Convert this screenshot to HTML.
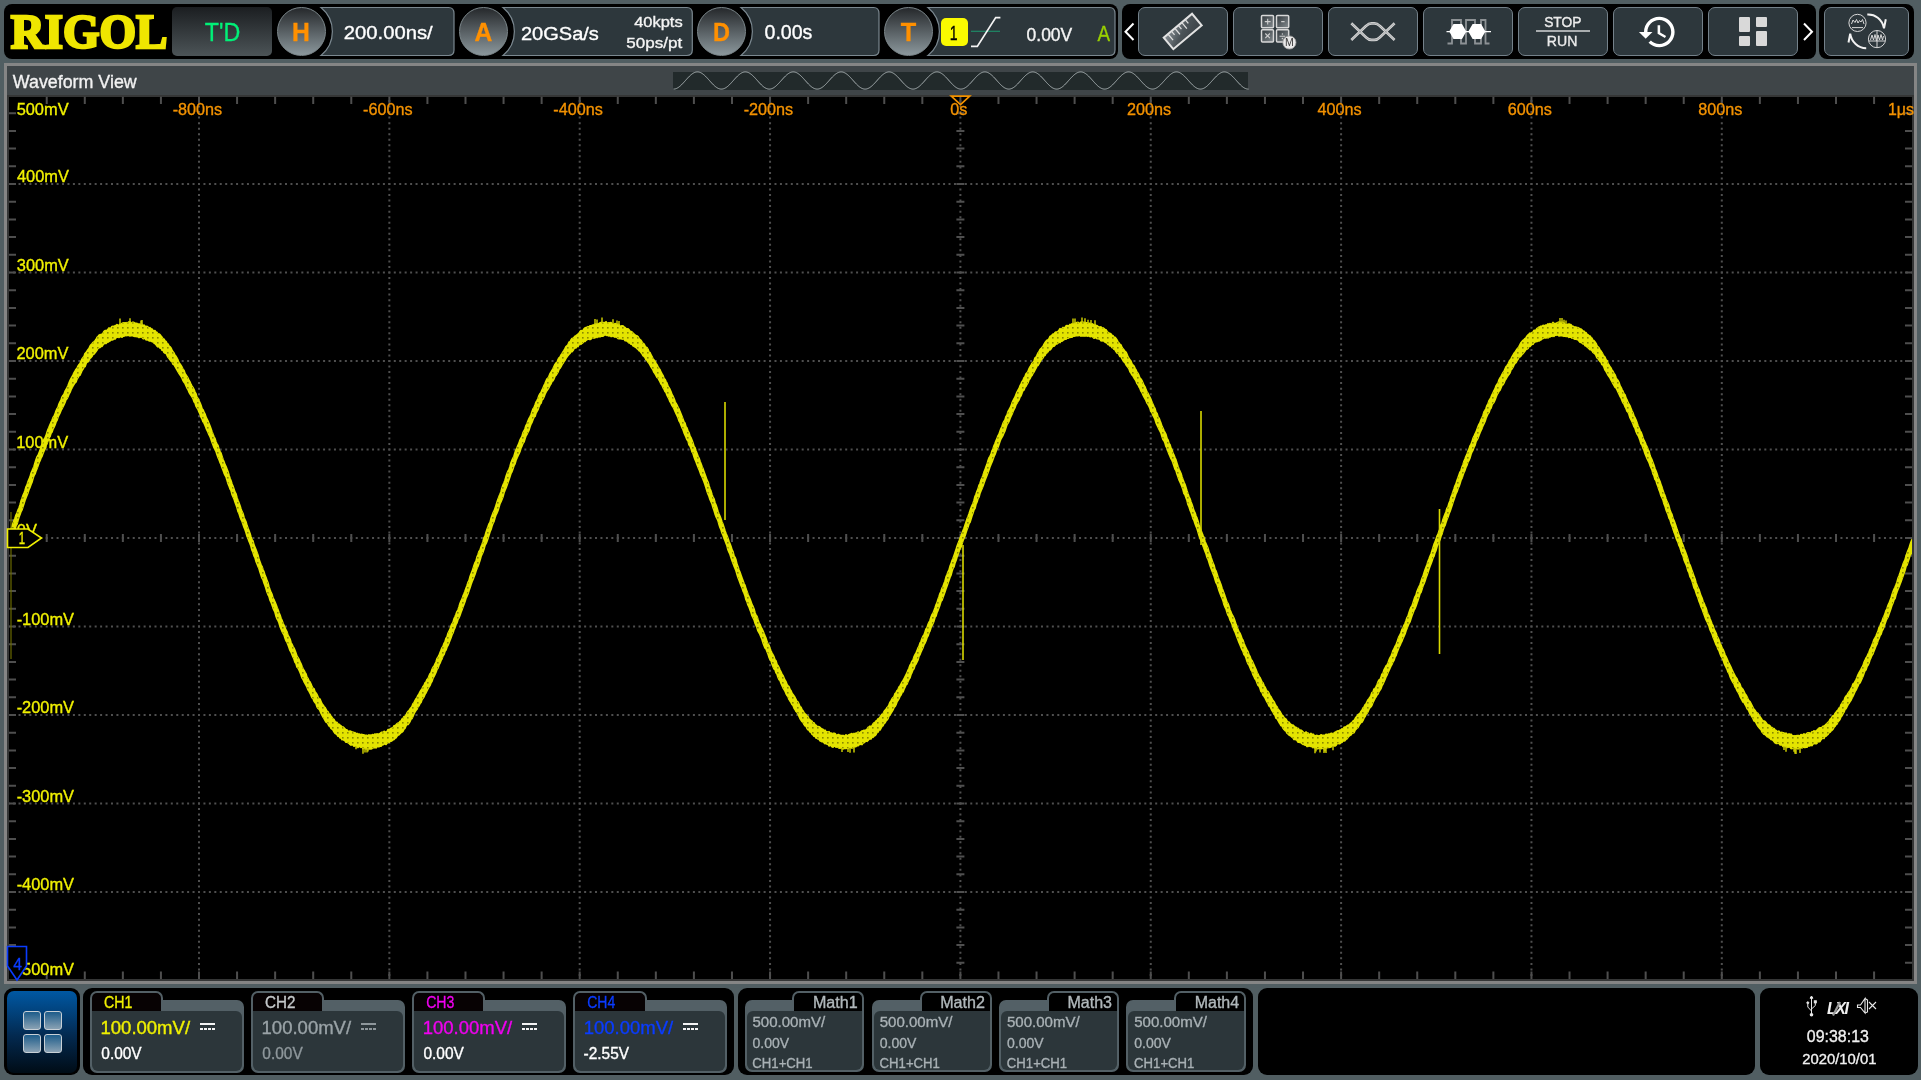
<!DOCTYPE html><html><head><meta charset="utf-8"><style>
*{margin:0;padding:0;box-sizing:border-box}
html,body{width:1921px;height:1080px;overflow:hidden;background:#515e62;font-family:"Liberation Sans", sans-serif;}
.a{position:absolute}
svg{will-change:transform}
.bar{position:absolute;background:#000;border-radius:8px}
.circ{position:absolute;width:49px;height:49px;border-radius:50%;background:linear-gradient(#26292c,#8b979c);border:1px solid #7d888c}
.btn{position:absolute;top:7px;height:49px;width:90px;background:#2d373c;border:1.2px solid #74818a;border-radius:7px}
</style></head><body><div class="bar" style="left:4px;top:4px;width:1114px;height:55px"></div><div class="bar" style="left:1122px;top:4px;width:694px;height:55px"></div><div class="bar" style="left:1819px;top:4px;width:95px;height:55px"></div><div class="a" style="left:172px;top:7px;width:100px;height:49px;border-radius:5px;background:linear-gradient(#1b1e21,#4c5457)"></div><div class="circ" style="left:277.0px;top:7px"></div><svg class="a" style="left:301.5px;top:0px" width="153.5" height="64"><path d="M19.0 7.5 H146.5 Q152.0 7.5 152.0 13.5 V50 Q152.0 55.5 146.5 55.5 H19.0 A31 31 0 0 0 19.0 7.5 Z" fill="#2d373c" stroke="#7b8890" stroke-width="1.2"/></svg><div class="circ" style="left:459.2px;top:7px"></div><svg class="a" style="left:483.7px;top:0px" width="209.8" height="64"><path d="M19.0 7.5 H202.8 Q208.3 7.5 208.3 13.5 V50 Q208.3 55.5 202.8 55.5 H19.0 A31 31 0 0 0 19.0 7.5 Z" fill="#2d373c" stroke="#7b8890" stroke-width="1.2"/></svg><div class="circ" style="left:697.0px;top:7px"></div><svg class="a" style="left:721.5px;top:0px" width="158.5" height="64"><path d="M19.0 7.5 H151.5 Q157.0 7.5 157.0 13.5 V50 Q157.0 55.5 151.5 55.5 H19.0 A31 31 0 0 0 19.0 7.5 Z" fill="#2d373c" stroke="#7b8890" stroke-width="1.2"/></svg><div class="circ" style="left:884.0px;top:7px"></div><svg class="a" style="left:908.5px;top:0px" width="207.5" height="64"><path d="M19.0 7.5 H200.5 Q206.0 7.5 206.0 13.5 V50 Q206.0 55.5 200.5 55.5 H19.0 A31 31 0 0 0 19.0 7.5 Z" fill="#2d373c" stroke="#7b8890" stroke-width="1.2"/></svg><div class="a" style="left:941px;top:17.7px;width:26.7px;height:28.5px;border-radius:5px;background:#fafa00"></div><svg class="a" style="left:965px;top:10px" width="40" height="42"><line x1="6" y1="21.3" x2="35" y2="21.3" stroke="#1f8a66" stroke-width="1.2"/><path d="M6 36.4 H12.3 L30.7 7.6 H35.4" fill="none" stroke="#f4f4f4" stroke-width="1.7"/></svg><svg class="a" style="left:1120px;top:20px" width="20" height="24"><path d="M13.5 3.5 L5.5 11.7 L13.5 20" fill="none" stroke="#fff" stroke-width="2"/></svg><div class="btn" style="left:1138px;width:90px"></div><div class="btn" style="left:1233px;width:90px"></div><div class="btn" style="left:1328px;width:90px"></div><div class="btn" style="left:1423px;width:90px"></div><div class="btn" style="left:1518px;width:90px"></div><div class="btn" style="left:1613px;width:90px"></div><div class="btn" style="left:1708px;width:90px"></div><div class="btn" style="left:1824px;width:85px"></div><svg class="a" style="left:1799px;top:20px" width="20" height="24"><path d="M5 3.5 L13 11.7 L5 20" fill="none" stroke="#fff" stroke-width="2"/></svg><div class="a" style="left:1536px;top:30px;width:54px;height:2px;background:#a9adaf"></div><div class="a" style="left:1739px;top:17px;width:11px;height:15px;background:#d9d9d9;border-radius:1px"></div><div class="a" style="left:1739px;top:36px;width:11px;height:10px;background:#d9d9d9;border-radius:1px"></div><div class="a" style="left:1755.5px;top:17px;width:11.5px;height:10px;background:#d9d9d9;border-radius:1px"></div><div class="a" style="left:1755.5px;top:30.5px;width:11.5px;height:15.5px;background:#d9d9d9;border-radius:1px"></div><svg class="a" style="left:0;top:0" width="1921" height="64">
<defs>
<linearGradient id="rg" x1="0" y1="0" x2="1" y2="1"><stop offset="0" stop-color="#8a9196"/><stop offset="0.5" stop-color="#4b5358"/><stop offset="1" stop-color="#3a4146"/></linearGradient>
<linearGradient id="sg" x1="0" y1="0" x2="1" y2="1"><stop offset="0" stop-color="#2f363a"/><stop offset="1" stop-color="#858c90"/></linearGradient>
</defs>
<!-- ruler -->
<g transform="translate(1182.7 31.4) rotate(-40)">
<rect x="-18.5" y="-7.5" width="37" height="15" fill="url(#rg)" stroke="#e2e2e2" stroke-width="2"/>
<path d="M-13 -7.5v8 M-8.5 -7.5v5 M-4 -7.5v8 M0.5 -7.5v5 M5 -7.5v8 M9.5 -7.5v5" stroke="#dedede" stroke-width="1.3"/>
</g>
<!-- math -->
<g stroke="#d8d8d8" stroke-width="1.5" fill="url(#sg)">
<rect x="1261.5" y="15.5" width="12" height="12.2" rx="1"/>
<rect x="1276.5" y="15.5" width="12.2" height="12.2" rx="1"/>
<rect x="1261.5" y="29.8" width="12" height="12.2" rx="1"/>
<rect x="1276.5" y="29.8" width="12.2" height="12.2" rx="1"/>
</g>
<path d="M1264.8 21.6h5.8M1267.7 18.8v5.8 M1281.2 21.6h3.4 M1265.3 33.5l4.6 4.6M1269.9 33.5l-4.6 4.6 M1279.5 36.3h5.6" stroke="#d0d0d0" stroke-width="1.1" fill="none"/>
<circle cx="1282.4" cy="34" r="0.7" fill="#d0d0d0"/><circle cx="1282.4" cy="38.5" r="0.7" fill="#d0d0d0"/>
<circle cx="1289.4" cy="42.5" r="6.6" fill="#e9e9e9" stroke="#9a9a9a" stroke-width="0.8"/>
<text x="1289.4" y="46.3" font-family="Liberation Sans" font-size="10.5" fill="#3a3a3a" text-anchor="middle">M</text>
<!-- eye -->
<path d="M1351.3 23.3 L1366.2 37.5 Q1368.6 39.9 1371.5 39.9 H1374.4 Q1377.3 39.9 1379.7 37.5 L1394.6 23.3" fill="none" stroke="#d4d4d4" stroke-width="2.6" stroke-linejoin="round"/>
<path d="M1351.3 40 L1366.2 25.8 Q1368.6 23.4 1371.5 23.4 H1374.4 Q1377.3 23.4 1379.7 25.8 L1394.6 40" fill="none" stroke="#d4d4d4" stroke-width="2.6" stroke-linejoin="round"/>
<path d="M1351.3 23.3 L1366.2 37.5 Q1368.6 39.9 1371.5 39.9 H1374.4 Q1377.3 39.9 1379.7 37.5 L1394.6 23.3" fill="none" stroke="#3a4449" stroke-width="0.6" opacity="0.5"/>
<path d="M1351.3 40 L1366.2 25.8 Q1368.6 23.4 1371.5 23.4 H1374.4 Q1377.3 23.4 1379.7 25.8 L1394.6 40" fill="none" stroke="#3a4449" stroke-width="0.6" opacity="0.5"/>
<!-- decode -->
<path d="M1447.5 43.5 H1452 V20 H1461 V43.5 H1466 V20 H1475 V43.5 H1481 V20 H1485.5 V43.5 H1489.5" fill="none" stroke="#8d9295" stroke-width="1.8"/>
<path d="M1449.2 31.6 L1453.5 24 H1462 L1466.3 31.6 L1462 39 H1453.5 Z M1468.3 31.6 L1472.6 24 H1481.1 L1485.4 31.6 L1481.1 39 H1472.6 Z" fill="#fff"/>
<path d="M1446.5 31.6 H1491" stroke="#fff" stroke-width="1.4"/>
<!-- history (material) -->
<g transform="translate(1637.2 11.6) scale(1.7)">
<path d="M13 3c-4.97 0-9 4.03-9 9H1l3.89 3.89.07.14L9 12H6c0-3.87 3.13-7 7-7s7 3.13 7 7-3.13 7-7 7c-1.93 0-3.68-.79-4.94-2.06l-1.42 1.42C8.27 19.99 10.51 21 13 21c4.97 0 9-4.03 9-9s-4.03-9-9-9zm-1 5v5l4.28 2.54.72-1.21-3.5-2.08V8H12z" fill="#fff"/>
</g>
<!-- swap -->
<g fill="none" stroke="#d8d8d8" stroke-width="1">
<circle cx="1857.5" cy="22.9" r="8.6"/>
<circle cx="1877" cy="39.1" r="8.6"/>
<path d="M1851.5 24 L1853 20 L1855 22.5 L1856.5 19.5 L1858 23 L1859.5 20.5 L1861 22 L1862.5 19.5 L1864 24"/>
<path d="M1852 27.6 H1863"/>
<path d="M1877 30.7 V47.5 M1869 41 H1885"/>
<path d="M1870.5 40 L1872 35 L1873.5 40 L1875 34.5 L1876.5 41 L1878 35 L1879.5 40 L1881 34.5 L1882.5 40 L1883.5 36"/>
</g>
<g fill="none" stroke="#f2f2f2" stroke-width="2">
<path d="M1867.3 14.6 C1875 14.2 1882 19 1884 28.2 L1885.8 19.2"/>
<path d="M1866.2 48.2 C1858 48.2 1851.5 42 1850.2 33.6 L1848.5 42.5"/>
</g>
</svg>
<svg class="a" style="left:0;top:0" width="1921" height="64"><text transform="translate(10.83 47.90) scale(0.981 1)" font-family="'Liberation Serif', serif" font-size="47.88" font-weight="bold" font-style="normal" fill="#efe600" stroke="#efe600" stroke-width="2.6" stroke-linejoin="miter">RIGOL</text><text transform="translate(204.73 41.00) scale(0.887 1)" font-family="'Liberation Sans', sans-serif" font-size="26.23" font-weight="normal" font-style="normal" fill="#00f078"  stroke="#00f078" stroke-width="0.35">T'D</text><text transform="translate(292.02 40.70) scale(0.976 1)" font-family="'Liberation Sans', sans-serif" font-size="25.29" font-weight="bold" font-style="normal" fill="#ff9000"  stroke="#ff9000" stroke-width="0.35">H</text><text transform="translate(474.61 41.00) scale(0.955 1)" font-family="'Liberation Sans', sans-serif" font-size="25.86" font-weight="bold" font-style="normal" fill="#ff9000"  stroke="#ff9000" stroke-width="0.35">A</text><text transform="translate(712.99 40.60) scale(0.921 1)" font-family="'Liberation Sans', sans-serif" font-size="25.51" font-weight="bold" font-style="normal" fill="#ff9000"  stroke="#ff9000" stroke-width="0.35">D</text><text transform="translate(900.85 40.60) scale(1.008 1)" font-family="'Liberation Sans', sans-serif" font-size="25.14" font-weight="bold" font-style="normal" fill="#ff9000"  stroke="#ff9000" stroke-width="0.35">T</text><text transform="translate(343.79 39.00) scale(1.055 1)" font-family="'Liberation Sans', sans-serif" font-size="19.18" font-weight="normal" font-style="normal" fill="#fff"  stroke="#fff" stroke-width="0.35">200.00ns/</text><text transform="translate(520.90 40.00) scale(1.076 1)" font-family="'Liberation Sans', sans-serif" font-size="18.63" font-weight="normal" font-style="normal" fill="#fff"  stroke="#fff" stroke-width="0.35">20GSa/s</text><text transform="translate(634.17 26.70) scale(1.134 1)" font-family="'Liberation Sans', sans-serif" font-size="14.52" font-weight="normal" font-style="normal" fill="#f4f4f4"  stroke="#f4f4f4" stroke-width="0.35">40kpts</text><text transform="translate(626.32 47.80) scale(1.100 1)" font-family="'Liberation Sans', sans-serif" font-size="15.48" font-weight="normal" font-style="normal" fill="#f4f4f4"  stroke="#f4f4f4" stroke-width="0.35">50ps/pt</text><text transform="translate(764.51 39.00) scale(0.938 1)" font-family="'Liberation Sans', sans-serif" font-size="20.86" font-weight="normal" font-style="normal" fill="#fff"  stroke="#fff" stroke-width="0.35">0.00s</text><text transform="translate(949.81 39.80) scale(0.705 1)" font-family="'Liberation Sans', sans-serif" font-size="20.00" font-weight="normal" font-style="normal" fill="#000"  stroke="#000" stroke-width="0.35">1</text><text transform="translate(1026.58 40.70) scale(0.971 1)" font-family="'Liberation Sans', sans-serif" font-size="18.00" font-weight="normal" font-style="normal" fill="#f4f4f4"  stroke="#f4f4f4" stroke-width="0.35">0.00V</text><text transform="translate(1097.50 40.70) scale(0.871 1)" font-family="'Liberation Sans', sans-serif" font-size="21.59" font-weight="normal" font-style="normal" fill="#9ad000"  stroke="#9ad000" stroke-width="0.35">A</text><text transform="translate(1544.15 26.90) scale(0.982 1)" font-family="'Liberation Sans', sans-serif" font-size="14.08" font-weight="normal" font-style="normal" fill="#ececec"  stroke="#ececec" stroke-width="0.35">STOP</text><text transform="translate(1546.77 45.50) scale(0.987 1)" font-family="'Liberation Sans', sans-serif" font-size="14.29" font-weight="normal" font-style="normal" fill="#ececec"  stroke="#ececec" stroke-width="0.35">RUN</text></svg><div class="a" style="left:4px;top:63px;width:1913px;height:921px;background:#858585"></div><div class="a" style="left:7px;top:66px;width:1907px;height:915px;background:#353636"></div><div class="a" style="left:7px;top:66px;width:1907px;height:29px;background:#3f4548"></div><div class="a" style="left:9.0px;top:96.5px;width:1903.0px;height:882.5px;background:#000"></div><div class="a" style="left:673px;top:71.5px;width:575px;height:18.5px;background:#222a2b"></div><svg class="a" style="left:0;top:0" width="1921" height="1080"><polyline points="673.5 89.10 674.5 89.03 675.5 88.81 676.5 88.44 677.5 87.94 678.5 87.32 679.5 86.57 680.5 85.72 681.5 84.78 682.5 83.77 683.5 82.70 684.5 81.60 685.5 80.47 686.5 79.35 687.5 78.24 688.5 77.18 689.5 76.17 690.5 75.23 691.5 74.39 692.5 73.65 693.5 73.03 694.5 72.54 695.5 72.18 696.5 71.97 697.5 71.90 698.5 71.98 699.5 72.21 700.5 72.58 701.5 73.09 702.5 73.72 703.5 74.47 704.5 75.32 705.5 76.27 706.5 77.28 707.5 78.35 708.5 79.46 709.5 80.58 710.5 81.71 711.5 82.81 712.5 83.88 713.5 84.88 714.5 85.81 715.5 86.65 716.5 87.38 717.5 88.00 718.5 88.49 719.5 88.83 720.5 89.04 721.5 89.10 722.5 89.01 723.5 88.78 724.5 88.40 725.5 87.89 726.5 87.25 727.5 86.49 728.5 85.63 729.5 84.69 730.5 83.67 731.5 82.59 732.5 81.48 733.5 80.36 734.5 79.24 735.5 78.13 736.5 77.07 737.5 76.07 738.5 75.14 739.5 74.31 740.5 73.58 741.5 72.97 742.5 72.49 743.5 72.15 744.5 71.95 745.5 71.90 746.5 72.00 747.5 72.24 748.5 72.62 749.5 73.14 750.5 73.79 751.5 74.55 752.5 75.41 753.5 76.36 754.5 77.39 755.5 78.46 756.5 79.57 757.5 80.70 758.5 81.82 759.5 82.92 760.5 83.98 761.5 84.98 762.5 85.90 763.5 86.73 764.5 87.45 765.5 88.05 766.5 88.53 767.5 88.86 768.5 89.05 769.5 89.10 770.5 88.99 771.5 88.74 772.5 88.35 773.5 87.83 774.5 87.18 775.5 86.41 776.5 85.54 777.5 84.59 778.5 83.56 779.5 82.48 780.5 81.37 781.5 80.25 782.5 79.12 783.5 78.03 784.5 76.97 785.5 75.97 786.5 75.06 787.5 74.23 788.5 73.52 789.5 72.92 790.5 72.45 791.5 72.13 792.5 71.94 793.5 71.90 794.5 72.02 795.5 72.27 796.5 72.67 797.5 73.20 798.5 73.86 799.5 74.63 800.5 75.50 801.5 76.46 802.5 77.49 803.5 78.57 804.5 79.68 805.5 80.81 806.5 81.93 807.5 83.03 808.5 84.08 809.5 85.07 810.5 85.99 811.5 86.81 812.5 87.52 813.5 88.11 814.5 88.57 815.5 88.89 816.5 89.06 817.5 89.09 818.5 88.98 819.5 88.71 820.5 88.31 821.5 87.77 822.5 87.10 823.5 86.33 824.5 85.45 825.5 84.49 826.5 83.46 827.5 82.37 828.5 81.26 829.5 80.13 830.5 79.01 831.5 77.92 832.5 76.87 833.5 75.88 834.5 74.97 835.5 74.16 836.5 73.45 837.5 72.87 838.5 72.41 839.5 72.10 840.5 71.93 841.5 71.91 842.5 72.03 843.5 72.31 844.5 72.72 845.5 73.26 846.5 73.93 847.5 74.71 848.5 75.60 849.5 76.56 850.5 77.60 851.5 78.68 852.5 79.80 853.5 80.92 854.5 82.04 855.5 83.14 856.5 84.18 857.5 85.17 858.5 86.07 859.5 86.88 860.5 87.58 861.5 88.16 862.5 88.60 863.5 88.91 864.5 89.07 865.5 89.09 866.5 88.96 867.5 88.68 868.5 88.26 869.5 87.71 870.5 87.03 871.5 86.24 872.5 85.36 873.5 84.39 874.5 83.35 875.5 82.26 876.5 81.15 877.5 80.02 878.5 78.90 879.5 77.81 880.5 76.76 881.5 75.78 882.5 74.88 883.5 74.08 884.5 73.39 885.5 72.82 886.5 72.38 887.5 72.08 888.5 71.92 889.5 71.91 890.5 72.06 891.5 72.34 892.5 72.77 893.5 73.32 894.5 74.01 895.5 74.80 896.5 75.69 897.5 76.66 898.5 77.70 899.5 78.79 900.5 79.91 901.5 81.04 902.5 82.15 903.5 83.24 904.5 84.29 905.5 85.26 906.5 86.16 907.5 86.96 908.5 87.64 909.5 88.21 910.5 88.64 911.5 88.93 912.5 89.08 913.5 89.08 914.5 88.93 915.5 88.64 916.5 88.21 917.5 87.64 918.5 86.96 919.5 86.16 920.5 85.26 921.5 84.29 922.5 83.24 923.5 82.15 924.5 81.04 925.5 79.91 926.5 78.79 927.5 77.70 928.5 76.66 929.5 75.69 930.5 74.80 931.5 74.01 932.5 73.32 933.5 72.77 934.5 72.34 935.5 72.06 936.5 71.91 937.5 71.92 938.5 72.08 939.5 72.38 940.5 72.82 941.5 73.39 942.5 74.08 943.5 74.88 944.5 75.78 945.5 76.76 946.5 77.81 947.5 78.90 948.5 80.02 949.5 81.15 950.5 82.26 951.5 83.35 952.5 84.39 953.5 85.36 954.5 86.24 955.5 87.03 956.5 87.71 957.5 88.26 958.5 88.68 959.5 88.96 960.5 89.09 961.5 89.07 962.5 88.91 963.5 88.60 964.5 88.16 965.5 87.58 966.5 86.88 967.5 86.07 968.5 85.17 969.5 84.18 970.5 83.14 971.5 82.04 972.5 80.92 973.5 79.80 974.5 78.68 975.5 77.60 976.5 76.56 977.5 75.60 978.5 74.71 979.5 73.93 980.5 73.26 981.5 72.72 982.5 72.31 983.5 72.03 984.5 71.91 985.5 71.93 986.5 72.10 987.5 72.41 988.5 72.87 989.5 73.45 990.5 74.16 991.5 74.97 992.5 75.88 993.5 76.87 994.5 77.92 995.5 79.01 996.5 80.13 997.5 81.26 998.5 82.37 999.5 83.46 1000.5 84.49 1001.5 85.45 1002.5 86.33 1003.5 87.10 1004.5 87.77 1005.5 88.31 1006.5 88.71 1007.5 88.98 1008.5 89.09 1009.5 89.06 1010.5 88.89 1011.5 88.57 1012.5 88.11 1013.5 87.52 1014.5 86.81 1015.5 85.99 1016.5 85.07 1017.5 84.08 1018.5 83.03 1019.5 81.93 1020.5 80.81 1021.5 79.68 1022.5 78.57 1023.5 77.49 1024.5 76.46 1025.5 75.50 1026.5 74.63 1027.5 73.86 1028.5 73.20 1029.5 72.67 1030.5 72.27 1031.5 72.02 1032.5 71.90 1033.5 71.94 1034.5 72.13 1035.5 72.45 1036.5 72.92 1037.5 73.52 1038.5 74.23 1039.5 75.06 1040.5 75.97 1041.5 76.97 1042.5 78.03 1043.5 79.12 1044.5 80.25 1045.5 81.37 1046.5 82.48 1047.5 83.56 1048.5 84.59 1049.5 85.54 1050.5 86.41 1051.5 87.18 1052.5 87.83 1053.5 88.35 1054.5 88.74 1055.5 88.99 1056.5 89.10 1057.5 89.05 1058.5 88.86 1059.5 88.53 1060.5 88.05 1061.5 87.45 1062.5 86.73 1063.5 85.90 1064.5 84.98 1065.5 83.98 1066.5 82.92 1067.5 81.82 1068.5 80.70 1069.5 79.57 1070.5 78.46 1071.5 77.39 1072.5 76.36 1073.5 75.41 1074.5 74.55 1075.5 73.79 1076.5 73.14 1077.5 72.62 1078.5 72.24 1079.5 72.00 1080.5 71.90 1081.5 71.95 1082.5 72.15 1083.5 72.49 1084.5 72.97 1085.5 73.58 1086.5 74.31 1087.5 75.14 1088.5 76.07 1089.5 77.07 1090.5 78.13 1091.5 79.24 1092.5 80.36 1093.5 81.48 1094.5 82.59 1095.5 83.67 1096.5 84.69 1097.5 85.63 1098.5 86.49 1099.5 87.25 1100.5 87.89 1101.5 88.40 1102.5 88.78 1103.5 89.01 1104.5 89.10 1105.5 89.04 1106.5 88.83 1107.5 88.49 1108.5 88.00 1109.5 87.38 1110.5 86.65 1111.5 85.81 1112.5 84.88 1113.5 83.88 1114.5 82.81 1115.5 81.71 1116.5 80.58 1117.5 79.46 1118.5 78.35 1119.5 77.28 1120.5 76.27 1121.5 75.32 1122.5 74.47 1123.5 73.72 1124.5 73.09 1125.5 72.58 1126.5 72.21 1127.5 71.98 1128.5 71.90 1129.5 71.97 1130.5 72.18 1131.5 72.54 1132.5 73.03 1133.5 73.65 1134.5 74.39 1135.5 75.23 1136.5 76.17 1137.5 77.18 1138.5 78.24 1139.5 79.35 1140.5 80.47 1141.5 81.60 1142.5 82.70 1143.5 83.77 1144.5 84.78 1145.5 85.72 1146.5 86.57 1147.5 87.32 1148.5 87.94 1149.5 88.44 1150.5 88.81 1151.5 89.03 1152.5 89.10 1153.5 89.03 1154.5 88.81 1155.5 88.44 1156.5 87.94 1157.5 87.32 1158.5 86.57 1159.5 85.72 1160.5 84.78 1161.5 83.77 1162.5 82.70 1163.5 81.60 1164.5 80.47 1165.5 79.35 1166.5 78.24 1167.5 77.18 1168.5 76.17 1169.5 75.23 1170.5 74.39 1171.5 73.65 1172.5 73.03 1173.5 72.54 1174.5 72.18 1175.5 71.97 1176.5 71.90 1177.5 71.98 1178.5 72.21 1179.5 72.58 1180.5 73.09 1181.5 73.72 1182.5 74.47 1183.5 75.32 1184.5 76.27 1185.5 77.28 1186.5 78.35 1187.5 79.46 1188.5 80.58 1189.5 81.71 1190.5 82.81 1191.5 83.88 1192.5 84.88 1193.5 85.81 1194.5 86.65 1195.5 87.38 1196.5 88.00 1197.5 88.49 1198.5 88.83 1199.5 89.04 1200.5 89.10 1201.5 89.01 1202.5 88.78 1203.5 88.40 1204.5 87.89 1205.5 87.25 1206.5 86.49 1207.5 85.63 1208.5 84.69 1209.5 83.67 1210.5 82.59 1211.5 81.48 1212.5 80.36 1213.5 79.24 1214.5 78.13 1215.5 77.07 1216.5 76.07 1217.5 75.14 1218.5 74.31 1219.5 73.58 1220.5 72.97 1221.5 72.49 1222.5 72.15 1223.5 71.95 1224.5 71.90 1225.5 72.00 1226.5 72.24 1227.5 72.62 1228.5 73.14 1229.5 73.79 1230.5 74.55 1231.5 75.41 1232.5 76.36 1233.5 77.39 1234.5 78.46 1235.5 79.57 1236.5 80.70 1237.5 81.82 1238.5 82.92 1239.5 83.98 1240.5 84.98 1241.5 85.90 1242.5 86.73 1243.5 87.45 1244.5 88.05 1245.5 88.53 1246.5 88.86 1247.5 89.05 1248.5 89.10" fill="none" stroke="#a8b0b2" stroke-width="1"/><text transform="translate(12.80 87.80) scale(0.938 1)" font-family="'Liberation Sans', sans-serif" font-size="19.04" font-weight="normal" font-style="normal" fill="#f2f2f2"  stroke="#f2f2f2" stroke-width="0.35">Waveform View</text><clipPath id="pc"><rect x="9.0" y="96.5" width="1903.0" height="882.5"/></clipPath><g clip-path="url(#pc)"><line x1="199.00" y1="95.5" x2="199.00" y2="980.5" stroke="#4f4f4f" stroke-width="2" stroke-dasharray="2 3.5312" stroke-dashoffset="1"/><line x1="389.35" y1="95.5" x2="389.35" y2="980.5" stroke="#4f4f4f" stroke-width="2" stroke-dasharray="2 3.5312" stroke-dashoffset="1"/><line x1="579.70" y1="95.5" x2="579.70" y2="980.5" stroke="#4f4f4f" stroke-width="2" stroke-dasharray="2 3.5312" stroke-dashoffset="1"/><line x1="770.05" y1="95.5" x2="770.05" y2="980.5" stroke="#4f4f4f" stroke-width="2" stroke-dasharray="2 3.5312" stroke-dashoffset="1"/><line x1="960.40" y1="95.5" x2="960.40" y2="980.5" stroke="#4f4f4f" stroke-width="2" stroke-dasharray="2 3.5312" stroke-dashoffset="1"/><line x1="1150.75" y1="95.5" x2="1150.75" y2="980.5" stroke="#4f4f4f" stroke-width="2" stroke-dasharray="2 3.5312" stroke-dashoffset="1"/><line x1="1341.10" y1="95.5" x2="1341.10" y2="980.5" stroke="#4f4f4f" stroke-width="2" stroke-dasharray="2 3.5312" stroke-dashoffset="1"/><line x1="1531.45" y1="95.5" x2="1531.45" y2="980.5" stroke="#4f4f4f" stroke-width="2" stroke-dasharray="2 3.5312" stroke-dashoffset="1"/><line x1="1721.80" y1="95.5" x2="1721.80" y2="980.5" stroke="#4f4f4f" stroke-width="2" stroke-dasharray="2 3.5312" stroke-dashoffset="1"/><line x1="8.65" y1="184.00" x2="1912.15" y2="184.00" stroke="#4f4f4f" stroke-width="2" stroke-dasharray="2 3.4386" stroke-dashoffset="1"/><line x1="8.65" y1="272.50" x2="1912.15" y2="272.50" stroke="#4f4f4f" stroke-width="2" stroke-dasharray="2 3.4386" stroke-dashoffset="1"/><line x1="8.65" y1="361.00" x2="1912.15" y2="361.00" stroke="#4f4f4f" stroke-width="2" stroke-dasharray="2 3.4386" stroke-dashoffset="1"/><line x1="8.65" y1="449.50" x2="1912.15" y2="449.50" stroke="#4f4f4f" stroke-width="2" stroke-dasharray="2 3.4386" stroke-dashoffset="1"/><line x1="8.65" y1="538.00" x2="1912.15" y2="538.00" stroke="#4f4f4f" stroke-width="2" stroke-dasharray="2 3.4386" stroke-dashoffset="1"/><line x1="8.65" y1="626.50" x2="1912.15" y2="626.50" stroke="#4f4f4f" stroke-width="2" stroke-dasharray="2 3.4386" stroke-dashoffset="1"/><line x1="8.65" y1="715.00" x2="1912.15" y2="715.00" stroke="#4f4f4f" stroke-width="2" stroke-dasharray="2 3.4386" stroke-dashoffset="1"/><line x1="8.65" y1="803.50" x2="1912.15" y2="803.50" stroke="#4f4f4f" stroke-width="2" stroke-dasharray="2 3.4386" stroke-dashoffset="1"/><line x1="8.65" y1="892.00" x2="1912.15" y2="892.00" stroke="#4f4f4f" stroke-width="2" stroke-dasharray="2 3.4386" stroke-dashoffset="1"/><path d="M46.72 534.0v8M84.79 534.0v8M122.86 534.0v8M160.93 534.0v8M199.00 534.0v8M237.07 534.0v8M275.14 534.0v8M313.21 534.0v8M351.28 534.0v8M389.35 534.0v8M427.42 534.0v8M465.49 534.0v8M503.56 534.0v8M541.63 534.0v8M579.70 534.0v8M617.77 534.0v8M655.84 534.0v8M693.91 534.0v8M731.98 534.0v8M770.05 534.0v8M808.12 534.0v8M846.19 534.0v8M884.26 534.0v8M922.33 534.0v8M960.40 534.0v8M998.47 534.0v8M1036.54 534.0v8M1074.61 534.0v8M1112.68 534.0v8M1150.75 534.0v8M1188.82 534.0v8M1226.89 534.0v8M1264.96 534.0v8M1303.03 534.0v8M1341.10 534.0v8M1379.17 534.0v8M1417.24 534.0v8M1455.31 534.0v8M1493.38 534.0v8M1531.45 534.0v8M1569.52 534.0v8M1607.59 534.0v8M1645.66 534.0v8M1683.73 534.0v8M1721.80 534.0v8M1759.87 534.0v8M1797.94 534.0v8M1836.01 534.0v8M1874.08 534.0v8M956.4 113.20h8M956.4 130.90h8M956.4 148.60h8M956.4 166.30h8M956.4 184.00h8M956.4 201.70h8M956.4 219.40h8M956.4 237.10h8M956.4 254.80h8M956.4 272.50h8M956.4 290.20h8M956.4 307.90h8M956.4 325.60h8M956.4 343.30h8M956.4 361.00h8M956.4 378.70h8M956.4 396.40h8M956.4 414.10h8M956.4 431.80h8M956.4 449.50h8M956.4 467.20h8M956.4 484.90h8M956.4 502.60h8M956.4 520.30h8M956.4 538.00h8M956.4 555.70h8M956.4 573.40h8M956.4 591.10h8M956.4 608.80h8M956.4 626.50h8M956.4 644.20h8M956.4 661.90h8M956.4 679.60h8M956.4 697.30h8M956.4 715.00h8M956.4 732.70h8M956.4 750.40h8M956.4 768.10h8M956.4 785.80h8M956.4 803.50h8M956.4 821.20h8M956.4 838.90h8M956.4 856.60h8M956.4 874.30h8M956.4 892.00h8M956.4 909.70h8M956.4 927.40h8M956.4 945.10h8M956.4 962.80h8" stroke="#4f4f4f" stroke-width="2" fill="none"/><path d="M46.72 96.5v7.5M46.72 979.0v-7.5M84.79 96.5v7.5M84.79 979.0v-7.5M122.86 96.5v7.5M122.86 979.0v-7.5M160.93 96.5v7.5M160.93 979.0v-7.5M199.00 96.5v7.5M199.00 979.0v-7.5M237.07 96.5v7.5M237.07 979.0v-7.5M275.14 96.5v7.5M275.14 979.0v-7.5M313.21 96.5v7.5M313.21 979.0v-7.5M351.28 96.5v7.5M351.28 979.0v-7.5M389.35 96.5v7.5M389.35 979.0v-7.5M427.42 96.5v7.5M427.42 979.0v-7.5M465.49 96.5v7.5M465.49 979.0v-7.5M503.56 96.5v7.5M503.56 979.0v-7.5M541.63 96.5v7.5M541.63 979.0v-7.5M579.70 96.5v7.5M579.70 979.0v-7.5M617.77 96.5v7.5M617.77 979.0v-7.5M655.84 96.5v7.5M655.84 979.0v-7.5M693.91 96.5v7.5M693.91 979.0v-7.5M731.98 96.5v7.5M731.98 979.0v-7.5M770.05 96.5v7.5M770.05 979.0v-7.5M808.12 96.5v7.5M808.12 979.0v-7.5M846.19 96.5v7.5M846.19 979.0v-7.5M884.26 96.5v7.5M884.26 979.0v-7.5M922.33 96.5v7.5M922.33 979.0v-7.5M960.40 96.5v7.5M960.40 979.0v-7.5M998.47 96.5v7.5M998.47 979.0v-7.5M1036.54 96.5v7.5M1036.54 979.0v-7.5M1074.61 96.5v7.5M1074.61 979.0v-7.5M1112.68 96.5v7.5M1112.68 979.0v-7.5M1150.75 96.5v7.5M1150.75 979.0v-7.5M1188.82 96.5v7.5M1188.82 979.0v-7.5M1226.89 96.5v7.5M1226.89 979.0v-7.5M1264.96 96.5v7.5M1264.96 979.0v-7.5M1303.03 96.5v7.5M1303.03 979.0v-7.5M1341.10 96.5v7.5M1341.10 979.0v-7.5M1379.17 96.5v7.5M1379.17 979.0v-7.5M1417.24 96.5v7.5M1417.24 979.0v-7.5M1455.31 96.5v7.5M1455.31 979.0v-7.5M1493.38 96.5v7.5M1493.38 979.0v-7.5M1531.45 96.5v7.5M1531.45 979.0v-7.5M1569.52 96.5v7.5M1569.52 979.0v-7.5M1607.59 96.5v7.5M1607.59 979.0v-7.5M1645.66 96.5v7.5M1645.66 979.0v-7.5M1683.73 96.5v7.5M1683.73 979.0v-7.5M1721.80 96.5v7.5M1721.80 979.0v-7.5M1759.87 96.5v7.5M1759.87 979.0v-7.5M1797.94 96.5v7.5M1797.94 979.0v-7.5M1836.01 96.5v7.5M1836.01 979.0v-7.5M1874.08 96.5v7.5M1874.08 979.0v-7.5M9.0 113.20h7M1912.0 113.20h-7M9.0 130.90h7M1912.0 130.90h-7M9.0 148.60h7M1912.0 148.60h-7M9.0 166.30h7M1912.0 166.30h-7M9.0 184.00h7M1912.0 184.00h-7M9.0 201.70h7M1912.0 201.70h-7M9.0 219.40h7M1912.0 219.40h-7M9.0 237.10h7M1912.0 237.10h-7M9.0 254.80h7M1912.0 254.80h-7M9.0 272.50h7M1912.0 272.50h-7M9.0 290.20h7M1912.0 290.20h-7M9.0 307.90h7M1912.0 307.90h-7M9.0 325.60h7M1912.0 325.60h-7M9.0 343.30h7M1912.0 343.30h-7M9.0 361.00h7M1912.0 361.00h-7M9.0 378.70h7M1912.0 378.70h-7M9.0 396.40h7M1912.0 396.40h-7M9.0 414.10h7M1912.0 414.10h-7M9.0 431.80h7M1912.0 431.80h-7M9.0 449.50h7M1912.0 449.50h-7M9.0 467.20h7M1912.0 467.20h-7M9.0 484.90h7M1912.0 484.90h-7M9.0 502.60h7M1912.0 502.60h-7M9.0 520.30h7M1912.0 520.30h-7M9.0 538.00h7M1912.0 538.00h-7M9.0 555.70h7M1912.0 555.70h-7M9.0 573.40h7M1912.0 573.40h-7M9.0 591.10h7M1912.0 591.10h-7M9.0 608.80h7M1912.0 608.80h-7M9.0 626.50h7M1912.0 626.50h-7M9.0 644.20h7M1912.0 644.20h-7M9.0 661.90h7M1912.0 661.90h-7M9.0 679.60h7M1912.0 679.60h-7M9.0 697.30h7M1912.0 697.30h-7M9.0 715.00h7M1912.0 715.00h-7M9.0 732.70h7M1912.0 732.70h-7M9.0 750.40h7M1912.0 750.40h-7M9.0 768.10h7M1912.0 768.10h-7M9.0 785.80h7M1912.0 785.80h-7M9.0 803.50h7M1912.0 803.50h-7M9.0 821.20h7M1912.0 821.20h-7M9.0 838.90h7M1912.0 838.90h-7M9.0 856.60h7M1912.0 856.60h-7M9.0 874.30h7M1912.0 874.30h-7M9.0 892.00h7M1912.0 892.00h-7M9.0 909.70h7M1912.0 909.70h-7M9.0 927.40h7M1912.0 927.40h-7M9.0 945.10h7M1912.0 945.10h-7M9.0 962.80h7M1912.0 962.80h-7" stroke="#4e4e4e" stroke-width="2" fill="none"/></g><text transform="translate(16.64 114.50) scale(1.000 1)" font-family="'Liberation Sans', sans-serif" font-size="16.40" font-weight="normal" font-style="normal" fill="#f0f000"  stroke="#f0f000" stroke-width="0.35">500mV</text><text transform="translate(16.97 182.40) scale(1.000 1)" font-family="'Liberation Sans', sans-serif" font-size="16.40" font-weight="normal" font-style="normal" fill="#f0f000"  stroke="#f0f000" stroke-width="0.35">400mV</text><text transform="translate(16.81 270.90) scale(1.000 1)" font-family="'Liberation Sans', sans-serif" font-size="16.40" font-weight="normal" font-style="normal" fill="#f0f000"  stroke="#f0f000" stroke-width="0.35">300mV</text><text transform="translate(16.48 359.40) scale(1.000 1)" font-family="'Liberation Sans', sans-serif" font-size="16.40" font-weight="normal" font-style="normal" fill="#f0f000"  stroke="#f0f000" stroke-width="0.35">200mV</text><text transform="translate(16.15 447.90) scale(1.000 1)" font-family="'Liberation Sans', sans-serif" font-size="16.40" font-weight="normal" font-style="normal" fill="#f0f000"  stroke="#f0f000" stroke-width="0.35">100mV</text><text transform="translate(16.81 536.40) scale(1.000 1)" font-family="'Liberation Sans', sans-serif" font-size="16.40" font-weight="normal" font-style="normal" fill="#f0f000"  stroke="#f0f000" stroke-width="0.35">0V</text><text transform="translate(16.64 624.90) scale(1.000 1)" font-family="'Liberation Sans', sans-serif" font-size="16.40" font-weight="normal" font-style="normal" fill="#f0f000"  stroke="#f0f000" stroke-width="0.35">-100mV</text><text transform="translate(16.64 713.40) scale(1.000 1)" font-family="'Liberation Sans', sans-serif" font-size="16.40" font-weight="normal" font-style="normal" fill="#f0f000"  stroke="#f0f000" stroke-width="0.35">-200mV</text><text transform="translate(16.64 801.90) scale(1.000 1)" font-family="'Liberation Sans', sans-serif" font-size="16.40" font-weight="normal" font-style="normal" fill="#f0f000"  stroke="#f0f000" stroke-width="0.35">-300mV</text><text transform="translate(16.64 890.40) scale(1.000 1)" font-family="'Liberation Sans', sans-serif" font-size="16.40" font-weight="normal" font-style="normal" fill="#f0f000"  stroke="#f0f000" stroke-width="0.35">-400mV</text><text transform="translate(16.64 974.70) scale(1.000 1)" font-family="'Liberation Sans', sans-serif" font-size="16.40" font-weight="normal" font-style="normal" fill="#f0f000"  stroke="#f0f000" stroke-width="0.35">-500mV</text><text transform="translate(172.65 115.00) scale(1.000 1)" font-family="'Liberation Sans', sans-serif" font-size="16.20" font-weight="normal" font-style="normal" fill="#f39200"  stroke="#f39200" stroke-width="0.35">-800ns</text><text transform="translate(363.00 115.00) scale(1.000 1)" font-family="'Liberation Sans', sans-serif" font-size="16.20" font-weight="normal" font-style="normal" fill="#f39200"  stroke="#f39200" stroke-width="0.35">-600ns</text><text transform="translate(553.35 115.00) scale(1.000 1)" font-family="'Liberation Sans', sans-serif" font-size="16.20" font-weight="normal" font-style="normal" fill="#f39200"  stroke="#f39200" stroke-width="0.35">-400ns</text><text transform="translate(743.70 115.00) scale(1.000 1)" font-family="'Liberation Sans', sans-serif" font-size="16.20" font-weight="normal" font-style="normal" fill="#f39200"  stroke="#f39200" stroke-width="0.35">-200ns</text><text transform="translate(950.35 115.00) scale(1.000 1)" font-family="'Liberation Sans', sans-serif" font-size="16.20" font-weight="normal" font-style="normal" fill="#f39200"  stroke="#f39200" stroke-width="0.35">0s</text><text transform="translate(1127.02 115.00) scale(1.000 1)" font-family="'Liberation Sans', sans-serif" font-size="16.20" font-weight="normal" font-style="normal" fill="#f39200"  stroke="#f39200" stroke-width="0.35">200ns</text><text transform="translate(1317.61 115.00) scale(1.000 1)" font-family="'Liberation Sans', sans-serif" font-size="16.20" font-weight="normal" font-style="normal" fill="#f39200"  stroke="#f39200" stroke-width="0.35">400ns</text><text transform="translate(1507.72 115.00) scale(1.000 1)" font-family="'Liberation Sans', sans-serif" font-size="16.20" font-weight="normal" font-style="normal" fill="#f39200"  stroke="#f39200" stroke-width="0.35">600ns</text><text transform="translate(1698.15 115.00) scale(1.000 1)" font-family="'Liberation Sans', sans-serif" font-size="16.20" font-weight="normal" font-style="normal" fill="#f39200"  stroke="#f39200" stroke-width="0.35">800ns</text><text transform="translate(1887.89 114.60) scale(0.983 1)" font-family="'Liberation Sans', sans-serif" font-size="16.20" font-weight="normal" font-style="normal" fill="#f39200"  stroke="#f39200" stroke-width="0.35">1μs</text><g clip-path="url(#pc)"><pattern id="tx" width="5" height="5" patternUnits="userSpaceOnUse"><rect x="2" y="2" width="1.6" height="1.6" fill="#000" opacity="0.4"/></pattern><path d="M9.0 534.7 L10.0 532.5 L11.0 529.5 L12.0 526.0 L13.0 523.3 L14.0 520.5 L15.0 518.3 L16.0 515.1 L17.0 513.1 L18.0 510.2 L19.0 508.0 L20.0 505.0 L21.0 501.1 L22.0 498.6 L23.0 495.5 L24.0 493.5 L25.0 490.5 L26.0 487.0 L27.0 485.2 L28.0 481.8 L29.0 479.3 L30.0 477.1 L31.0 473.4 L32.0 471.2 L33.0 468.8 L34.0 466.5 L35.0 462.9 L36.0 459.8 L37.0 457.0 L38.0 455.6 L39.0 453.2 L40.0 450.4 L41.0 447.7 L42.0 445.6 L43.0 442.5 L44.0 439.4 L45.0 437.9 L46.0 435.7 L47.0 432.6 L48.0 429.6 L49.0 427.4 L50.0 424.8 L51.0 422.5 L52.0 420.6 L53.0 417.7 L54.0 416.1 L55.0 414.2 L56.0 411.0 L57.0 408.8 L58.0 407.5 L59.0 404.0 L60.0 401.9 L61.0 400.2 L62.0 397.1 L63.0 395.5 L64.0 394.3 L65.0 391.5 L66.0 389.6 L67.0 387.9 L68.0 385.8 L69.0 383.0 L70.0 380.6 L71.0 378.6 L72.0 376.9 L73.0 375.2 L74.0 372.9 L75.0 371.2 L76.0 369.3 L77.0 368.5 L78.0 366.2 L79.0 364.6 L80.0 363.7 L81.0 361.4 L82.0 359.0 L83.0 357.7 L84.0 356.7 L85.0 353.6 L86.0 352.7 L87.0 351.1 L88.0 349.6 L89.0 348.7 L90.0 346.3 L91.0 344.8 L92.0 344.0 L93.0 342.4 L94.0 341.9 L95.0 340.8 L96.0 339.6 L97.0 337.5 L98.0 336.7 L99.0 335.2 L100.0 334.7 L101.0 334.9 L102.0 334.1 L103.0 333.4 L104.0 331.4 L105.0 330.7 L106.0 330.7 L107.0 330.3 L108.0 329.4 L109.0 327.9 L110.0 328.6 L111.0 327.9 L112.0 326.5 L113.0 326.3 L114.0 326.9 L115.0 325.7 L116.0 325.8 L117.0 324.6 L118.0 325.3 L119.0 325.3 L120.0 324.3 L121.0 324.2 L122.0 323.6 L123.0 323.0 L124.0 322.9 L125.0 323.0 L126.0 322.7 L127.0 323.4 L128.0 322.7 L129.0 321.9 L130.0 321.8 L131.0 323.0 L132.0 322.8 L133.0 322.2 L134.0 322.6 L135.0 323.3 L136.0 323.3 L137.0 323.6 L138.0 323.9 L139.0 324.4 L140.0 324.0 L141.0 325.2 L142.0 324.3 L143.0 325.8 L144.0 325.1 L145.0 326.2 L146.0 327.0 L147.0 326.3 L148.0 327.1 L149.0 328.5 L150.0 327.7 L151.0 328.9 L152.0 329.0 L153.0 330.5 L154.0 330.9 L155.0 330.7 L156.0 332.5 L157.0 332.3 L158.0 334.3 L159.0 334.0 L160.0 334.7 L161.0 336.1 L162.0 337.3 L163.0 339.0 L164.0 339.1 L165.0 340.9 L166.0 341.4 L167.0 343.6 L168.0 344.0 L169.0 346.2 L170.0 346.7 L171.0 348.1 L172.0 350.2 L173.0 351.9 L174.0 353.1 L175.0 355.3 L176.0 356.4 L177.0 358.1 L178.0 360.2 L179.0 362.7 L180.0 364.0 L181.0 365.5 L182.0 367.1 L183.0 369.6 L184.0 370.5 L185.0 373.5 L186.0 375.1 L187.0 376.4 L188.0 378.1 L189.0 380.5 L190.0 382.0 L191.0 384.5 L192.0 386.1 L193.0 387.6 L194.0 389.7 L195.0 392.1 L196.0 394.0 L197.0 397.4 L198.0 398.6 L199.0 400.9 L200.0 402.9 L201.0 405.3 L202.0 408.7 L203.0 409.8 L204.0 412.2 L205.0 414.1 L206.0 417.2 L207.0 419.1 L208.0 421.1 L209.0 423.7 L210.0 426.0 L211.0 428.8 L212.0 431.7 L213.0 434.4 L214.0 436.8 L215.0 438.7 L216.0 442.1 L217.0 444.2 L218.0 445.6 L219.0 449.4 L220.0 451.7 L221.0 453.3 L222.0 456.5 L223.0 459.6 L224.0 461.9 L225.0 464.7 L226.0 466.6 L227.0 469.2 L228.0 471.8 L229.0 475.3 L230.0 478.2 L231.0 480.7 L232.0 484.0 L233.0 486.3 L234.0 489.3 L235.0 492.2 L236.0 494.0 L237.0 497.8 L238.0 500.6 L239.0 503.1 L240.0 505.8 L241.0 509.1 L242.0 511.7 L243.0 513.7 L244.0 517.5 L245.0 520.0 L246.0 521.9 L247.0 525.6 L248.0 528.4 L249.0 530.9 L250.0 533.5 L251.0 537.0 L252.0 539.9 L253.0 541.1 L254.0 545.2 L255.0 547.4 L256.0 549.8 L257.0 552.6 L258.0 555.3 L259.0 559.4 L260.0 562.0 L261.0 564.9 L262.0 566.6 L263.0 569.8 L264.0 571.9 L265.0 575.4 L266.0 577.6 L267.0 580.7 L268.0 582.9 L269.0 587.0 L270.0 589.9 L271.0 592.5 L272.0 594.4 L273.0 598.1 L274.0 599.7 L275.0 602.2 L276.0 604.5 L277.0 607.4 L278.0 609.8 L279.0 612.8 L280.0 615.0 L281.0 618.3 L282.0 620.4 L283.0 623.3 L284.0 625.4 L285.0 627.9 L286.0 630.3 L287.0 632.0 L288.0 635.4 L289.0 637.0 L290.0 639.1 L291.0 642.6 L292.0 644.4 L293.0 646.6 L294.0 648.2 L295.0 650.6 L296.0 653.3 L297.0 656.2 L298.0 657.7 L299.0 659.5 L300.0 661.9 L301.0 663.9 L302.0 666.5 L303.0 668.9 L304.0 670.4 L305.0 672.4 L306.0 673.9 L307.0 677.4 L308.0 678.6 L309.0 681.1 L310.0 682.0 L311.0 684.1 L312.0 686.8 L313.0 688.4 L314.0 688.8 L315.0 691.9 L316.0 693.1 L317.0 694.5 L318.0 696.9 L319.0 698.8 L320.0 699.1 L321.0 701.5 L322.0 703.9 L323.0 705.1 L324.0 706.5 L325.0 707.5 L326.0 709.3 L327.0 711.3 L328.0 711.8 L329.0 714.0 L330.0 714.4 L331.0 716.4 L332.0 717.4 L333.0 718.9 L334.0 719.5 L335.0 721.6 L336.0 722.5 L337.0 722.4 L338.0 724.5 L339.0 724.2 L340.0 725.3 L341.0 725.9 L342.0 727.0 L343.0 727.0 L344.0 727.9 L345.0 729.0 L346.0 729.8 L347.0 729.9 L348.0 731.2 L349.0 731.5 L350.0 731.0 L351.0 731.5 L352.0 732.2 L353.0 732.1 L354.0 733.1 L355.0 732.6 L356.0 734.2 L357.0 733.5 L358.0 734.4 L359.0 734.0 L360.0 734.9 L361.0 734.5 L362.0 734.4 L363.0 734.9 L364.0 734.8 L365.0 735.9 L366.0 735.3 L367.0 735.4 L368.0 736.1 L369.0 734.9 L370.0 735.9 L371.0 735.0 L372.0 734.9 L373.0 734.7 L374.0 735.5 L375.0 733.9 L376.0 735.2 L377.0 733.8 L378.0 734.6 L379.0 734.0 L380.0 733.5 L381.0 732.8 L382.0 732.1 L383.0 732.8 L384.0 731.4 L385.0 731.8 L386.0 732.1 L387.0 731.6 L388.0 729.6 L389.0 729.8 L390.0 729.1 L391.0 728.4 L392.0 728.2 L393.0 727.8 L394.0 725.9 L395.0 725.5 L396.0 724.9 L397.0 723.8 L398.0 723.1 L399.0 723.2 L400.0 721.3 L401.0 721.4 L402.0 719.1 L403.0 718.6 L404.0 716.5 L405.0 716.5 L406.0 715.3 L407.0 713.0 L408.0 711.5 L409.0 710.8 L410.0 709.1 L411.0 707.7 L412.0 706.6 L413.0 703.8 L414.0 702.8 L415.0 700.7 L416.0 698.8 L417.0 697.7 L418.0 695.4 L419.0 693.9 L420.0 692.0 L421.0 690.3 L422.0 689.1 L423.0 686.6 L424.0 685.6 L425.0 683.0 L426.0 682.1 L427.0 679.6 L428.0 678.7 L429.0 676.2 L430.0 673.9 L431.0 672.8 L432.0 669.5 L433.0 667.4 L434.0 666.4 L435.0 664.2 L436.0 662.1 L437.0 658.8 L438.0 657.2 L439.0 655.5 L440.0 652.8 L441.0 650.4 L442.0 647.7 L443.0 646.4 L444.0 643.4 L445.0 641.9 L446.0 638.2 L447.0 637.1 L448.0 633.3 L449.0 631.4 L450.0 629.4 L451.0 626.2 L452.0 623.9 L453.0 622.4 L454.0 618.9 L455.0 616.8 L456.0 614.3 L457.0 611.6 L458.0 610.1 L459.0 607.0 L460.0 603.6 L461.0 601.1 L462.0 599.2 L463.0 596.2 L464.0 593.9 L465.0 591.3 L466.0 588.3 L467.0 585.8 L468.0 582.5 L469.0 580.6 L470.0 576.9 L471.0 574.0 L472.0 571.7 L473.0 568.9 L474.0 565.5 L475.0 562.8 L476.0 561.1 L477.0 557.1 L478.0 554.8 L479.0 551.6 L480.0 550.2 L481.0 547.1 L482.0 544.6 L483.0 541.8 L484.0 537.7 L485.0 536.2 L486.0 532.5 L487.0 529.5 L488.0 526.9 L489.0 524.0 L490.0 522.5 L491.0 518.6 L492.0 515.9 L493.0 512.9 L494.0 511.3 L495.0 508.5 L496.0 505.5 L497.0 502.3 L498.0 499.2 L499.0 496.7 L500.0 494.4 L501.0 491.8 L502.0 488.0 L503.0 485.1 L504.0 482.8 L505.0 480.3 L506.0 476.6 L507.0 473.7 L508.0 471.3 L509.0 469.7 L510.0 466.5 L511.0 462.8 L512.0 460.4 L513.0 458.2 L514.0 456.3 L515.0 452.7 L516.0 449.8 L517.0 447.8 L518.0 445.3 L519.0 443.2 L520.0 440.1 L521.0 438.1 L522.0 436.4 L523.0 432.7 L524.0 431.0 L525.0 428.8 L526.0 425.6 L527.0 423.8 L528.0 421.0 L529.0 418.7 L530.0 416.9 L531.0 414.8 L532.0 411.9 L533.0 409.1 L534.0 407.7 L535.0 405.1 L536.0 402.2 L537.0 400.7 L538.0 398.5 L539.0 395.6 L540.0 393.7 L541.0 392.5 L542.0 390.1 L543.0 388.2 L544.0 385.6 L545.0 383.5 L546.0 381.0 L547.0 378.9 L548.0 378.1 L549.0 376.4 L550.0 373.7 L551.0 372.1 L552.0 370.5 L553.0 368.9 L554.0 366.5 L555.0 364.4 L556.0 363.1 L557.0 362.5 L558.0 359.7 L559.0 358.0 L560.0 357.2 L561.0 355.0 L562.0 353.7 L563.0 351.9 L564.0 350.4 L565.0 348.7 L566.0 346.7 L567.0 345.8 L568.0 344.9 L569.0 342.2 L570.0 342.4 L571.0 339.9 L572.0 338.6 L573.0 338.4 L574.0 337.5 L575.0 336.3 L576.0 335.7 L577.0 335.0 L578.0 334.2 L579.0 333.5 L580.0 331.6 L581.0 330.6 L582.0 331.1 L583.0 330.4 L584.0 328.9 L585.0 328.0 L586.0 327.6 L587.0 327.4 L588.0 326.7 L589.0 327.0 L590.0 325.9 L591.0 325.9 L592.0 325.7 L593.0 325.1 L594.0 324.7 L595.0 324.2 L596.0 323.8 L597.0 324.5 L598.0 323.8 L599.0 323.5 L600.0 322.9 L601.0 322.7 L602.0 322.3 L603.0 323.1 L604.0 322.5 L605.0 323.3 L606.0 321.8 L607.0 323.3 L608.0 323.3 L609.0 322.9 L610.0 323.2 L611.0 322.6 L612.0 323.7 L613.0 324.0 L614.0 324.4 L615.0 323.7 L616.0 323.8 L617.0 324.4 L618.0 324.4 L619.0 324.6 L620.0 326.4 L621.0 326.3 L622.0 325.8 L623.0 326.0 L624.0 326.9 L625.0 327.5 L626.0 328.5 L627.0 328.9 L628.0 328.8 L629.0 329.8 L630.0 331.3 L631.0 331.5 L632.0 332.0 L633.0 333.2 L634.0 334.1 L635.0 335.0 L636.0 335.5 L637.0 335.9 L638.0 336.6 L639.0 338.7 L640.0 339.6 L641.0 340.5 L642.0 342.0 L643.0 343.4 L644.0 343.9 L645.0 346.2 L646.0 347.1 L647.0 347.8 L648.0 349.4 L649.0 352.2 L650.0 352.5 L651.0 355.0 L652.0 356.7 L653.0 359.0 L654.0 360.1 L655.0 361.5 L656.0 363.5 L657.0 364.8 L658.0 366.9 L659.0 368.5 L660.0 369.8 L661.0 372.3 L662.0 374.0 L663.0 375.6 L664.0 378.6 L665.0 379.4 L666.0 381.6 L667.0 383.2 L668.0 386.3 L669.0 387.8 L670.0 389.5 L671.0 391.8 L672.0 394.7 L673.0 396.3 L674.0 398.6 L675.0 401.3 L676.0 403.5 L677.0 405.0 L678.0 407.4 L679.0 409.0 L680.0 411.7 L681.0 414.1 L682.0 416.6 L683.0 419.3 L684.0 422.1 L685.0 423.1 L686.0 426.9 L687.0 428.1 L688.0 431.3 L689.0 432.7 L690.0 436.2 L691.0 437.7 L692.0 440.4 L693.0 443.1 L694.0 446.4 L695.0 447.8 L696.0 451.0 L697.0 453.6 L698.0 456.4 L699.0 458.1 L700.0 461.2 L701.0 463.8 L702.0 466.6 L703.0 468.8 L704.0 471.9 L705.0 474.6 L706.0 477.4 L707.0 480.2 L708.0 482.1 L709.0 485.7 L710.0 488.8 L711.0 491.1 L712.0 494.8 L713.0 497.1 L714.0 498.9 L715.0 502.8 L716.0 505.0 L717.0 508.1 L718.0 511.6 L719.0 514.1 L720.0 516.3 L721.0 519.1 L722.0 522.1 L723.0 524.4 L724.0 527.4 L725.0 530.8 L726.0 533.6 L727.0 535.8 L728.0 538.5 L729.0 541.6 L730.0 543.8 L731.0 546.6 L732.0 549.9 L733.0 551.7 L734.0 555.9 L735.0 557.4 L736.0 560.1 L737.0 564.4 L738.0 566.8 L739.0 570.0 L740.0 572.3 L741.0 575.2 L742.0 578.0 L743.0 580.7 L744.0 583.6 L745.0 585.4 L746.0 589.1 L747.0 591.6 L748.0 594.6 L749.0 596.8 L750.0 599.1 L751.0 601.7 L752.0 604.8 L753.0 606.5 L754.0 609.0 L755.0 612.8 L756.0 615.4 L757.0 616.4 L758.0 619.8 L759.0 622.9 L760.0 624.4 L761.0 627.2 L762.0 628.9 L763.0 631.0 L764.0 633.6 L765.0 636.0 L766.0 638.4 L767.0 641.7 L768.0 644.1 L769.0 645.3 L770.0 648.6 L771.0 651.0 L772.0 653.1 L773.0 655.0 L774.0 656.9 L775.0 659.9 L776.0 660.9 L777.0 664.4 L778.0 665.7 L779.0 667.6 L780.0 670.1 L781.0 672.0 L782.0 674.1 L783.0 675.7 L784.0 678.0 L785.0 680.3 L786.0 681.8 L787.0 684.6 L788.0 685.8 L789.0 686.7 L790.0 689.5 L791.0 690.7 L792.0 693.4 L793.0 694.5 L794.0 695.9 L795.0 697.5 L796.0 699.6 L797.0 701.6 L798.0 702.0 L799.0 704.4 L800.0 706.8 L801.0 707.2 L802.0 709.9 L803.0 710.9 L804.0 712.7 L805.0 713.8 L806.0 714.6 L807.0 716.2 L808.0 716.8 L809.0 719.2 L810.0 719.8 L811.0 720.6 L812.0 721.3 L813.0 723.1 L814.0 722.9 L815.0 724.8 L816.0 725.3 L817.0 726.5 L818.0 726.6 L819.0 726.8 L820.0 727.5 L821.0 728.4 L822.0 729.1 L823.0 729.3 L824.0 731.2 L825.0 730.2 L826.0 731.8 L827.0 731.9 L828.0 732.2 L829.0 731.7 L830.0 733.4 L831.0 733.2 L832.0 733.3 L833.0 734.2 L834.0 733.2 L835.0 733.5 L836.0 735.0 L837.0 735.3 L838.0 734.7 L839.0 734.7 L840.0 736.0 L841.0 735.3 L842.0 736.3 L843.0 735.3 L844.0 736.1 L845.0 735.9 L846.0 734.8 L847.0 736.1 L848.0 735.4 L849.0 734.7 L850.0 734.4 L851.0 733.9 L852.0 733.7 L853.0 734.9 L854.0 733.4 L855.0 734.2 L856.0 733.1 L857.0 733.3 L858.0 732.1 L859.0 732.6 L860.0 732.8 L861.0 731.7 L862.0 731.0 L863.0 730.7 L864.0 730.4 L865.0 730.5 L866.0 730.1 L867.0 729.3 L868.0 727.6 L869.0 727.0 L870.0 726.2 L871.0 726.7 L872.0 725.9 L873.0 724.1 L874.0 722.9 L875.0 722.4 L876.0 721.0 L877.0 720.5 L878.0 718.9 L879.0 718.6 L880.0 717.3 L881.0 715.7 L882.0 714.3 L883.0 714.1 L884.0 711.8 L885.0 710.3 L886.0 709.5 L887.0 707.6 L888.0 706.8 L889.0 704.9 L890.0 702.3 L891.0 701.1 L892.0 698.9 L893.0 697.6 L894.0 696.8 L895.0 693.7 L896.0 692.8 L897.0 690.7 L898.0 689.9 L899.0 687.1 L900.0 686.0 L901.0 684.1 L902.0 682.2 L903.0 680.7 L904.0 679.0 L905.0 676.8 L906.0 674.9 L907.0 673.0 L908.0 670.4 L909.0 668.3 L910.0 665.4 L911.0 663.6 L912.0 661.3 L913.0 660.2 L914.0 656.9 L915.0 654.8 L916.0 653.2 L917.0 650.9 L918.0 647.9 L919.0 646.6 L920.0 643.3 L921.0 641.6 L922.0 638.6 L923.0 636.3 L924.0 635.1 L925.0 632.2 L926.0 629.1 L927.0 627.9 L928.0 624.7 L929.0 622.4 L930.0 620.6 L931.0 617.2 L932.0 614.7 L933.0 613.3 L934.0 610.7 L935.0 608.0 L936.0 604.9 L937.0 603.0 L938.0 599.5 L939.0 596.8 L940.0 593.6 L941.0 591.6 L942.0 588.3 L943.0 586.6 L944.0 583.7 L945.0 581.3 L946.0 577.2 L947.0 574.8 L948.0 572.0 L949.0 570.3 L950.0 566.4 L951.0 563.9 L952.0 560.8 L953.0 558.6 L954.0 555.7 L955.0 552.8 L956.0 549.9 L957.0 546.6 L958.0 543.8 L959.0 541.4 L960.0 538.4 L961.0 536.1 L962.0 533.5 L963.0 530.8 L964.0 528.2 L965.0 525.2 L966.0 522.3 L967.0 519.2 L968.0 516.8 L969.0 514.1 L970.0 511.0 L971.0 508.0 L972.0 505.6 L973.0 503.6 L974.0 500.4 L975.0 496.5 L976.0 494.3 L977.0 491.4 L978.0 489.2 L979.0 485.5 L980.0 483.6 L981.0 480.2 L982.0 478.0 L983.0 475.5 L984.0 472.2 L985.0 469.9 L986.0 466.8 L987.0 464.4 L988.0 460.9 L989.0 458.0 L990.0 456.4 L991.0 454.4 L992.0 450.9 L993.0 449.1 L994.0 445.8 L995.0 443.5 L996.0 440.8 L997.0 438.7 L998.0 435.9 L999.0 434.3 L1000.0 431.2 L1001.0 428.6 L1002.0 426.6 L1003.0 423.4 L1004.0 421.4 L1005.0 419.9 L1006.0 416.5 L1007.0 415.3 L1008.0 411.6 L1009.0 410.0 L1010.0 408.1 L1011.0 406.2 L1012.0 403.2 L1013.0 400.8 L1014.0 398.9 L1015.0 397.3 L1016.0 394.5 L1017.0 392.1 L1018.0 390.3 L1019.0 388.7 L1020.0 386.0 L1021.0 384.2 L1022.0 381.8 L1023.0 380.5 L1024.0 377.8 L1025.0 376.8 L1026.0 373.8 L1027.0 372.9 L1028.0 371.6 L1029.0 368.9 L1030.0 366.9 L1031.0 365.6 L1032.0 363.3 L1033.0 362.3 L1034.0 361.2 L1035.0 357.9 L1036.0 357.3 L1037.0 355.4 L1038.0 353.0 L1039.0 351.8 L1040.0 349.6 L1041.0 348.7 L1042.0 347.5 L1043.0 346.7 L1044.0 344.4 L1045.0 342.7 L1046.0 341.3 L1047.0 340.2 L1048.0 340.0 L1049.0 338.9 L1050.0 336.5 L1051.0 336.0 L1052.0 335.2 L1053.0 334.2 L1054.0 334.4 L1055.0 332.7 L1056.0 332.0 L1057.0 332.1 L1058.0 331.5 L1059.0 330.2 L1060.0 328.7 L1061.0 329.4 L1062.0 328.8 L1063.0 327.4 L1064.0 327.9 L1065.0 327.4 L1066.0 326.1 L1067.0 325.5 L1068.0 326.2 L1069.0 325.8 L1070.0 324.5 L1071.0 325.4 L1072.0 323.8 L1073.0 323.9 L1074.0 323.6 L1075.0 323.2 L1076.0 323.1 L1077.0 322.5 L1078.0 322.4 L1079.0 323.3 L1080.0 323.1 L1081.0 322.2 L1082.0 322.2 L1083.0 322.2 L1084.0 322.5 L1085.0 322.3 L1086.0 323.0 L1087.0 322.9 L1088.0 323.0 L1089.0 324.1 L1090.0 323.1 L1091.0 324.0 L1092.0 323.8 L1093.0 324.2 L1094.0 325.3 L1095.0 324.6 L1096.0 325.8 L1097.0 325.7 L1098.0 326.5 L1099.0 327.1 L1100.0 327.2 L1101.0 326.9 L1102.0 328.4 L1103.0 327.9 L1104.0 328.7 L1105.0 329.5 L1106.0 329.8 L1107.0 331.5 L1108.0 332.5 L1109.0 333.1 L1110.0 333.4 L1111.0 334.0 L1112.0 335.7 L1113.0 335.7 L1114.0 337.6 L1115.0 337.3 L1116.0 338.6 L1117.0 339.9 L1118.0 342.0 L1119.0 343.1 L1120.0 344.5 L1121.0 345.1 L1122.0 347.5 L1123.0 348.9 L1124.0 350.0 L1125.0 351.4 L1126.0 352.1 L1127.0 354.4 L1128.0 357.0 L1129.0 358.5 L1130.0 360.2 L1131.0 361.2 L1132.0 364.1 L1133.0 365.1 L1134.0 366.1 L1135.0 368.4 L1136.0 370.0 L1137.0 372.4 L1138.0 373.4 L1139.0 375.7 L1140.0 378.2 L1141.0 379.1 L1142.0 380.8 L1143.0 383.1 L1144.0 385.5 L1145.0 386.9 L1146.0 389.7 L1147.0 392.1 L1148.0 393.2 L1149.0 395.7 L1150.0 397.4 L1151.0 399.8 L1152.0 402.4 L1153.0 404.5 L1154.0 406.8 L1155.0 408.6 L1156.0 412.4 L1157.0 413.3 L1158.0 417.0 L1159.0 418.0 L1160.0 420.9 L1161.0 423.4 L1162.0 426.4 L1163.0 428.4 L1164.0 430.8 L1165.0 432.6 L1166.0 434.7 L1167.0 438.4 L1168.0 439.9 L1169.0 443.4 L1170.0 444.8 L1171.0 448.3 L1172.0 450.0 L1173.0 453.4 L1174.0 455.2 L1175.0 457.8 L1176.0 460.2 L1177.0 463.4 L1178.0 466.5 L1179.0 469.3 L1180.0 471.4 L1181.0 473.6 L1182.0 477.0 L1183.0 479.9 L1184.0 482.3 L1185.0 484.5 L1186.0 487.8 L1187.0 491.1 L1188.0 494.1 L1189.0 496.8 L1190.0 498.8 L1191.0 502.0 L1192.0 504.5 L1193.0 507.8 L1194.0 511.0 L1195.0 512.8 L1196.0 516.1 L1197.0 518.2 L1198.0 521.2 L1199.0 525.0 L1200.0 527.6 L1201.0 530.5 L1202.0 533.0 L1203.0 535.5 L1204.0 537.7 L1205.0 541.5 L1206.0 543.8 L1207.0 546.1 L1208.0 548.4 L1209.0 552.2 L1210.0 554.1 L1211.0 557.3 L1212.0 560.2 L1213.0 563.2 L1214.0 565.3 L1215.0 569.4 L1216.0 570.9 L1217.0 573.9 L1218.0 577.2 L1219.0 579.9 L1220.0 582.2 L1221.0 584.8 L1222.0 588.3 L1223.0 590.7 L1224.0 593.4 L1225.0 596.3 L1226.0 599.3 L1227.0 602.3 L1228.0 603.5 L1229.0 606.5 L1230.0 610.0 L1231.0 612.2 L1232.0 614.7 L1233.0 616.3 L1234.0 618.4 L1235.0 621.2 L1236.0 624.4 L1237.0 627.1 L1238.0 629.5 L1239.0 632.0 L1240.0 633.2 L1241.0 635.9 L1242.0 638.8 L1243.0 640.3 L1244.0 643.6 L1245.0 645.9 L1246.0 648.0 L1247.0 650.2 L1248.0 651.8 L1249.0 654.9 L1250.0 656.4 L1251.0 659.6 L1252.0 660.6 L1253.0 662.8 L1254.0 665.1 L1255.0 667.3 L1256.0 669.6 L1257.0 672.4 L1258.0 674.1 L1259.0 676.6 L1260.0 677.6 L1261.0 679.8 L1262.0 682.1 L1263.0 683.0 L1264.0 685.6 L1265.0 687.1 L1266.0 689.4 L1267.0 691.2 L1268.0 691.6 L1269.0 693.5 L1270.0 695.8 L1271.0 696.8 L1272.0 699.0 L1273.0 700.6 L1274.0 701.7 L1275.0 703.9 L1276.0 705.9 L1277.0 706.9 L1278.0 709.4 L1279.0 710.2 L1280.0 711.5 L1281.0 713.3 L1282.0 715.3 L1283.0 715.9 L1284.0 717.7 L1285.0 718.5 L1286.0 719.2 L1287.0 721.0 L1288.0 722.2 L1289.0 722.2 L1290.0 723.8 L1291.0 724.4 L1292.0 725.1 L1293.0 725.0 L1294.0 726.2 L1295.0 727.1 L1296.0 727.4 L1297.0 728.3 L1298.0 728.3 L1299.0 729.6 L1300.0 730.4 L1301.0 730.2 L1302.0 730.9 L1303.0 732.0 L1304.0 732.8 L1305.0 733.1 L1306.0 732.0 L1307.0 733.1 L1308.0 733.1 L1309.0 734.2 L1310.0 734.5 L1311.0 733.4 L1312.0 734.7 L1313.0 734.2 L1314.0 735.1 L1315.0 735.8 L1316.0 735.8 L1317.0 735.4 L1318.0 736.1 L1319.0 735.9 L1320.0 735.9 L1321.0 734.8 L1322.0 735.5 L1323.0 735.4 L1324.0 735.4 L1325.0 735.5 L1326.0 734.4 L1327.0 734.6 L1328.0 734.6 L1329.0 734.0 L1330.0 734.4 L1331.0 733.4 L1332.0 733.4 L1333.0 733.9 L1334.0 733.1 L1335.0 732.3 L1336.0 731.8 L1337.0 731.2 L1338.0 730.9 L1339.0 731.0 L1340.0 730.0 L1341.0 729.8 L1342.0 728.9 L1343.0 729.5 L1344.0 727.4 L1345.0 727.1 L1346.0 726.8 L1347.0 725.9 L1348.0 725.3 L1349.0 725.2 L1350.0 724.2 L1351.0 723.2 L1352.0 722.6 L1353.0 721.1 L1354.0 720.6 L1355.0 719.0 L1356.0 717.3 L1357.0 716.3 L1358.0 714.7 L1359.0 714.1 L1360.0 713.4 L1361.0 711.3 L1362.0 710.4 L1363.0 708.0 L1364.0 707.3 L1365.0 704.8 L1366.0 704.0 L1367.0 701.9 L1368.0 699.8 L1369.0 698.8 L1370.0 697.1 L1371.0 695.3 L1372.0 692.6 L1373.0 692.2 L1374.0 689.0 L1375.0 688.7 L1376.0 686.9 L1377.0 684.8 L1378.0 682.0 L1379.0 680.1 L1380.0 679.5 L1381.0 677.4 L1382.0 674.1 L1383.0 673.3 L1384.0 670.0 L1385.0 668.3 L1386.0 666.0 L1387.0 665.3 L1388.0 663.0 L1389.0 660.2 L1390.0 657.9 L1391.0 656.1 L1392.0 653.9 L1393.0 650.6 L1394.0 649.0 L1395.0 646.5 L1396.0 645.1 L1397.0 642.4 L1398.0 639.2 L1399.0 636.6 L1400.0 635.0 L1401.0 632.6 L1402.0 629.4 L1403.0 628.0 L1404.0 625.4 L1405.0 623.6 L1406.0 620.8 L1407.0 617.7 L1408.0 616.2 L1409.0 612.8 L1410.0 609.9 L1411.0 607.2 L1412.0 606.1 L1413.0 603.0 L1414.0 599.8 L1415.0 596.9 L1416.0 595.3 L1417.0 591.5 L1418.0 589.2 L1419.0 586.8 L1420.0 584.8 L1421.0 581.7 L1422.0 578.5 L1423.0 576.5 L1424.0 573.1 L1425.0 570.0 L1426.0 567.2 L1427.0 564.7 L1428.0 561.5 L1429.0 559.0 L1430.0 556.3 L1431.0 554.0 L1432.0 550.9 L1433.0 547.7 L1434.0 544.4 L1435.0 542.2 L1436.0 539.4 L1437.0 536.2 L1438.0 534.4 L1439.0 531.3 L1440.0 529.0 L1441.0 524.9 L1442.0 523.4 L1443.0 519.5 L1444.0 516.9 L1445.0 514.3 L1446.0 511.8 L1447.0 508.3 L1448.0 507.0 L1449.0 503.3 L1450.0 501.0 L1451.0 497.2 L1452.0 494.7 L1453.0 491.7 L1454.0 489.1 L1455.0 485.8 L1456.0 483.9 L1457.0 480.5 L1458.0 477.9 L1459.0 475.1 L1460.0 472.1 L1461.0 470.6 L1462.0 467.2 L1463.0 464.8 L1464.0 461.3 L1465.0 459.1 L1466.0 456.4 L1467.0 454.4 L1468.0 451.3 L1469.0 449.2 L1470.0 446.0 L1471.0 444.4 L1472.0 441.9 L1473.0 438.4 L1474.0 436.5 L1475.0 434.2 L1476.0 432.2 L1477.0 429.5 L1478.0 426.9 L1479.0 424.4 L1480.0 422.8 L1481.0 419.8 L1482.0 417.9 L1483.0 415.5 L1484.0 412.0 L1485.0 410.5 L1486.0 408.6 L1487.0 405.4 L1488.0 404.1 L1489.0 400.7 L1490.0 399.3 L1491.0 397.3 L1492.0 394.8 L1493.0 393.0 L1494.0 390.7 L1495.0 389.0 L1496.0 385.9 L1497.0 384.4 L1498.0 383.2 L1499.0 380.0 L1500.0 378.1 L1501.0 376.7 L1502.0 374.6 L1503.0 372.6 L1504.0 371.6 L1505.0 369.0 L1506.0 366.9 L1507.0 365.7 L1508.0 364.1 L1509.0 362.2 L1510.0 360.2 L1511.0 359.1 L1512.0 356.9 L1513.0 355.3 L1514.0 353.4 L1515.0 352.4 L1516.0 350.7 L1517.0 349.1 L1518.0 348.2 L1519.0 346.7 L1520.0 344.7 L1521.0 342.7 L1522.0 341.5 L1523.0 340.4 L1524.0 339.8 L1525.0 338.6 L1526.0 337.8 L1527.0 336.1 L1528.0 335.0 L1529.0 334.2 L1530.0 333.2 L1531.0 333.8 L1532.0 332.6 L1533.0 332.2 L1534.0 330.3 L1535.0 330.5 L1536.0 330.1 L1537.0 328.5 L1538.0 328.0 L1539.0 327.2 L1540.0 327.0 L1541.0 326.2 L1542.0 327.1 L1543.0 325.3 L1544.0 325.9 L1545.0 325.4 L1546.0 325.0 L1547.0 325.0 L1548.0 323.8 L1549.0 324.8 L1550.0 323.6 L1551.0 324.3 L1552.0 324.0 L1553.0 322.5 L1554.0 323.6 L1555.0 323.5 L1556.0 323.5 L1557.0 322.9 L1558.0 322.5 L1559.0 322.1 L1560.0 322.0 L1561.0 323.2 L1562.0 322.2 L1563.0 322.5 L1564.0 323.1 L1565.0 324.2 L1566.0 324.3 L1567.0 324.6 L1568.0 324.3 L1569.0 324.0 L1570.0 324.6 L1571.0 324.7 L1572.0 326.0 L1573.0 326.4 L1574.0 326.8 L1575.0 327.0 L1576.0 327.2 L1577.0 327.8 L1578.0 327.6 L1579.0 328.3 L1580.0 328.8 L1581.0 329.1 L1582.0 330.0 L1583.0 331.5 L1584.0 331.1 L1585.0 332.7 L1586.0 332.6 L1587.0 334.4 L1588.0 334.7 L1589.0 335.8 L1590.0 336.0 L1591.0 337.7 L1592.0 338.3 L1593.0 340.5 L1594.0 340.7 L1595.0 342.0 L1596.0 343.4 L1597.0 345.9 L1598.0 347.0 L1599.0 347.9 L1600.0 350.0 L1601.0 351.1 L1602.0 352.7 L1603.0 354.7 L1604.0 356.3 L1605.0 357.2 L1606.0 359.8 L1607.0 360.6 L1608.0 363.7 L1609.0 365.1 L1610.0 366.9 L1611.0 368.1 L1612.0 370.4 L1613.0 371.4 L1614.0 373.5 L1615.0 374.7 L1616.0 377.6 L1617.0 379.6 L1618.0 380.5 L1619.0 382.6 L1620.0 385.7 L1621.0 387.4 L1622.0 389.6 L1623.0 391.5 L1624.0 393.9 L1625.0 394.8 L1626.0 398.2 L1627.0 400.0 L1628.0 402.5 L1629.0 404.3 L1630.0 405.9 L1631.0 408.7 L1632.0 411.1 L1633.0 413.0 L1634.0 416.3 L1635.0 417.8 L1636.0 420.1 L1637.0 422.8 L1638.0 425.8 L1639.0 428.0 L1640.0 430.6 L1641.0 432.1 L1642.0 434.7 L1643.0 438.0 L1644.0 440.5 L1645.0 442.3 L1646.0 444.8 L1647.0 446.8 L1648.0 449.3 L1649.0 451.5 L1650.0 455.6 L1651.0 458.0 L1652.0 459.9 L1653.0 462.9 L1654.0 465.5 L1655.0 468.8 L1656.0 471.1 L1657.0 473.8 L1658.0 477.0 L1659.0 479.3 L1660.0 481.6 L1661.0 484.9 L1662.0 487.4 L1663.0 490.9 L1664.0 493.5 L1665.0 495.9 L1666.0 499.0 L1667.0 501.8 L1668.0 503.5 L1669.0 506.4 L1670.0 510.4 L1671.0 512.7 L1672.0 514.7 L1673.0 518.6 L1674.0 520.6 L1675.0 523.4 L1676.0 526.3 L1677.0 529.4 L1678.0 532.2 L1679.0 535.4 L1680.0 537.7 L1681.0 539.7 L1682.0 543.5 L1683.0 545.5 L1684.0 548.6 L1685.0 550.8 L1686.0 553.6 L1687.0 556.3 L1688.0 559.6 L1689.0 563.3 L1690.0 565.1 L1691.0 567.7 L1692.0 570.9 L1693.0 573.4 L1694.0 576.4 L1695.0 579.0 L1696.0 582.7 L1697.0 585.4 L1698.0 588.0 L1699.0 589.7 L1700.0 592.9 L1701.0 595.9 L1702.0 598.0 L1703.0 601.6 L1704.0 603.2 L1705.0 605.8 L1706.0 608.0 L1707.0 611.4 L1708.0 614.5 L1709.0 615.8 L1710.0 618.8 L1711.0 621.4 L1712.0 624.1 L1713.0 625.7 L1714.0 629.2 L1715.0 631.2 L1716.0 633.1 L1717.0 636.1 L1718.0 637.9 L1719.0 640.2 L1720.0 643.3 L1721.0 645.1 L1722.0 648.0 L1723.0 649.4 L1724.0 651.8 L1725.0 654.8 L1726.0 656.6 L1727.0 658.8 L1728.0 661.4 L1729.0 663.5 L1730.0 665.4 L1731.0 667.3 L1732.0 670.0 L1733.0 671.9 L1734.0 674.0 L1735.0 675.8 L1736.0 677.6 L1737.0 678.7 L1738.0 681.8 L1739.0 682.7 L1740.0 684.3 L1741.0 687.5 L1742.0 688.3 L1743.0 689.5 L1744.0 691.7 L1745.0 693.9 L1746.0 695.0 L1747.0 696.9 L1748.0 699.2 L1749.0 700.9 L1750.0 701.7 L1751.0 703.6 L1752.0 705.7 L1753.0 707.7 L1754.0 709.4 L1755.0 710.3 L1756.0 712.1 L1757.0 713.0 L1758.0 713.6 L1759.0 715.9 L1760.0 716.7 L1761.0 718.2 L1762.0 719.8 L1763.0 720.8 L1764.0 721.0 L1765.0 721.6 L1766.0 722.6 L1767.0 724.3 L1768.0 724.8 L1769.0 725.1 L1770.0 726.0 L1771.0 727.4 L1772.0 727.6 L1773.0 728.7 L1774.0 728.6 L1775.0 729.9 L1776.0 730.5 L1777.0 731.3 L1778.0 731.5 L1779.0 731.1 L1780.0 732.6 L1781.0 732.6 L1782.0 732.4 L1783.0 733.2 L1784.0 732.9 L1785.0 734.2 L1786.0 733.2 L1787.0 734.1 L1788.0 734.8 L1789.0 734.0 L1790.0 734.8 L1791.0 734.2 L1792.0 735.9 L1793.0 735.7 L1794.0 736.0 L1795.0 735.7 L1796.0 736.0 L1797.0 735.6 L1798.0 735.7 L1799.0 735.7 L1800.0 736.0 L1801.0 734.6 L1802.0 735.1 L1803.0 734.7 L1804.0 733.9 L1805.0 734.6 L1806.0 734.3 L1807.0 733.2 L1808.0 732.8 L1809.0 732.8 L1810.0 733.4 L1811.0 733.0 L1812.0 731.7 L1813.0 732.4 L1814.0 730.8 L1815.0 731.8 L1816.0 730.9 L1817.0 730.3 L1818.0 729.2 L1819.0 728.2 L1820.0 727.7 L1821.0 728.0 L1822.0 727.4 L1823.0 726.3 L1824.0 726.0 L1825.0 725.4 L1826.0 724.5 L1827.0 723.6 L1828.0 722.4 L1829.0 721.7 L1830.0 719.5 L1831.0 718.7 L1832.0 717.1 L1833.0 715.9 L1834.0 715.9 L1835.0 713.5 L1836.0 712.4 L1837.0 710.9 L1838.0 710.2 L1839.0 708.0 L1840.0 707.7 L1841.0 704.8 L1842.0 703.4 L1843.0 701.4 L1844.0 701.0 L1845.0 697.8 L1846.0 696.2 L1847.0 695.3 L1848.0 693.4 L1849.0 692.0 L1850.0 690.7 L1851.0 688.8 L1852.0 687.1 L1853.0 684.0 L1854.0 683.5 L1855.0 681.7 L1856.0 679.9 L1857.0 677.6 L1858.0 674.9 L1859.0 673.0 L1860.0 671.1 L1861.0 669.4 L1862.0 667.5 L1863.0 665.7 L1864.0 662.4 L1865.0 660.5 L1866.0 658.0 L1867.0 656.9 L1868.0 654.4 L1869.0 652.3 L1870.0 649.5 L1871.0 647.7 L1872.0 645.0 L1873.0 642.6 L1874.0 639.6 L1875.0 638.0 L1876.0 636.1 L1877.0 633.7 L1878.0 631.4 L1879.0 627.8 L1880.0 626.4 L1881.0 623.0 L1882.0 621.7 L1883.0 618.3 L1884.0 616.3 L1885.0 613.9 L1886.0 610.6 L1887.0 608.8 L1888.0 605.5 L1889.0 603.5 L1890.0 600.9 L1891.0 598.4 L1892.0 594.7 L1893.0 591.9 L1894.0 589.4 L1895.0 587.3 L1896.0 584.9 L1897.0 582.2 L1898.0 578.4 L1899.0 576.1 L1900.0 573.4 L1901.0 570.1 L1902.0 567.7 L1903.0 564.4 L1904.0 561.9 L1905.0 560.0 L1906.0 556.3 L1907.0 553.4 L1908.0 550.5 L1909.0 548.4 L1910.0 545.0 L1911.0 542.1 L1912.0 539.7 L1912.0 550.6 L1911.0 553.9 L1910.0 555.3 L1909.0 558.9 L1908.0 561.7 L1907.0 564.9 L1906.0 566.3 L1905.0 570.2 L1904.0 573.3 L1903.0 576.0 L1902.0 578.8 L1901.0 581.8 L1900.0 584.3 L1899.0 587.0 L1898.0 589.1 L1897.0 591.7 L1896.0 594.6 L1895.0 598.5 L1894.0 599.8 L1893.0 602.9 L1892.0 605.1 L1891.0 608.2 L1890.0 611.3 L1889.0 613.9 L1888.0 617.1 L1887.0 618.4 L1886.0 620.7 L1885.0 623.6 L1884.0 626.8 L1883.0 629.2 L1882.0 630.9 L1881.0 634.2 L1880.0 635.5 L1879.0 638.4 L1878.0 640.5 L1877.0 643.9 L1876.0 645.8 L1875.0 648.4 L1874.0 650.8 L1873.0 653.8 L1872.0 655.2 L1871.0 657.5 L1870.0 659.5 L1869.0 662.9 L1868.0 665.1 L1867.0 666.6 L1866.0 669.8 L1865.0 670.6 L1864.0 673.2 L1863.0 676.1 L1862.0 678.4 L1861.0 680.7 L1860.0 682.8 L1859.0 683.5 L1858.0 685.9 L1857.0 687.8 L1856.0 690.1 L1855.0 691.6 L1854.0 693.9 L1853.0 696.2 L1852.0 698.0 L1851.0 700.2 L1850.0 701.6 L1849.0 703.3 L1848.0 704.6 L1847.0 706.5 L1846.0 708.5 L1845.0 709.3 L1844.0 712.1 L1843.0 713.6 L1842.0 715.6 L1841.0 716.8 L1840.0 719.3 L1839.0 720.7 L1838.0 721.5 L1837.0 724.0 L1836.0 724.5 L1835.0 726.2 L1834.0 727.2 L1833.0 729.1 L1832.0 730.2 L1831.0 730.9 L1830.0 732.2 L1829.0 732.6 L1828.0 734.4 L1827.0 735.2 L1826.0 736.2 L1825.0 736.2 L1824.0 738.4 L1823.0 737.9 L1822.0 738.7 L1821.0 739.5 L1820.0 741.4 L1819.0 741.8 L1818.0 741.4 L1817.0 743.2 L1816.0 743.8 L1815.0 743.2 L1814.0 743.7 L1813.0 743.8 L1812.0 745.7 L1811.0 744.5 L1810.0 745.8 L1809.0 745.7 L1808.0 745.8 L1807.0 747.2 L1806.0 747.1 L1805.0 747.4 L1804.0 747.3 L1803.0 746.9 L1802.0 748.0 L1801.0 747.5 L1800.0 747.9 L1799.0 747.8 L1798.0 748.9 L1797.0 747.7 L1796.0 748.3 L1795.0 748.1 L1794.0 747.7 L1793.0 747.9 L1792.0 748.7 L1791.0 748.4 L1790.0 747.1 L1789.0 746.7 L1788.0 747.1 L1787.0 747.6 L1786.0 745.9 L1785.0 746.7 L1784.0 745.2 L1783.0 746.4 L1782.0 744.8 L1781.0 744.6 L1780.0 744.9 L1779.0 743.4 L1778.0 743.0 L1777.0 743.5 L1776.0 743.3 L1775.0 742.8 L1774.0 741.5 L1773.0 740.3 L1772.0 739.6 L1771.0 739.4 L1770.0 738.1 L1769.0 737.7 L1768.0 736.8 L1767.0 736.6 L1766.0 735.3 L1765.0 734.3 L1764.0 734.1 L1763.0 733.0 L1762.0 731.9 L1761.0 729.5 L1760.0 728.7 L1759.0 727.5 L1758.0 726.3 L1757.0 724.6 L1756.0 722.6 L1755.0 721.2 L1754.0 721.0 L1753.0 718.4 L1752.0 716.7 L1751.0 715.1 L1750.0 713.8 L1749.0 711.2 L1748.0 709.4 L1747.0 708.5 L1746.0 706.0 L1745.0 704.4 L1744.0 702.4 L1743.0 702.0 L1742.0 700.0 L1741.0 698.4 L1740.0 696.3 L1739.0 693.8 L1738.0 691.9 L1737.0 690.5 L1736.0 688.0 L1735.0 686.7 L1734.0 683.8 L1733.0 682.5 L1732.0 680.6 L1731.0 678.7 L1730.0 676.3 L1729.0 673.2 L1728.0 672.0 L1727.0 669.0 L1726.0 667.0 L1725.0 665.2 L1724.0 662.6 L1723.0 659.6 L1722.0 657.4 L1721.0 656.0 L1720.0 653.4 L1719.0 650.5 L1718.0 649.1 L1717.0 646.0 L1716.0 644.5 L1715.0 641.8 L1714.0 639.2 L1713.0 636.8 L1712.0 633.5 L1711.0 631.5 L1710.0 629.6 L1709.0 626.0 L1708.0 623.8 L1707.0 621.5 L1706.0 619.7 L1705.0 617.0 L1704.0 614.2 L1703.0 611.4 L1702.0 608.5 L1701.0 606.5 L1700.0 603.5 L1699.0 601.1 L1698.0 597.7 L1697.0 595.5 L1696.0 592.4 L1695.0 589.3 L1694.0 587.7 L1693.0 584.0 L1692.0 580.8 L1691.0 578.3 L1690.0 576.5 L1689.0 572.5 L1688.0 570.9 L1687.0 567.0 L1686.0 564.3 L1685.0 562.1 L1684.0 559.6 L1683.0 555.6 L1682.0 553.8 L1681.0 550.7 L1680.0 547.5 L1679.0 545.4 L1678.0 542.1 L1677.0 540.1 L1676.0 537.6 L1675.0 534.2 L1674.0 531.8 L1673.0 528.8 L1672.0 525.6 L1671.0 523.1 L1670.0 519.6 L1669.0 518.1 L1668.0 514.3 L1667.0 512.2 L1666.0 509.6 L1665.0 506.1 L1664.0 503.7 L1663.0 499.9 L1662.0 497.6 L1661.0 495.7 L1660.0 492.3 L1659.0 489.7 L1658.0 486.5 L1657.0 483.9 L1656.0 480.6 L1655.0 479.2 L1654.0 475.7 L1653.0 473.8 L1652.0 469.9 L1651.0 467.6 L1650.0 465.3 L1649.0 462.3 L1648.0 460.3 L1647.0 458.3 L1646.0 456.0 L1645.0 453.5 L1644.0 450.2 L1643.0 448.1 L1642.0 445.0 L1641.0 443.8 L1640.0 440.1 L1639.0 437.5 L1638.0 435.2 L1637.0 433.7 L1636.0 431.4 L1635.0 428.1 L1634.0 426.6 L1633.0 423.8 L1632.0 421.5 L1631.0 419.7 L1630.0 417.7 L1629.0 414.2 L1628.0 412.0 L1627.0 411.1 L1626.0 408.2 L1625.0 406.5 L1624.0 404.0 L1623.0 402.8 L1622.0 400.5 L1621.0 397.8 L1620.0 396.2 L1619.0 394.0 L1618.0 391.9 L1617.0 389.7 L1616.0 387.8 L1615.0 387.2 L1614.0 385.3 L1613.0 383.6 L1612.0 381.7 L1611.0 379.9 L1610.0 377.8 L1609.0 376.5 L1608.0 375.0 L1607.0 373.1 L1606.0 371.3 L1605.0 370.0 L1604.0 367.2 L1603.0 365.1 L1602.0 364.6 L1601.0 362.0 L1600.0 361.4 L1599.0 360.1 L1598.0 358.3 L1597.0 357.8 L1596.0 355.4 L1595.0 353.9 L1594.0 353.0 L1593.0 352.3 L1592.0 350.5 L1591.0 349.7 L1590.0 349.6 L1589.0 348.6 L1588.0 347.6 L1587.0 346.8 L1586.0 345.8 L1585.0 345.6 L1584.0 343.7 L1583.0 343.8 L1582.0 342.9 L1581.0 342.3 L1580.0 342.1 L1579.0 341.0 L1578.0 339.7 L1577.0 339.4 L1576.0 339.1 L1575.0 339.2 L1574.0 338.7 L1573.0 337.6 L1572.0 338.1 L1571.0 337.2 L1570.0 337.0 L1569.0 337.3 L1568.0 336.3 L1567.0 336.1 L1566.0 336.4 L1565.0 336.0 L1564.0 336.3 L1563.0 336.0 L1562.0 335.7 L1561.0 335.7 L1560.0 335.6 L1559.0 335.9 L1558.0 335.0 L1557.0 334.7 L1556.0 335.3 L1555.0 334.9 L1554.0 336.4 L1553.0 335.4 L1552.0 336.3 L1551.0 335.7 L1550.0 337.0 L1549.0 336.9 L1548.0 337.8 L1547.0 336.8 L1546.0 338.1 L1545.0 337.4 L1544.0 337.9 L1543.0 338.4 L1542.0 338.8 L1541.0 339.8 L1540.0 340.3 L1539.0 340.9 L1538.0 340.9 L1537.0 341.5 L1536.0 341.6 L1535.0 341.8 L1534.0 342.5 L1533.0 344.2 L1532.0 344.2 L1531.0 345.2 L1530.0 346.5 L1529.0 346.2 L1528.0 348.4 L1527.0 349.1 L1526.0 349.3 L1525.0 350.9 L1524.0 352.2 L1523.0 353.5 L1522.0 354.2 L1521.0 355.9 L1520.0 356.8 L1519.0 357.2 L1518.0 359.2 L1517.0 360.6 L1516.0 362.5 L1515.0 363.2 L1514.0 364.9 L1513.0 367.1 L1512.0 368.8 L1511.0 369.7 L1510.0 372.8 L1509.0 374.3 L1508.0 375.6 L1507.0 377.1 L1506.0 378.9 L1505.0 380.1 L1504.0 382.9 L1503.0 384.7 L1502.0 385.1 L1501.0 387.7 L1500.0 390.1 L1499.0 391.1 L1498.0 393.0 L1497.0 394.6 L1496.0 397.1 L1495.0 400.0 L1494.0 402.2 L1493.0 403.4 L1492.0 404.9 L1491.0 408.1 L1490.0 409.2 L1489.0 412.5 L1488.0 413.7 L1487.0 415.9 L1486.0 418.2 L1485.0 421.5 L1484.0 423.7 L1483.0 425.5 L1482.0 428.3 L1481.0 430.4 L1480.0 432.6 L1479.0 435.1 L1478.0 438.0 L1477.0 439.8 L1476.0 441.5 L1475.0 445.4 L1474.0 447.2 L1473.0 450.0 L1472.0 451.8 L1471.0 454.3 L1470.0 457.8 L1469.0 460.2 L1468.0 461.8 L1467.0 465.1 L1466.0 467.0 L1465.0 470.1 L1464.0 472.3 L1463.0 474.9 L1462.0 478.2 L1461.0 480.0 L1460.0 483.4 L1459.0 486.4 L1458.0 488.4 L1457.0 491.7 L1456.0 493.5 L1455.0 496.5 L1454.0 499.5 L1453.0 502.3 L1452.0 505.4 L1451.0 508.4 L1450.0 511.4 L1449.0 513.7 L1448.0 516.9 L1447.0 519.2 L1446.0 522.1 L1445.0 525.4 L1444.0 527.1 L1443.0 530.0 L1442.0 533.8 L1441.0 535.9 L1440.0 539.4 L1439.0 542.0 L1438.0 544.2 L1437.0 546.5 L1436.0 550.3 L1435.0 552.6 L1434.0 556.0 L1433.0 557.7 L1432.0 561.0 L1431.0 563.7 L1430.0 566.1 L1429.0 568.9 L1428.0 572.3 L1427.0 575.2 L1426.0 577.8 L1425.0 580.9 L1424.0 583.7 L1423.0 585.7 L1422.0 589.0 L1421.0 592.2 L1420.0 593.6 L1419.0 596.9 L1418.0 600.1 L1417.0 602.9 L1416.0 605.9 L1415.0 608.5 L1414.0 610.1 L1413.0 613.0 L1412.0 615.4 L1411.0 618.6 L1410.0 621.7 L1409.0 623.3 L1408.0 625.8 L1407.0 628.3 L1406.0 630.7 L1405.0 633.9 L1404.0 636.1 L1403.0 638.3 L1402.0 641.0 L1401.0 642.9 L1400.0 645.3 L1399.0 647.2 L1398.0 649.9 L1397.0 652.3 L1396.0 655.6 L1395.0 656.9 L1394.0 660.3 L1393.0 661.7 L1392.0 664.2 L1391.0 665.9 L1390.0 668.2 L1389.0 670.3 L1388.0 672.5 L1387.0 675.0 L1386.0 676.7 L1385.0 679.5 L1384.0 681.7 L1383.0 684.0 L1382.0 685.4 L1381.0 688.6 L1380.0 690.1 L1379.0 691.5 L1378.0 693.9 L1377.0 694.9 L1376.0 696.8 L1375.0 698.3 L1374.0 700.3 L1373.0 702.3 L1372.0 705.0 L1371.0 706.7 L1370.0 707.6 L1369.0 709.1 L1368.0 711.5 L1367.0 713.2 L1366.0 714.3 L1365.0 716.6 L1364.0 718.0 L1363.0 720.4 L1362.0 722.1 L1361.0 722.4 L1360.0 723.9 L1359.0 725.4 L1358.0 727.4 L1357.0 727.9 L1356.0 729.2 L1355.0 730.3 L1354.0 732.7 L1353.0 732.9 L1352.0 733.4 L1351.0 734.9 L1350.0 735.3 L1349.0 736.2 L1348.0 737.3 L1347.0 738.8 L1346.0 739.3 L1345.0 740.6 L1344.0 741.0 L1343.0 740.7 L1342.0 742.2 L1341.0 741.9 L1340.0 743.7 L1339.0 743.6 L1338.0 743.3 L1337.0 743.7 L1336.0 745.3 L1335.0 746.0 L1334.0 746.0 L1333.0 745.2 L1332.0 745.8 L1331.0 746.9 L1330.0 747.2 L1329.0 747.4 L1328.0 747.5 L1327.0 747.6 L1326.0 748.2 L1325.0 747.6 L1324.0 748.9 L1323.0 747.4 L1322.0 748.5 L1321.0 748.6 L1320.0 748.1 L1319.0 748.6 L1318.0 747.8 L1317.0 748.8 L1316.0 747.7 L1315.0 748.0 L1314.0 747.1 L1313.0 747.6 L1312.0 746.7 L1311.0 746.3 L1310.0 746.2 L1309.0 745.6 L1308.0 746.4 L1307.0 746.5 L1306.0 744.8 L1305.0 745.2 L1304.0 744.4 L1303.0 744.3 L1302.0 743.5 L1301.0 742.6 L1300.0 742.4 L1299.0 742.1 L1298.0 742.1 L1297.0 740.3 L1296.0 739.8 L1295.0 739.3 L1294.0 739.5 L1293.0 737.7 L1292.0 737.0 L1291.0 736.1 L1290.0 735.5 L1289.0 735.0 L1288.0 733.9 L1287.0 733.1 L1286.0 731.0 L1285.0 730.4 L1284.0 729.4 L1283.0 728.1 L1282.0 725.6 L1281.0 725.7 L1280.0 723.7 L1279.0 722.2 L1278.0 720.4 L1277.0 718.6 L1276.0 718.3 L1275.0 715.0 L1274.0 714.1 L1273.0 712.0 L1272.0 710.6 L1271.0 708.5 L1270.0 706.3 L1269.0 705.9 L1268.0 703.3 L1267.0 702.0 L1266.0 699.9 L1265.0 697.7 L1264.0 696.2 L1263.0 695.1 L1262.0 691.9 L1261.0 691.4 L1260.0 688.2 L1259.0 686.0 L1258.0 685.3 L1257.0 682.8 L1256.0 680.0 L1255.0 678.8 L1254.0 676.5 L1253.0 674.7 L1252.0 671.3 L1251.0 669.9 L1250.0 667.5 L1249.0 664.9 L1248.0 663.8 L1247.0 661.3 L1246.0 657.8 L1245.0 655.4 L1244.0 654.5 L1243.0 651.2 L1242.0 649.6 L1241.0 647.1 L1240.0 644.7 L1239.0 642.5 L1238.0 639.6 L1237.0 637.2 L1236.0 634.5 L1235.0 631.8 L1234.0 629.8 L1233.0 627.0 L1232.0 624.0 L1231.0 621.6 L1230.0 619.8 L1229.0 616.6 L1228.0 615.1 L1227.0 612.3 L1226.0 608.7 L1225.0 607.0 L1224.0 604.5 L1223.0 600.6 L1222.0 597.9 L1221.0 595.8 L1220.0 593.2 L1219.0 590.4 L1218.0 587.1 L1217.0 584.1 L1216.0 582.5 L1215.0 579.2 L1214.0 575.8 L1213.0 573.4 L1212.0 570.8 L1211.0 568.1 L1210.0 565.4 L1209.0 562.2 L1208.0 559.0 L1207.0 557.3 L1206.0 553.6 L1205.0 551.1 L1204.0 548.5 L1203.0 545.8 L1202.0 542.2 L1201.0 540.3 L1200.0 538.2 L1199.0 535.3 L1198.0 531.8 L1197.0 528.5 L1196.0 526.1 L1195.0 523.5 L1194.0 520.2 L1193.0 518.5 L1192.0 515.1 L1191.0 512.2 L1190.0 509.8 L1189.0 506.6 L1188.0 504.5 L1187.0 500.3 L1186.0 497.8 L1185.0 494.8 L1184.0 493.5 L1183.0 489.5 L1182.0 486.6 L1181.0 484.2 L1180.0 481.8 L1179.0 479.8 L1178.0 476.7 L1177.0 473.9 L1176.0 470.4 L1175.0 469.0 L1174.0 466.0 L1173.0 463.0 L1172.0 460.3 L1171.0 458.6 L1170.0 456.2 L1169.0 454.0 L1168.0 451.1 L1167.0 448.1 L1166.0 446.4 L1165.0 442.9 L1164.0 440.7 L1163.0 439.4 L1162.0 436.5 L1161.0 433.1 L1160.0 431.0 L1159.0 429.2 L1158.0 427.0 L1157.0 424.9 L1156.0 422.6 L1155.0 419.2 L1154.0 417.2 L1153.0 415.4 L1152.0 412.6 L1151.0 411.4 L1150.0 408.5 L1149.0 406.2 L1148.0 404.3 L1147.0 403.0 L1146.0 400.4 L1145.0 398.6 L1144.0 396.8 L1143.0 394.9 L1142.0 392.5 L1141.0 391.1 L1140.0 388.4 L1139.0 386.7 L1138.0 384.6 L1137.0 383.5 L1136.0 380.9 L1135.0 379.3 L1134.0 377.8 L1133.0 375.9 L1132.0 374.9 L1131.0 373.0 L1130.0 371.8 L1129.0 368.8 L1128.0 367.2 L1127.0 366.1 L1126.0 364.7 L1125.0 362.7 L1124.0 361.8 L1123.0 360.2 L1122.0 358.5 L1121.0 356.6 L1120.0 356.5 L1119.0 354.5 L1118.0 352.8 L1117.0 352.9 L1116.0 351.6 L1115.0 349.7 L1114.0 349.3 L1113.0 347.4 L1112.0 347.7 L1111.0 345.7 L1110.0 346.0 L1109.0 344.6 L1108.0 344.4 L1107.0 343.0 L1106.0 342.6 L1105.0 342.1 L1104.0 341.2 L1103.0 340.3 L1102.0 340.9 L1101.0 340.7 L1100.0 339.1 L1099.0 338.9 L1098.0 338.4 L1097.0 338.7 L1096.0 337.9 L1095.0 337.5 L1094.0 338.2 L1093.0 337.1 L1092.0 336.4 L1091.0 336.4 L1090.0 336.6 L1089.0 336.0 L1088.0 335.9 L1087.0 336.1 L1086.0 335.4 L1085.0 336.2 L1084.0 335.1 L1083.0 336.1 L1082.0 335.3 L1081.0 336.2 L1080.0 335.3 L1079.0 335.1 L1078.0 335.7 L1077.0 335.6 L1076.0 335.6 L1075.0 335.9 L1074.0 336.2 L1073.0 336.1 L1072.0 337.1 L1071.0 337.0 L1070.0 337.4 L1069.0 337.5 L1068.0 338.2 L1067.0 338.2 L1066.0 339.2 L1065.0 338.9 L1064.0 339.7 L1063.0 340.3 L1062.0 341.2 L1061.0 340.9 L1060.0 342.5 L1059.0 342.0 L1058.0 343.0 L1057.0 343.9 L1056.0 343.8 L1055.0 345.1 L1054.0 346.1 L1053.0 346.1 L1052.0 347.0 L1051.0 348.8 L1050.0 349.8 L1049.0 349.7 L1048.0 351.7 L1047.0 352.7 L1046.0 353.2 L1045.0 355.5 L1044.0 355.7 L1043.0 357.8 L1042.0 359.0 L1041.0 360.0 L1040.0 361.7 L1039.0 363.5 L1038.0 365.4 L1037.0 365.8 L1036.0 368.1 L1035.0 369.9 L1034.0 372.0 L1033.0 373.2 L1032.0 375.4 L1031.0 376.3 L1030.0 378.6 L1029.0 379.7 L1028.0 382.6 L1027.0 384.2 L1026.0 386.1 L1025.0 387.3 L1024.0 389.9 L1023.0 390.5 L1022.0 393.0 L1021.0 395.7 L1020.0 396.9 L1019.0 399.7 L1018.0 401.2 L1017.0 403.0 L1016.0 404.6 L1015.0 407.6 L1014.0 409.3 L1013.0 411.5 L1012.0 414.2 L1011.0 416.2 L1010.0 418.4 L1009.0 421.3 L1008.0 423.0 L1007.0 424.4 L1006.0 427.4 L1005.0 430.6 L1004.0 432.8 L1003.0 435.3 L1002.0 437.1 L1001.0 438.8 L1000.0 441.3 L999.0 444.2 L998.0 447.1 L997.0 448.9 L996.0 451.4 L995.0 454.4 L994.0 456.4 L993.0 459.2 L992.0 462.0 L991.0 464.2 L990.0 466.6 L989.0 469.7 L988.0 472.5 L987.0 475.2 L986.0 477.7 L985.0 480.3 L984.0 483.0 L983.0 485.9 L982.0 488.3 L981.0 490.6 L980.0 493.1 L979.0 497.1 L978.0 498.6 L977.0 501.9 L976.0 504.1 L975.0 508.2 L974.0 509.8 L973.0 512.9 L972.0 515.7 L971.0 518.9 L970.0 522.2 L969.0 523.6 L968.0 527.0 L967.0 529.5 L966.0 532.4 L965.0 535.7 L964.0 538.2 L963.0 540.5 L962.0 543.8 L961.0 547.0 L960.0 548.6 L959.0 551.6 L958.0 554.4 L957.0 557.0 L956.0 560.4 L955.0 562.8 L954.0 566.7 L953.0 568.2 L952.0 571.3 L951.0 575.1 L950.0 577.2 L949.0 580.2 L948.0 582.9 L947.0 585.9 L946.0 588.6 L945.0 591.7 L944.0 594.4 L943.0 597.3 L942.0 600.1 L941.0 601.3 L940.0 604.6 L939.0 607.5 L938.0 610.3 L937.0 612.3 L936.0 616.0 L935.0 617.2 L934.0 620.9 L933.0 623.4 L932.0 625.4 L931.0 627.5 L930.0 630.8 L929.0 632.7 L928.0 635.9 L927.0 637.6 L926.0 640.7 L925.0 643.0 L924.0 644.5 L923.0 647.6 L922.0 649.6 L921.0 651.8 L920.0 654.5 L919.0 656.1 L918.0 659.8 L917.0 661.8 L916.0 663.9 L915.0 665.2 L914.0 668.6 L913.0 669.7 L912.0 672.3 L911.0 674.3 L910.0 677.8 L909.0 679.2 L908.0 681.3 L907.0 684.0 L906.0 684.7 L905.0 687.2 L904.0 689.1 L903.0 691.9 L902.0 692.7 L901.0 695.0 L900.0 696.2 L899.0 698.6 L898.0 700.3 L897.0 701.8 L896.0 704.7 L895.0 706.5 L894.0 707.5 L893.0 709.8 L892.0 711.5 L891.0 713.1 L890.0 714.9 L889.0 715.8 L888.0 718.5 L887.0 719.9 L886.0 720.8 L885.0 722.8 L884.0 723.4 L883.0 725.7 L882.0 726.2 L881.0 728.2 L880.0 730.0 L879.0 730.0 L878.0 732.2 L877.0 732.3 L876.0 734.4 L875.0 735.6 L874.0 736.1 L873.0 737.3 L872.0 736.8 L871.0 739.0 L870.0 738.7 L869.0 739.3 L868.0 740.4 L867.0 741.3 L866.0 741.0 L865.0 741.7 L864.0 742.6 L863.0 742.9 L862.0 744.5 L861.0 743.8 L860.0 744.4 L859.0 744.6 L858.0 745.8 L857.0 745.2 L856.0 746.6 L855.0 746.6 L854.0 746.6 L853.0 747.6 L852.0 747.9 L851.0 747.8 L850.0 747.3 L849.0 747.3 L848.0 748.5 L847.0 748.5 L846.0 747.7 L845.0 748.6 L844.0 747.7 L843.0 749.0 L842.0 747.8 L841.0 747.6 L840.0 748.3 L839.0 748.0 L838.0 747.1 L837.0 746.7 L836.0 747.1 L835.0 746.2 L834.0 746.2 L833.0 747.1 L832.0 746.8 L831.0 745.4 L830.0 745.4 L829.0 745.9 L828.0 744.0 L827.0 744.1 L826.0 743.3 L825.0 743.6 L824.0 742.6 L823.0 741.5 L822.0 741.7 L821.0 741.1 L820.0 740.7 L819.0 739.1 L818.0 739.0 L817.0 738.2 L816.0 738.0 L815.0 736.1 L814.0 736.2 L813.0 734.7 L812.0 734.2 L811.0 732.2 L810.0 731.9 L809.0 730.0 L808.0 729.6 L807.0 728.4 L806.0 726.0 L805.0 725.9 L804.0 724.4 L803.0 722.1 L802.0 721.6 L801.0 720.1 L800.0 718.5 L799.0 716.2 L798.0 713.9 L797.0 712.2 L796.0 711.4 L795.0 709.4 L794.0 708.0 L793.0 705.3 L792.0 704.4 L791.0 702.3 L790.0 700.9 L789.0 699.4 L788.0 696.5 L787.0 695.4 L786.0 693.5 L785.0 691.0 L784.0 689.4 L783.0 687.7 L782.0 685.5 L781.0 683.2 L780.0 680.3 L779.0 679.5 L778.0 677.2 L777.0 674.0 L776.0 672.7 L775.0 669.5 L774.0 668.8 L773.0 666.5 L772.0 663.9 L771.0 660.6 L770.0 659.5 L769.0 657.1 L768.0 653.8 L767.0 651.5 L766.0 648.8 L765.0 647.8 L764.0 645.5 L763.0 642.7 L762.0 639.2 L761.0 637.0 L760.0 634.4 L759.0 632.6 L758.0 630.9 L757.0 627.5 L756.0 625.1 L755.0 622.8 L754.0 619.6 L753.0 617.7 L752.0 615.7 L751.0 612.3 L750.0 609.7 L749.0 606.8 L748.0 604.9 L747.0 601.6 L746.0 599.7 L745.0 595.6 L744.0 593.0 L743.0 590.8 L742.0 587.6 L741.0 585.4 L740.0 582.7 L739.0 579.9 L738.0 577.4 L737.0 574.3 L736.0 570.8 L735.0 568.2 L734.0 565.8 L733.0 563.2 L732.0 560.5 L731.0 557.4 L730.0 554.2 L729.0 552.2 L728.0 549.7 L727.0 545.8 L726.0 543.3 L725.0 540.4 L724.0 538.1 L723.0 535.1 L722.0 532.9 L721.0 529.6 L720.0 527.5 L719.0 524.3 L718.0 520.6 L717.0 518.5 L716.0 516.5 L715.0 513.6 L714.0 510.3 L713.0 507.5 L712.0 503.8 L711.0 501.6 L710.0 499.4 L709.0 496.2 L708.0 493.9 L707.0 491.1 L706.0 487.8 L705.0 484.5 L704.0 481.6 L703.0 479.1 L702.0 476.6 L701.0 474.9 L700.0 472.0 L699.0 469.3 L698.0 466.9 L697.0 464.4 L696.0 461.7 L695.0 459.4 L694.0 456.7 L693.0 453.2 L692.0 451.8 L691.0 448.3 L690.0 446.0 L689.0 444.7 L688.0 440.8 L687.0 439.7 L686.0 437.2 L685.0 434.9 L684.0 432.6 L683.0 429.4 L682.0 427.5 L681.0 425.0 L680.0 422.3 L679.0 420.8 L678.0 417.6 L677.0 415.5 L676.0 413.3 L675.0 411.2 L674.0 408.7 L673.0 406.8 L672.0 405.5 L671.0 403.1 L670.0 401.6 L669.0 398.9 L668.0 397.0 L667.0 395.2 L666.0 392.3 L665.0 391.3 L664.0 389.0 L663.0 387.5 L662.0 385.0 L661.0 383.9 L660.0 381.7 L659.0 379.9 L658.0 377.7 L657.0 377.4 L656.0 375.4 L655.0 373.6 L654.0 372.3 L653.0 369.9 L652.0 368.4 L651.0 366.8 L650.0 364.8 L649.0 363.1 L648.0 362.0 L647.0 360.3 L646.0 359.6 L645.0 357.3 L644.0 356.4 L643.0 355.6 L642.0 353.6 L641.0 352.4 L640.0 351.0 L639.0 350.6 L638.0 349.2 L637.0 348.5 L636.0 347.4 L635.0 346.9 L634.0 346.2 L633.0 345.7 L632.0 344.0 L631.0 344.1 L630.0 342.9 L629.0 342.8 L628.0 341.9 L627.0 341.1 L626.0 340.6 L625.0 340.6 L624.0 338.9 L623.0 338.8 L622.0 339.1 L621.0 338.4 L620.0 338.7 L619.0 338.7 L618.0 338.4 L617.0 337.4 L616.0 336.5 L615.0 337.1 L614.0 336.1 L613.0 336.4 L612.0 335.6 L611.0 336.5 L610.0 335.5 L609.0 336.0 L608.0 335.1 L607.0 335.4 L606.0 334.9 L605.0 334.8 L604.0 335.3 L603.0 336.1 L602.0 336.0 L601.0 336.2 L600.0 336.8 L599.0 336.0 L598.0 337.0 L597.0 337.5 L596.0 336.2 L595.0 337.9 L594.0 337.9 L593.0 337.8 L592.0 337.4 L591.0 339.1 L590.0 339.6 L589.0 339.0 L588.0 339.3 L587.0 339.3 L586.0 340.3 L585.0 341.5 L584.0 341.1 L583.0 342.5 L582.0 343.2 L581.0 344.2 L580.0 343.7 L579.0 344.4 L578.0 346.5 L577.0 345.9 L576.0 347.9 L575.0 348.0 L574.0 348.5 L573.0 350.5 L572.0 351.6 L571.0 351.6 L570.0 353.3 L569.0 354.2 L568.0 355.5 L567.0 356.7 L566.0 358.2 L565.0 360.2 L564.0 361.4 L563.0 363.3 L562.0 364.5 L561.0 366.5 L560.0 368.2 L559.0 369.3 L558.0 372.0 L557.0 373.5 L556.0 375.2 L555.0 376.1 L554.0 378.8 L553.0 380.7 L552.0 381.3 L551.0 383.8 L550.0 385.2 L549.0 387.3 L548.0 389.1 L547.0 390.4 L546.0 392.2 L545.0 394.1 L544.0 396.9 L543.0 399.0 L542.0 399.8 L541.0 403.2 L540.0 404.1 L539.0 406.6 L538.0 409.6 L537.0 411.3 L536.0 413.0 L535.0 416.4 L534.0 417.1 L533.0 419.5 L532.0 422.3 L531.0 424.0 L530.0 426.7 L529.0 430.1 L528.0 432.0 L527.0 434.2 L526.0 435.7 L525.0 438.8 L524.0 441.9 L523.0 443.1 L522.0 445.8 L521.0 448.0 L520.0 451.3 L519.0 453.7 L518.0 455.6 L517.0 457.9 L516.0 460.2 L515.0 463.8 L514.0 465.5 L513.0 468.8 L512.0 471.5 L511.0 473.3 L510.0 476.4 L509.0 479.5 L508.0 482.3 L507.0 485.3 L506.0 487.9 L505.0 490.2 L504.0 492.8 L503.0 496.6 L502.0 499.1 L501.0 501.6 L500.0 503.6 L499.0 507.1 L498.0 510.4 L497.0 512.8 L496.0 514.8 L495.0 517.7 L494.0 521.3 L493.0 523.3 L492.0 525.9 L491.0 529.4 L490.0 531.7 L489.0 534.9 L488.0 538.2 L487.0 541.1 L486.0 543.6 L485.0 545.2 L484.0 549.1 L483.0 552.1 L482.0 554.2 L481.0 556.5 L480.0 560.2 L479.0 563.2 L478.0 566.1 L477.0 568.2 L476.0 571.0 L475.0 574.2 L474.0 576.8 L473.0 579.4 L472.0 581.6 L471.0 584.4 L470.0 587.7 L469.0 590.5 L468.0 593.7 L467.0 596.0 L466.0 598.0 L465.0 601.4 L464.0 604.1 L463.0 606.8 L462.0 609.7 L461.0 612.3 L460.0 615.3 L459.0 617.8 L458.0 619.2 L457.0 622.8 L456.0 624.4 L455.0 627.5 L454.0 629.5 L453.0 632.9 L452.0 634.7 L451.0 637.7 L450.0 640.2 L449.0 642.8 L448.0 645.2 L447.0 646.9 L446.0 650.0 L445.0 651.2 L444.0 654.5 L443.0 655.8 L442.0 658.7 L441.0 660.4 L440.0 663.1 L439.0 664.9 L438.0 668.0 L437.0 669.3 L436.0 672.2 L435.0 674.3 L434.0 676.5 L433.0 677.9 L432.0 681.2 L431.0 682.7 L430.0 685.5 L429.0 686.8 L428.0 688.7 L427.0 690.7 L426.0 692.7 L425.0 694.2 L424.0 696.8 L423.0 698.2 L422.0 699.5 L421.0 702.4 L420.0 703.4 L419.0 705.7 L418.0 706.4 L417.0 709.1 L416.0 710.2 L415.0 711.8 L414.0 713.7 L413.0 716.1 L412.0 718.4 L411.0 719.0 L410.0 721.5 L409.0 723.0 L408.0 724.5 L407.0 724.5 L406.0 725.7 L405.0 728.3 L404.0 729.0 L403.0 731.1 L402.0 732.0 L401.0 732.6 L400.0 733.5 L399.0 734.8 L398.0 735.1 L397.0 736.1 L396.0 737.7 L395.0 738.2 L394.0 739.4 L393.0 739.8 L392.0 740.7 L391.0 741.1 L390.0 741.2 L389.0 742.5 L388.0 742.1 L387.0 743.0 L386.0 744.4 L385.0 744.0 L384.0 744.0 L383.0 744.7 L382.0 744.9 L381.0 746.2 L380.0 745.7 L379.0 746.8 L378.0 746.1 L377.0 746.8 L376.0 747.9 L375.0 747.0 L374.0 747.9 L373.0 747.1 L372.0 748.4 L371.0 748.9 L370.0 748.9 L369.0 749.0 L368.0 748.8 L367.0 749.0 L366.0 749.0 L365.0 748.1 L364.0 747.8 L363.0 748.6 L362.0 746.9 L361.0 747.3 L360.0 746.5 L359.0 746.5 L358.0 747.5 L357.0 747.1 L356.0 745.5 L355.0 745.6 L354.0 746.2 L353.0 745.0 L352.0 744.3 L351.0 745.1 L350.0 744.4 L349.0 743.1 L348.0 742.7 L347.0 741.9 L346.0 742.2 L345.0 740.7 L344.0 740.3 L343.0 739.0 L342.0 739.7 L341.0 737.9 L340.0 737.8 L339.0 735.9 L338.0 736.2 L337.0 734.6 L336.0 733.9 L335.0 733.2 L334.0 731.8 L333.0 729.9 L332.0 729.0 L331.0 728.3 L330.0 726.2 L329.0 725.9 L328.0 723.8 L327.0 722.5 L326.0 722.0 L325.0 720.3 L324.0 718.3 L323.0 716.9 L322.0 715.0 L321.0 713.2 L320.0 710.6 L319.0 709.0 L318.0 708.3 L317.0 706.7 L316.0 703.4 L315.0 702.5 L314.0 701.1 L313.0 698.2 L312.0 697.7 L311.0 695.2 L310.0 693.0 L309.0 691.1 L308.0 689.8 L307.0 687.0 L306.0 685.2 L305.0 683.3 L304.0 681.5 L303.0 679.2 L302.0 677.8 L301.0 674.7 L300.0 672.2 L299.0 670.0 L298.0 667.9 L297.0 667.0 L296.0 663.5 L295.0 662.3 L294.0 658.9 L293.0 656.9 L292.0 654.4 L291.0 652.0 L290.0 650.4 L289.0 647.4 L288.0 644.7 L287.0 642.1 L286.0 640.7 L285.0 637.9 L284.0 634.8 L283.0 633.2 L282.0 631.3 L281.0 628.7 L280.0 626.4 L279.0 622.7 L278.0 620.3 L277.0 618.8 L276.0 616.1 L275.0 612.2 L274.0 610.2 L273.0 607.8 L272.0 604.8 L271.0 602.0 L270.0 600.0 L269.0 596.3 L268.0 594.5 L267.0 591.9 L266.0 588.4 L265.0 585.5 L264.0 583.0 L263.0 579.5 L262.0 578.1 L261.0 575.0 L260.0 571.9 L259.0 568.5 L258.0 566.3 L257.0 563.6 L256.0 561.3 L255.0 557.5 L254.0 555.8 L253.0 552.2 L252.0 550.2 L251.0 546.2 L250.0 543.4 L249.0 541.2 L248.0 538.2 L247.0 536.1 L246.0 532.6 L245.0 529.5 L244.0 527.2 L243.0 524.3 L242.0 521.2 L241.0 519.3 L240.0 516.6 L239.0 513.3 L238.0 511.4 L237.0 507.4 L236.0 504.7 L235.0 501.9 L234.0 498.8 L233.0 496.7 L232.0 494.3 L231.0 490.3 L230.0 488.7 L229.0 485.8 L228.0 483.4 L227.0 480.0 L226.0 476.7 L225.0 475.1 L224.0 472.8 L223.0 470.0 L222.0 467.4 L221.0 464.4 L220.0 462.3 L219.0 459.4 L218.0 457.3 L217.0 454.5 L216.0 451.3 L215.0 449.1 L214.0 447.5 L213.0 444.7 L212.0 442.1 L211.0 439.2 L210.0 436.5 L209.0 434.7 L208.0 432.1 L207.0 430.1 L206.0 427.8 L205.0 425.3 L204.0 422.9 L203.0 421.6 L202.0 418.7 L201.0 417.1 L200.0 414.0 L199.0 411.9 L198.0 409.3 L197.0 407.8 L196.0 406.0 L195.0 402.8 L194.0 401.6 L193.0 398.6 L192.0 396.9 L191.0 395.4 L190.0 393.7 L189.0 392.0 L188.0 389.4 L187.0 388.0 L186.0 385.6 L185.0 383.3 L184.0 382.1 L183.0 380.5 L182.0 377.9 L181.0 376.2 L180.0 374.8 L179.0 373.3 L178.0 371.6 L177.0 369.8 L176.0 368.0 L175.0 366.4 L174.0 364.5 L173.0 364.1 L172.0 361.6 L171.0 361.1 L170.0 359.7 L169.0 358.3 L168.0 357.2 L167.0 355.1 L166.0 353.2 L165.0 353.1 L164.0 352.3 L163.0 350.1 L162.0 350.1 L161.0 347.9 L160.0 348.1 L159.0 346.4 L158.0 346.8 L157.0 346.0 L156.0 344.6 L155.0 343.6 L154.0 343.1 L153.0 341.7 L152.0 341.6 L151.0 341.0 L150.0 340.6 L149.0 340.8 L148.0 339.7 L147.0 340.0 L146.0 339.7 L145.0 338.0 L144.0 338.6 L143.0 338.6 L142.0 337.3 L141.0 336.8 L140.0 337.2 L139.0 337.5 L138.0 336.6 L137.0 336.7 L136.0 336.3 L135.0 336.4 L134.0 336.2 L133.0 335.7 L132.0 335.6 L131.0 335.5 L130.0 335.9 L129.0 335.3 L128.0 335.5 L127.0 335.5 L126.0 335.6 L125.0 335.3 L124.0 336.2 L123.0 335.9 L122.0 337.1 L121.0 336.8 L120.0 336.4 L119.0 337.5 L118.0 337.0 L117.0 337.3 L116.0 337.6 L115.0 339.1 L114.0 338.6 L113.0 339.6 L112.0 340.0 L111.0 339.9 L110.0 340.9 L109.0 341.3 L108.0 342.1 L107.0 342.2 L106.0 343.5 L105.0 343.0 L104.0 343.7 L103.0 344.7 L102.0 346.4 L101.0 346.3 L100.0 347.5 L99.0 347.7 L98.0 348.2 L97.0 350.0 L96.0 351.4 L95.0 352.7 L94.0 354.1 L93.0 354.1 L92.0 356.3 L91.0 357.5 L90.0 358.2 L89.0 360.1 L88.0 361.9 L87.0 361.9 L86.0 363.7 L85.0 366.6 L84.0 367.1 L83.0 369.0 L82.0 370.5 L81.0 372.8 L80.0 375.3 L79.0 375.6 L78.0 377.6 L77.0 379.0 L76.0 381.9 L75.0 382.8 L74.0 384.2 L73.0 385.9 L72.0 387.9 L71.0 389.6 L70.0 392.4 L69.0 394.0 L68.0 396.6 L67.0 398.6 L66.0 399.5 L65.0 402.5 L64.0 404.7 L63.0 406.6 L62.0 408.5 L61.0 410.4 L60.0 413.0 L59.0 414.8 L58.0 416.9 L57.0 420.3 L56.0 421.9 L55.0 424.9 L54.0 427.2 L53.0 428.9 L52.0 431.9 L51.0 433.3 L50.0 436.5 L49.0 437.8 L48.0 440.8 L47.0 443.5 L46.0 445.4 L45.0 448.9 L44.0 450.9 L43.0 453.3 L42.0 456.2 L41.0 457.9 L40.0 460.7 L39.0 462.7 L38.0 465.7 L37.0 468.5 L36.0 470.8 L35.0 473.9 L34.0 475.5 L33.0 478.5 L32.0 482.1 L31.0 484.4 L30.0 487.3 L29.0 489.4 L28.0 492.6 L27.0 495.2 L26.0 497.6 L25.0 500.2 L24.0 503.4 L23.0 506.6 L22.0 509.8 L21.0 511.5 L20.0 514.5 L19.0 517.0 L18.0 520.3 L17.0 524.0 L16.0 525.6 L15.0 529.4 L14.0 531.0 L13.0 534.3 L12.0 537.2 L11.0 539.7 L10.0 541.9 L9.0 544.8Z" fill="#e4e400" stroke="#e4e400" stroke-width="1.7" stroke-linejoin="round"/><path d="M9.0 534.7 L10.0 532.5 L11.0 529.5 L12.0 526.0 L13.0 523.3 L14.0 520.5 L15.0 518.3 L16.0 515.1 L17.0 513.1 L18.0 510.2 L19.0 508.0 L20.0 505.0 L21.0 501.1 L22.0 498.6 L23.0 495.5 L24.0 493.5 L25.0 490.5 L26.0 487.0 L27.0 485.2 L28.0 481.8 L29.0 479.3 L30.0 477.1 L31.0 473.4 L32.0 471.2 L33.0 468.8 L34.0 466.5 L35.0 462.9 L36.0 459.8 L37.0 457.0 L38.0 455.6 L39.0 453.2 L40.0 450.4 L41.0 447.7 L42.0 445.6 L43.0 442.5 L44.0 439.4 L45.0 437.9 L46.0 435.7 L47.0 432.6 L48.0 429.6 L49.0 427.4 L50.0 424.8 L51.0 422.5 L52.0 420.6 L53.0 417.7 L54.0 416.1 L55.0 414.2 L56.0 411.0 L57.0 408.8 L58.0 407.5 L59.0 404.0 L60.0 401.9 L61.0 400.2 L62.0 397.1 L63.0 395.5 L64.0 394.3 L65.0 391.5 L66.0 389.6 L67.0 387.9 L68.0 385.8 L69.0 383.0 L70.0 380.6 L71.0 378.6 L72.0 376.9 L73.0 375.2 L74.0 372.9 L75.0 371.2 L76.0 369.3 L77.0 368.5 L78.0 366.2 L79.0 364.6 L80.0 363.7 L81.0 361.4 L82.0 359.0 L83.0 357.7 L84.0 356.7 L85.0 353.6 L86.0 352.7 L87.0 351.1 L88.0 349.6 L89.0 348.7 L90.0 346.3 L91.0 344.8 L92.0 344.0 L93.0 342.4 L94.0 341.9 L95.0 340.8 L96.0 339.6 L97.0 337.5 L98.0 336.7 L99.0 335.2 L100.0 334.7 L101.0 334.9 L102.0 334.1 L103.0 333.4 L104.0 331.4 L105.0 330.7 L106.0 330.7 L107.0 330.3 L108.0 329.4 L109.0 327.9 L110.0 328.6 L111.0 327.9 L112.0 326.5 L113.0 326.3 L114.0 326.9 L115.0 325.7 L116.0 325.8 L117.0 324.6 L118.0 325.3 L119.0 325.3 L120.0 324.3 L121.0 324.2 L122.0 323.6 L123.0 323.0 L124.0 322.9 L125.0 323.0 L126.0 322.7 L127.0 323.4 L128.0 322.7 L129.0 321.9 L130.0 321.8 L131.0 323.0 L132.0 322.8 L133.0 322.2 L134.0 322.6 L135.0 323.3 L136.0 323.3 L137.0 323.6 L138.0 323.9 L139.0 324.4 L140.0 324.0 L141.0 325.2 L142.0 324.3 L143.0 325.8 L144.0 325.1 L145.0 326.2 L146.0 327.0 L147.0 326.3 L148.0 327.1 L149.0 328.5 L150.0 327.7 L151.0 328.9 L152.0 329.0 L153.0 330.5 L154.0 330.9 L155.0 330.7 L156.0 332.5 L157.0 332.3 L158.0 334.3 L159.0 334.0 L160.0 334.7 L161.0 336.1 L162.0 337.3 L163.0 339.0 L164.0 339.1 L165.0 340.9 L166.0 341.4 L167.0 343.6 L168.0 344.0 L169.0 346.2 L170.0 346.7 L171.0 348.1 L172.0 350.2 L173.0 351.9 L174.0 353.1 L175.0 355.3 L176.0 356.4 L177.0 358.1 L178.0 360.2 L179.0 362.7 L180.0 364.0 L181.0 365.5 L182.0 367.1 L183.0 369.6 L184.0 370.5 L185.0 373.5 L186.0 375.1 L187.0 376.4 L188.0 378.1 L189.0 380.5 L190.0 382.0 L191.0 384.5 L192.0 386.1 L193.0 387.6 L194.0 389.7 L195.0 392.1 L196.0 394.0 L197.0 397.4 L198.0 398.6 L199.0 400.9 L200.0 402.9 L201.0 405.3 L202.0 408.7 L203.0 409.8 L204.0 412.2 L205.0 414.1 L206.0 417.2 L207.0 419.1 L208.0 421.1 L209.0 423.7 L210.0 426.0 L211.0 428.8 L212.0 431.7 L213.0 434.4 L214.0 436.8 L215.0 438.7 L216.0 442.1 L217.0 444.2 L218.0 445.6 L219.0 449.4 L220.0 451.7 L221.0 453.3 L222.0 456.5 L223.0 459.6 L224.0 461.9 L225.0 464.7 L226.0 466.6 L227.0 469.2 L228.0 471.8 L229.0 475.3 L230.0 478.2 L231.0 480.7 L232.0 484.0 L233.0 486.3 L234.0 489.3 L235.0 492.2 L236.0 494.0 L237.0 497.8 L238.0 500.6 L239.0 503.1 L240.0 505.8 L241.0 509.1 L242.0 511.7 L243.0 513.7 L244.0 517.5 L245.0 520.0 L246.0 521.9 L247.0 525.6 L248.0 528.4 L249.0 530.9 L250.0 533.5 L251.0 537.0 L252.0 539.9 L253.0 541.1 L254.0 545.2 L255.0 547.4 L256.0 549.8 L257.0 552.6 L258.0 555.3 L259.0 559.4 L260.0 562.0 L261.0 564.9 L262.0 566.6 L263.0 569.8 L264.0 571.9 L265.0 575.4 L266.0 577.6 L267.0 580.7 L268.0 582.9 L269.0 587.0 L270.0 589.9 L271.0 592.5 L272.0 594.4 L273.0 598.1 L274.0 599.7 L275.0 602.2 L276.0 604.5 L277.0 607.4 L278.0 609.8 L279.0 612.8 L280.0 615.0 L281.0 618.3 L282.0 620.4 L283.0 623.3 L284.0 625.4 L285.0 627.9 L286.0 630.3 L287.0 632.0 L288.0 635.4 L289.0 637.0 L290.0 639.1 L291.0 642.6 L292.0 644.4 L293.0 646.6 L294.0 648.2 L295.0 650.6 L296.0 653.3 L297.0 656.2 L298.0 657.7 L299.0 659.5 L300.0 661.9 L301.0 663.9 L302.0 666.5 L303.0 668.9 L304.0 670.4 L305.0 672.4 L306.0 673.9 L307.0 677.4 L308.0 678.6 L309.0 681.1 L310.0 682.0 L311.0 684.1 L312.0 686.8 L313.0 688.4 L314.0 688.8 L315.0 691.9 L316.0 693.1 L317.0 694.5 L318.0 696.9 L319.0 698.8 L320.0 699.1 L321.0 701.5 L322.0 703.9 L323.0 705.1 L324.0 706.5 L325.0 707.5 L326.0 709.3 L327.0 711.3 L328.0 711.8 L329.0 714.0 L330.0 714.4 L331.0 716.4 L332.0 717.4 L333.0 718.9 L334.0 719.5 L335.0 721.6 L336.0 722.5 L337.0 722.4 L338.0 724.5 L339.0 724.2 L340.0 725.3 L341.0 725.9 L342.0 727.0 L343.0 727.0 L344.0 727.9 L345.0 729.0 L346.0 729.8 L347.0 729.9 L348.0 731.2 L349.0 731.5 L350.0 731.0 L351.0 731.5 L352.0 732.2 L353.0 732.1 L354.0 733.1 L355.0 732.6 L356.0 734.2 L357.0 733.5 L358.0 734.4 L359.0 734.0 L360.0 734.9 L361.0 734.5 L362.0 734.4 L363.0 734.9 L364.0 734.8 L365.0 735.9 L366.0 735.3 L367.0 735.4 L368.0 736.1 L369.0 734.9 L370.0 735.9 L371.0 735.0 L372.0 734.9 L373.0 734.7 L374.0 735.5 L375.0 733.9 L376.0 735.2 L377.0 733.8 L378.0 734.6 L379.0 734.0 L380.0 733.5 L381.0 732.8 L382.0 732.1 L383.0 732.8 L384.0 731.4 L385.0 731.8 L386.0 732.1 L387.0 731.6 L388.0 729.6 L389.0 729.8 L390.0 729.1 L391.0 728.4 L392.0 728.2 L393.0 727.8 L394.0 725.9 L395.0 725.5 L396.0 724.9 L397.0 723.8 L398.0 723.1 L399.0 723.2 L400.0 721.3 L401.0 721.4 L402.0 719.1 L403.0 718.6 L404.0 716.5 L405.0 716.5 L406.0 715.3 L407.0 713.0 L408.0 711.5 L409.0 710.8 L410.0 709.1 L411.0 707.7 L412.0 706.6 L413.0 703.8 L414.0 702.8 L415.0 700.7 L416.0 698.8 L417.0 697.7 L418.0 695.4 L419.0 693.9 L420.0 692.0 L421.0 690.3 L422.0 689.1 L423.0 686.6 L424.0 685.6 L425.0 683.0 L426.0 682.1 L427.0 679.6 L428.0 678.7 L429.0 676.2 L430.0 673.9 L431.0 672.8 L432.0 669.5 L433.0 667.4 L434.0 666.4 L435.0 664.2 L436.0 662.1 L437.0 658.8 L438.0 657.2 L439.0 655.5 L440.0 652.8 L441.0 650.4 L442.0 647.7 L443.0 646.4 L444.0 643.4 L445.0 641.9 L446.0 638.2 L447.0 637.1 L448.0 633.3 L449.0 631.4 L450.0 629.4 L451.0 626.2 L452.0 623.9 L453.0 622.4 L454.0 618.9 L455.0 616.8 L456.0 614.3 L457.0 611.6 L458.0 610.1 L459.0 607.0 L460.0 603.6 L461.0 601.1 L462.0 599.2 L463.0 596.2 L464.0 593.9 L465.0 591.3 L466.0 588.3 L467.0 585.8 L468.0 582.5 L469.0 580.6 L470.0 576.9 L471.0 574.0 L472.0 571.7 L473.0 568.9 L474.0 565.5 L475.0 562.8 L476.0 561.1 L477.0 557.1 L478.0 554.8 L479.0 551.6 L480.0 550.2 L481.0 547.1 L482.0 544.6 L483.0 541.8 L484.0 537.7 L485.0 536.2 L486.0 532.5 L487.0 529.5 L488.0 526.9 L489.0 524.0 L490.0 522.5 L491.0 518.6 L492.0 515.9 L493.0 512.9 L494.0 511.3 L495.0 508.5 L496.0 505.5 L497.0 502.3 L498.0 499.2 L499.0 496.7 L500.0 494.4 L501.0 491.8 L502.0 488.0 L503.0 485.1 L504.0 482.8 L505.0 480.3 L506.0 476.6 L507.0 473.7 L508.0 471.3 L509.0 469.7 L510.0 466.5 L511.0 462.8 L512.0 460.4 L513.0 458.2 L514.0 456.3 L515.0 452.7 L516.0 449.8 L517.0 447.8 L518.0 445.3 L519.0 443.2 L520.0 440.1 L521.0 438.1 L522.0 436.4 L523.0 432.7 L524.0 431.0 L525.0 428.8 L526.0 425.6 L527.0 423.8 L528.0 421.0 L529.0 418.7 L530.0 416.9 L531.0 414.8 L532.0 411.9 L533.0 409.1 L534.0 407.7 L535.0 405.1 L536.0 402.2 L537.0 400.7 L538.0 398.5 L539.0 395.6 L540.0 393.7 L541.0 392.5 L542.0 390.1 L543.0 388.2 L544.0 385.6 L545.0 383.5 L546.0 381.0 L547.0 378.9 L548.0 378.1 L549.0 376.4 L550.0 373.7 L551.0 372.1 L552.0 370.5 L553.0 368.9 L554.0 366.5 L555.0 364.4 L556.0 363.1 L557.0 362.5 L558.0 359.7 L559.0 358.0 L560.0 357.2 L561.0 355.0 L562.0 353.7 L563.0 351.9 L564.0 350.4 L565.0 348.7 L566.0 346.7 L567.0 345.8 L568.0 344.9 L569.0 342.2 L570.0 342.4 L571.0 339.9 L572.0 338.6 L573.0 338.4 L574.0 337.5 L575.0 336.3 L576.0 335.7 L577.0 335.0 L578.0 334.2 L579.0 333.5 L580.0 331.6 L581.0 330.6 L582.0 331.1 L583.0 330.4 L584.0 328.9 L585.0 328.0 L586.0 327.6 L587.0 327.4 L588.0 326.7 L589.0 327.0 L590.0 325.9 L591.0 325.9 L592.0 325.7 L593.0 325.1 L594.0 324.7 L595.0 324.2 L596.0 323.8 L597.0 324.5 L598.0 323.8 L599.0 323.5 L600.0 322.9 L601.0 322.7 L602.0 322.3 L603.0 323.1 L604.0 322.5 L605.0 323.3 L606.0 321.8 L607.0 323.3 L608.0 323.3 L609.0 322.9 L610.0 323.2 L611.0 322.6 L612.0 323.7 L613.0 324.0 L614.0 324.4 L615.0 323.7 L616.0 323.8 L617.0 324.4 L618.0 324.4 L619.0 324.6 L620.0 326.4 L621.0 326.3 L622.0 325.8 L623.0 326.0 L624.0 326.9 L625.0 327.5 L626.0 328.5 L627.0 328.9 L628.0 328.8 L629.0 329.8 L630.0 331.3 L631.0 331.5 L632.0 332.0 L633.0 333.2 L634.0 334.1 L635.0 335.0 L636.0 335.5 L637.0 335.9 L638.0 336.6 L639.0 338.7 L640.0 339.6 L641.0 340.5 L642.0 342.0 L643.0 343.4 L644.0 343.9 L645.0 346.2 L646.0 347.1 L647.0 347.8 L648.0 349.4 L649.0 352.2 L650.0 352.5 L651.0 355.0 L652.0 356.7 L653.0 359.0 L654.0 360.1 L655.0 361.5 L656.0 363.5 L657.0 364.8 L658.0 366.9 L659.0 368.5 L660.0 369.8 L661.0 372.3 L662.0 374.0 L663.0 375.6 L664.0 378.6 L665.0 379.4 L666.0 381.6 L667.0 383.2 L668.0 386.3 L669.0 387.8 L670.0 389.5 L671.0 391.8 L672.0 394.7 L673.0 396.3 L674.0 398.6 L675.0 401.3 L676.0 403.5 L677.0 405.0 L678.0 407.4 L679.0 409.0 L680.0 411.7 L681.0 414.1 L682.0 416.6 L683.0 419.3 L684.0 422.1 L685.0 423.1 L686.0 426.9 L687.0 428.1 L688.0 431.3 L689.0 432.7 L690.0 436.2 L691.0 437.7 L692.0 440.4 L693.0 443.1 L694.0 446.4 L695.0 447.8 L696.0 451.0 L697.0 453.6 L698.0 456.4 L699.0 458.1 L700.0 461.2 L701.0 463.8 L702.0 466.6 L703.0 468.8 L704.0 471.9 L705.0 474.6 L706.0 477.4 L707.0 480.2 L708.0 482.1 L709.0 485.7 L710.0 488.8 L711.0 491.1 L712.0 494.8 L713.0 497.1 L714.0 498.9 L715.0 502.8 L716.0 505.0 L717.0 508.1 L718.0 511.6 L719.0 514.1 L720.0 516.3 L721.0 519.1 L722.0 522.1 L723.0 524.4 L724.0 527.4 L725.0 530.8 L726.0 533.6 L727.0 535.8 L728.0 538.5 L729.0 541.6 L730.0 543.8 L731.0 546.6 L732.0 549.9 L733.0 551.7 L734.0 555.9 L735.0 557.4 L736.0 560.1 L737.0 564.4 L738.0 566.8 L739.0 570.0 L740.0 572.3 L741.0 575.2 L742.0 578.0 L743.0 580.7 L744.0 583.6 L745.0 585.4 L746.0 589.1 L747.0 591.6 L748.0 594.6 L749.0 596.8 L750.0 599.1 L751.0 601.7 L752.0 604.8 L753.0 606.5 L754.0 609.0 L755.0 612.8 L756.0 615.4 L757.0 616.4 L758.0 619.8 L759.0 622.9 L760.0 624.4 L761.0 627.2 L762.0 628.9 L763.0 631.0 L764.0 633.6 L765.0 636.0 L766.0 638.4 L767.0 641.7 L768.0 644.1 L769.0 645.3 L770.0 648.6 L771.0 651.0 L772.0 653.1 L773.0 655.0 L774.0 656.9 L775.0 659.9 L776.0 660.9 L777.0 664.4 L778.0 665.7 L779.0 667.6 L780.0 670.1 L781.0 672.0 L782.0 674.1 L783.0 675.7 L784.0 678.0 L785.0 680.3 L786.0 681.8 L787.0 684.6 L788.0 685.8 L789.0 686.7 L790.0 689.5 L791.0 690.7 L792.0 693.4 L793.0 694.5 L794.0 695.9 L795.0 697.5 L796.0 699.6 L797.0 701.6 L798.0 702.0 L799.0 704.4 L800.0 706.8 L801.0 707.2 L802.0 709.9 L803.0 710.9 L804.0 712.7 L805.0 713.8 L806.0 714.6 L807.0 716.2 L808.0 716.8 L809.0 719.2 L810.0 719.8 L811.0 720.6 L812.0 721.3 L813.0 723.1 L814.0 722.9 L815.0 724.8 L816.0 725.3 L817.0 726.5 L818.0 726.6 L819.0 726.8 L820.0 727.5 L821.0 728.4 L822.0 729.1 L823.0 729.3 L824.0 731.2 L825.0 730.2 L826.0 731.8 L827.0 731.9 L828.0 732.2 L829.0 731.7 L830.0 733.4 L831.0 733.2 L832.0 733.3 L833.0 734.2 L834.0 733.2 L835.0 733.5 L836.0 735.0 L837.0 735.3 L838.0 734.7 L839.0 734.7 L840.0 736.0 L841.0 735.3 L842.0 736.3 L843.0 735.3 L844.0 736.1 L845.0 735.9 L846.0 734.8 L847.0 736.1 L848.0 735.4 L849.0 734.7 L850.0 734.4 L851.0 733.9 L852.0 733.7 L853.0 734.9 L854.0 733.4 L855.0 734.2 L856.0 733.1 L857.0 733.3 L858.0 732.1 L859.0 732.6 L860.0 732.8 L861.0 731.7 L862.0 731.0 L863.0 730.7 L864.0 730.4 L865.0 730.5 L866.0 730.1 L867.0 729.3 L868.0 727.6 L869.0 727.0 L870.0 726.2 L871.0 726.7 L872.0 725.9 L873.0 724.1 L874.0 722.9 L875.0 722.4 L876.0 721.0 L877.0 720.5 L878.0 718.9 L879.0 718.6 L880.0 717.3 L881.0 715.7 L882.0 714.3 L883.0 714.1 L884.0 711.8 L885.0 710.3 L886.0 709.5 L887.0 707.6 L888.0 706.8 L889.0 704.9 L890.0 702.3 L891.0 701.1 L892.0 698.9 L893.0 697.6 L894.0 696.8 L895.0 693.7 L896.0 692.8 L897.0 690.7 L898.0 689.9 L899.0 687.1 L900.0 686.0 L901.0 684.1 L902.0 682.2 L903.0 680.7 L904.0 679.0 L905.0 676.8 L906.0 674.9 L907.0 673.0 L908.0 670.4 L909.0 668.3 L910.0 665.4 L911.0 663.6 L912.0 661.3 L913.0 660.2 L914.0 656.9 L915.0 654.8 L916.0 653.2 L917.0 650.9 L918.0 647.9 L919.0 646.6 L920.0 643.3 L921.0 641.6 L922.0 638.6 L923.0 636.3 L924.0 635.1 L925.0 632.2 L926.0 629.1 L927.0 627.9 L928.0 624.7 L929.0 622.4 L930.0 620.6 L931.0 617.2 L932.0 614.7 L933.0 613.3 L934.0 610.7 L935.0 608.0 L936.0 604.9 L937.0 603.0 L938.0 599.5 L939.0 596.8 L940.0 593.6 L941.0 591.6 L942.0 588.3 L943.0 586.6 L944.0 583.7 L945.0 581.3 L946.0 577.2 L947.0 574.8 L948.0 572.0 L949.0 570.3 L950.0 566.4 L951.0 563.9 L952.0 560.8 L953.0 558.6 L954.0 555.7 L955.0 552.8 L956.0 549.9 L957.0 546.6 L958.0 543.8 L959.0 541.4 L960.0 538.4 L961.0 536.1 L962.0 533.5 L963.0 530.8 L964.0 528.2 L965.0 525.2 L966.0 522.3 L967.0 519.2 L968.0 516.8 L969.0 514.1 L970.0 511.0 L971.0 508.0 L972.0 505.6 L973.0 503.6 L974.0 500.4 L975.0 496.5 L976.0 494.3 L977.0 491.4 L978.0 489.2 L979.0 485.5 L980.0 483.6 L981.0 480.2 L982.0 478.0 L983.0 475.5 L984.0 472.2 L985.0 469.9 L986.0 466.8 L987.0 464.4 L988.0 460.9 L989.0 458.0 L990.0 456.4 L991.0 454.4 L992.0 450.9 L993.0 449.1 L994.0 445.8 L995.0 443.5 L996.0 440.8 L997.0 438.7 L998.0 435.9 L999.0 434.3 L1000.0 431.2 L1001.0 428.6 L1002.0 426.6 L1003.0 423.4 L1004.0 421.4 L1005.0 419.9 L1006.0 416.5 L1007.0 415.3 L1008.0 411.6 L1009.0 410.0 L1010.0 408.1 L1011.0 406.2 L1012.0 403.2 L1013.0 400.8 L1014.0 398.9 L1015.0 397.3 L1016.0 394.5 L1017.0 392.1 L1018.0 390.3 L1019.0 388.7 L1020.0 386.0 L1021.0 384.2 L1022.0 381.8 L1023.0 380.5 L1024.0 377.8 L1025.0 376.8 L1026.0 373.8 L1027.0 372.9 L1028.0 371.6 L1029.0 368.9 L1030.0 366.9 L1031.0 365.6 L1032.0 363.3 L1033.0 362.3 L1034.0 361.2 L1035.0 357.9 L1036.0 357.3 L1037.0 355.4 L1038.0 353.0 L1039.0 351.8 L1040.0 349.6 L1041.0 348.7 L1042.0 347.5 L1043.0 346.7 L1044.0 344.4 L1045.0 342.7 L1046.0 341.3 L1047.0 340.2 L1048.0 340.0 L1049.0 338.9 L1050.0 336.5 L1051.0 336.0 L1052.0 335.2 L1053.0 334.2 L1054.0 334.4 L1055.0 332.7 L1056.0 332.0 L1057.0 332.1 L1058.0 331.5 L1059.0 330.2 L1060.0 328.7 L1061.0 329.4 L1062.0 328.8 L1063.0 327.4 L1064.0 327.9 L1065.0 327.4 L1066.0 326.1 L1067.0 325.5 L1068.0 326.2 L1069.0 325.8 L1070.0 324.5 L1071.0 325.4 L1072.0 323.8 L1073.0 323.9 L1074.0 323.6 L1075.0 323.2 L1076.0 323.1 L1077.0 322.5 L1078.0 322.4 L1079.0 323.3 L1080.0 323.1 L1081.0 322.2 L1082.0 322.2 L1083.0 322.2 L1084.0 322.5 L1085.0 322.3 L1086.0 323.0 L1087.0 322.9 L1088.0 323.0 L1089.0 324.1 L1090.0 323.1 L1091.0 324.0 L1092.0 323.8 L1093.0 324.2 L1094.0 325.3 L1095.0 324.6 L1096.0 325.8 L1097.0 325.7 L1098.0 326.5 L1099.0 327.1 L1100.0 327.2 L1101.0 326.9 L1102.0 328.4 L1103.0 327.9 L1104.0 328.7 L1105.0 329.5 L1106.0 329.8 L1107.0 331.5 L1108.0 332.5 L1109.0 333.1 L1110.0 333.4 L1111.0 334.0 L1112.0 335.7 L1113.0 335.7 L1114.0 337.6 L1115.0 337.3 L1116.0 338.6 L1117.0 339.9 L1118.0 342.0 L1119.0 343.1 L1120.0 344.5 L1121.0 345.1 L1122.0 347.5 L1123.0 348.9 L1124.0 350.0 L1125.0 351.4 L1126.0 352.1 L1127.0 354.4 L1128.0 357.0 L1129.0 358.5 L1130.0 360.2 L1131.0 361.2 L1132.0 364.1 L1133.0 365.1 L1134.0 366.1 L1135.0 368.4 L1136.0 370.0 L1137.0 372.4 L1138.0 373.4 L1139.0 375.7 L1140.0 378.2 L1141.0 379.1 L1142.0 380.8 L1143.0 383.1 L1144.0 385.5 L1145.0 386.9 L1146.0 389.7 L1147.0 392.1 L1148.0 393.2 L1149.0 395.7 L1150.0 397.4 L1151.0 399.8 L1152.0 402.4 L1153.0 404.5 L1154.0 406.8 L1155.0 408.6 L1156.0 412.4 L1157.0 413.3 L1158.0 417.0 L1159.0 418.0 L1160.0 420.9 L1161.0 423.4 L1162.0 426.4 L1163.0 428.4 L1164.0 430.8 L1165.0 432.6 L1166.0 434.7 L1167.0 438.4 L1168.0 439.9 L1169.0 443.4 L1170.0 444.8 L1171.0 448.3 L1172.0 450.0 L1173.0 453.4 L1174.0 455.2 L1175.0 457.8 L1176.0 460.2 L1177.0 463.4 L1178.0 466.5 L1179.0 469.3 L1180.0 471.4 L1181.0 473.6 L1182.0 477.0 L1183.0 479.9 L1184.0 482.3 L1185.0 484.5 L1186.0 487.8 L1187.0 491.1 L1188.0 494.1 L1189.0 496.8 L1190.0 498.8 L1191.0 502.0 L1192.0 504.5 L1193.0 507.8 L1194.0 511.0 L1195.0 512.8 L1196.0 516.1 L1197.0 518.2 L1198.0 521.2 L1199.0 525.0 L1200.0 527.6 L1201.0 530.5 L1202.0 533.0 L1203.0 535.5 L1204.0 537.7 L1205.0 541.5 L1206.0 543.8 L1207.0 546.1 L1208.0 548.4 L1209.0 552.2 L1210.0 554.1 L1211.0 557.3 L1212.0 560.2 L1213.0 563.2 L1214.0 565.3 L1215.0 569.4 L1216.0 570.9 L1217.0 573.9 L1218.0 577.2 L1219.0 579.9 L1220.0 582.2 L1221.0 584.8 L1222.0 588.3 L1223.0 590.7 L1224.0 593.4 L1225.0 596.3 L1226.0 599.3 L1227.0 602.3 L1228.0 603.5 L1229.0 606.5 L1230.0 610.0 L1231.0 612.2 L1232.0 614.7 L1233.0 616.3 L1234.0 618.4 L1235.0 621.2 L1236.0 624.4 L1237.0 627.1 L1238.0 629.5 L1239.0 632.0 L1240.0 633.2 L1241.0 635.9 L1242.0 638.8 L1243.0 640.3 L1244.0 643.6 L1245.0 645.9 L1246.0 648.0 L1247.0 650.2 L1248.0 651.8 L1249.0 654.9 L1250.0 656.4 L1251.0 659.6 L1252.0 660.6 L1253.0 662.8 L1254.0 665.1 L1255.0 667.3 L1256.0 669.6 L1257.0 672.4 L1258.0 674.1 L1259.0 676.6 L1260.0 677.6 L1261.0 679.8 L1262.0 682.1 L1263.0 683.0 L1264.0 685.6 L1265.0 687.1 L1266.0 689.4 L1267.0 691.2 L1268.0 691.6 L1269.0 693.5 L1270.0 695.8 L1271.0 696.8 L1272.0 699.0 L1273.0 700.6 L1274.0 701.7 L1275.0 703.9 L1276.0 705.9 L1277.0 706.9 L1278.0 709.4 L1279.0 710.2 L1280.0 711.5 L1281.0 713.3 L1282.0 715.3 L1283.0 715.9 L1284.0 717.7 L1285.0 718.5 L1286.0 719.2 L1287.0 721.0 L1288.0 722.2 L1289.0 722.2 L1290.0 723.8 L1291.0 724.4 L1292.0 725.1 L1293.0 725.0 L1294.0 726.2 L1295.0 727.1 L1296.0 727.4 L1297.0 728.3 L1298.0 728.3 L1299.0 729.6 L1300.0 730.4 L1301.0 730.2 L1302.0 730.9 L1303.0 732.0 L1304.0 732.8 L1305.0 733.1 L1306.0 732.0 L1307.0 733.1 L1308.0 733.1 L1309.0 734.2 L1310.0 734.5 L1311.0 733.4 L1312.0 734.7 L1313.0 734.2 L1314.0 735.1 L1315.0 735.8 L1316.0 735.8 L1317.0 735.4 L1318.0 736.1 L1319.0 735.9 L1320.0 735.9 L1321.0 734.8 L1322.0 735.5 L1323.0 735.4 L1324.0 735.4 L1325.0 735.5 L1326.0 734.4 L1327.0 734.6 L1328.0 734.6 L1329.0 734.0 L1330.0 734.4 L1331.0 733.4 L1332.0 733.4 L1333.0 733.9 L1334.0 733.1 L1335.0 732.3 L1336.0 731.8 L1337.0 731.2 L1338.0 730.9 L1339.0 731.0 L1340.0 730.0 L1341.0 729.8 L1342.0 728.9 L1343.0 729.5 L1344.0 727.4 L1345.0 727.1 L1346.0 726.8 L1347.0 725.9 L1348.0 725.3 L1349.0 725.2 L1350.0 724.2 L1351.0 723.2 L1352.0 722.6 L1353.0 721.1 L1354.0 720.6 L1355.0 719.0 L1356.0 717.3 L1357.0 716.3 L1358.0 714.7 L1359.0 714.1 L1360.0 713.4 L1361.0 711.3 L1362.0 710.4 L1363.0 708.0 L1364.0 707.3 L1365.0 704.8 L1366.0 704.0 L1367.0 701.9 L1368.0 699.8 L1369.0 698.8 L1370.0 697.1 L1371.0 695.3 L1372.0 692.6 L1373.0 692.2 L1374.0 689.0 L1375.0 688.7 L1376.0 686.9 L1377.0 684.8 L1378.0 682.0 L1379.0 680.1 L1380.0 679.5 L1381.0 677.4 L1382.0 674.1 L1383.0 673.3 L1384.0 670.0 L1385.0 668.3 L1386.0 666.0 L1387.0 665.3 L1388.0 663.0 L1389.0 660.2 L1390.0 657.9 L1391.0 656.1 L1392.0 653.9 L1393.0 650.6 L1394.0 649.0 L1395.0 646.5 L1396.0 645.1 L1397.0 642.4 L1398.0 639.2 L1399.0 636.6 L1400.0 635.0 L1401.0 632.6 L1402.0 629.4 L1403.0 628.0 L1404.0 625.4 L1405.0 623.6 L1406.0 620.8 L1407.0 617.7 L1408.0 616.2 L1409.0 612.8 L1410.0 609.9 L1411.0 607.2 L1412.0 606.1 L1413.0 603.0 L1414.0 599.8 L1415.0 596.9 L1416.0 595.3 L1417.0 591.5 L1418.0 589.2 L1419.0 586.8 L1420.0 584.8 L1421.0 581.7 L1422.0 578.5 L1423.0 576.5 L1424.0 573.1 L1425.0 570.0 L1426.0 567.2 L1427.0 564.7 L1428.0 561.5 L1429.0 559.0 L1430.0 556.3 L1431.0 554.0 L1432.0 550.9 L1433.0 547.7 L1434.0 544.4 L1435.0 542.2 L1436.0 539.4 L1437.0 536.2 L1438.0 534.4 L1439.0 531.3 L1440.0 529.0 L1441.0 524.9 L1442.0 523.4 L1443.0 519.5 L1444.0 516.9 L1445.0 514.3 L1446.0 511.8 L1447.0 508.3 L1448.0 507.0 L1449.0 503.3 L1450.0 501.0 L1451.0 497.2 L1452.0 494.7 L1453.0 491.7 L1454.0 489.1 L1455.0 485.8 L1456.0 483.9 L1457.0 480.5 L1458.0 477.9 L1459.0 475.1 L1460.0 472.1 L1461.0 470.6 L1462.0 467.2 L1463.0 464.8 L1464.0 461.3 L1465.0 459.1 L1466.0 456.4 L1467.0 454.4 L1468.0 451.3 L1469.0 449.2 L1470.0 446.0 L1471.0 444.4 L1472.0 441.9 L1473.0 438.4 L1474.0 436.5 L1475.0 434.2 L1476.0 432.2 L1477.0 429.5 L1478.0 426.9 L1479.0 424.4 L1480.0 422.8 L1481.0 419.8 L1482.0 417.9 L1483.0 415.5 L1484.0 412.0 L1485.0 410.5 L1486.0 408.6 L1487.0 405.4 L1488.0 404.1 L1489.0 400.7 L1490.0 399.3 L1491.0 397.3 L1492.0 394.8 L1493.0 393.0 L1494.0 390.7 L1495.0 389.0 L1496.0 385.9 L1497.0 384.4 L1498.0 383.2 L1499.0 380.0 L1500.0 378.1 L1501.0 376.7 L1502.0 374.6 L1503.0 372.6 L1504.0 371.6 L1505.0 369.0 L1506.0 366.9 L1507.0 365.7 L1508.0 364.1 L1509.0 362.2 L1510.0 360.2 L1511.0 359.1 L1512.0 356.9 L1513.0 355.3 L1514.0 353.4 L1515.0 352.4 L1516.0 350.7 L1517.0 349.1 L1518.0 348.2 L1519.0 346.7 L1520.0 344.7 L1521.0 342.7 L1522.0 341.5 L1523.0 340.4 L1524.0 339.8 L1525.0 338.6 L1526.0 337.8 L1527.0 336.1 L1528.0 335.0 L1529.0 334.2 L1530.0 333.2 L1531.0 333.8 L1532.0 332.6 L1533.0 332.2 L1534.0 330.3 L1535.0 330.5 L1536.0 330.1 L1537.0 328.5 L1538.0 328.0 L1539.0 327.2 L1540.0 327.0 L1541.0 326.2 L1542.0 327.1 L1543.0 325.3 L1544.0 325.9 L1545.0 325.4 L1546.0 325.0 L1547.0 325.0 L1548.0 323.8 L1549.0 324.8 L1550.0 323.6 L1551.0 324.3 L1552.0 324.0 L1553.0 322.5 L1554.0 323.6 L1555.0 323.5 L1556.0 323.5 L1557.0 322.9 L1558.0 322.5 L1559.0 322.1 L1560.0 322.0 L1561.0 323.2 L1562.0 322.2 L1563.0 322.5 L1564.0 323.1 L1565.0 324.2 L1566.0 324.3 L1567.0 324.6 L1568.0 324.3 L1569.0 324.0 L1570.0 324.6 L1571.0 324.7 L1572.0 326.0 L1573.0 326.4 L1574.0 326.8 L1575.0 327.0 L1576.0 327.2 L1577.0 327.8 L1578.0 327.6 L1579.0 328.3 L1580.0 328.8 L1581.0 329.1 L1582.0 330.0 L1583.0 331.5 L1584.0 331.1 L1585.0 332.7 L1586.0 332.6 L1587.0 334.4 L1588.0 334.7 L1589.0 335.8 L1590.0 336.0 L1591.0 337.7 L1592.0 338.3 L1593.0 340.5 L1594.0 340.7 L1595.0 342.0 L1596.0 343.4 L1597.0 345.9 L1598.0 347.0 L1599.0 347.9 L1600.0 350.0 L1601.0 351.1 L1602.0 352.7 L1603.0 354.7 L1604.0 356.3 L1605.0 357.2 L1606.0 359.8 L1607.0 360.6 L1608.0 363.7 L1609.0 365.1 L1610.0 366.9 L1611.0 368.1 L1612.0 370.4 L1613.0 371.4 L1614.0 373.5 L1615.0 374.7 L1616.0 377.6 L1617.0 379.6 L1618.0 380.5 L1619.0 382.6 L1620.0 385.7 L1621.0 387.4 L1622.0 389.6 L1623.0 391.5 L1624.0 393.9 L1625.0 394.8 L1626.0 398.2 L1627.0 400.0 L1628.0 402.5 L1629.0 404.3 L1630.0 405.9 L1631.0 408.7 L1632.0 411.1 L1633.0 413.0 L1634.0 416.3 L1635.0 417.8 L1636.0 420.1 L1637.0 422.8 L1638.0 425.8 L1639.0 428.0 L1640.0 430.6 L1641.0 432.1 L1642.0 434.7 L1643.0 438.0 L1644.0 440.5 L1645.0 442.3 L1646.0 444.8 L1647.0 446.8 L1648.0 449.3 L1649.0 451.5 L1650.0 455.6 L1651.0 458.0 L1652.0 459.9 L1653.0 462.9 L1654.0 465.5 L1655.0 468.8 L1656.0 471.1 L1657.0 473.8 L1658.0 477.0 L1659.0 479.3 L1660.0 481.6 L1661.0 484.9 L1662.0 487.4 L1663.0 490.9 L1664.0 493.5 L1665.0 495.9 L1666.0 499.0 L1667.0 501.8 L1668.0 503.5 L1669.0 506.4 L1670.0 510.4 L1671.0 512.7 L1672.0 514.7 L1673.0 518.6 L1674.0 520.6 L1675.0 523.4 L1676.0 526.3 L1677.0 529.4 L1678.0 532.2 L1679.0 535.4 L1680.0 537.7 L1681.0 539.7 L1682.0 543.5 L1683.0 545.5 L1684.0 548.6 L1685.0 550.8 L1686.0 553.6 L1687.0 556.3 L1688.0 559.6 L1689.0 563.3 L1690.0 565.1 L1691.0 567.7 L1692.0 570.9 L1693.0 573.4 L1694.0 576.4 L1695.0 579.0 L1696.0 582.7 L1697.0 585.4 L1698.0 588.0 L1699.0 589.7 L1700.0 592.9 L1701.0 595.9 L1702.0 598.0 L1703.0 601.6 L1704.0 603.2 L1705.0 605.8 L1706.0 608.0 L1707.0 611.4 L1708.0 614.5 L1709.0 615.8 L1710.0 618.8 L1711.0 621.4 L1712.0 624.1 L1713.0 625.7 L1714.0 629.2 L1715.0 631.2 L1716.0 633.1 L1717.0 636.1 L1718.0 637.9 L1719.0 640.2 L1720.0 643.3 L1721.0 645.1 L1722.0 648.0 L1723.0 649.4 L1724.0 651.8 L1725.0 654.8 L1726.0 656.6 L1727.0 658.8 L1728.0 661.4 L1729.0 663.5 L1730.0 665.4 L1731.0 667.3 L1732.0 670.0 L1733.0 671.9 L1734.0 674.0 L1735.0 675.8 L1736.0 677.6 L1737.0 678.7 L1738.0 681.8 L1739.0 682.7 L1740.0 684.3 L1741.0 687.5 L1742.0 688.3 L1743.0 689.5 L1744.0 691.7 L1745.0 693.9 L1746.0 695.0 L1747.0 696.9 L1748.0 699.2 L1749.0 700.9 L1750.0 701.7 L1751.0 703.6 L1752.0 705.7 L1753.0 707.7 L1754.0 709.4 L1755.0 710.3 L1756.0 712.1 L1757.0 713.0 L1758.0 713.6 L1759.0 715.9 L1760.0 716.7 L1761.0 718.2 L1762.0 719.8 L1763.0 720.8 L1764.0 721.0 L1765.0 721.6 L1766.0 722.6 L1767.0 724.3 L1768.0 724.8 L1769.0 725.1 L1770.0 726.0 L1771.0 727.4 L1772.0 727.6 L1773.0 728.7 L1774.0 728.6 L1775.0 729.9 L1776.0 730.5 L1777.0 731.3 L1778.0 731.5 L1779.0 731.1 L1780.0 732.6 L1781.0 732.6 L1782.0 732.4 L1783.0 733.2 L1784.0 732.9 L1785.0 734.2 L1786.0 733.2 L1787.0 734.1 L1788.0 734.8 L1789.0 734.0 L1790.0 734.8 L1791.0 734.2 L1792.0 735.9 L1793.0 735.7 L1794.0 736.0 L1795.0 735.7 L1796.0 736.0 L1797.0 735.6 L1798.0 735.7 L1799.0 735.7 L1800.0 736.0 L1801.0 734.6 L1802.0 735.1 L1803.0 734.7 L1804.0 733.9 L1805.0 734.6 L1806.0 734.3 L1807.0 733.2 L1808.0 732.8 L1809.0 732.8 L1810.0 733.4 L1811.0 733.0 L1812.0 731.7 L1813.0 732.4 L1814.0 730.8 L1815.0 731.8 L1816.0 730.9 L1817.0 730.3 L1818.0 729.2 L1819.0 728.2 L1820.0 727.7 L1821.0 728.0 L1822.0 727.4 L1823.0 726.3 L1824.0 726.0 L1825.0 725.4 L1826.0 724.5 L1827.0 723.6 L1828.0 722.4 L1829.0 721.7 L1830.0 719.5 L1831.0 718.7 L1832.0 717.1 L1833.0 715.9 L1834.0 715.9 L1835.0 713.5 L1836.0 712.4 L1837.0 710.9 L1838.0 710.2 L1839.0 708.0 L1840.0 707.7 L1841.0 704.8 L1842.0 703.4 L1843.0 701.4 L1844.0 701.0 L1845.0 697.8 L1846.0 696.2 L1847.0 695.3 L1848.0 693.4 L1849.0 692.0 L1850.0 690.7 L1851.0 688.8 L1852.0 687.1 L1853.0 684.0 L1854.0 683.5 L1855.0 681.7 L1856.0 679.9 L1857.0 677.6 L1858.0 674.9 L1859.0 673.0 L1860.0 671.1 L1861.0 669.4 L1862.0 667.5 L1863.0 665.7 L1864.0 662.4 L1865.0 660.5 L1866.0 658.0 L1867.0 656.9 L1868.0 654.4 L1869.0 652.3 L1870.0 649.5 L1871.0 647.7 L1872.0 645.0 L1873.0 642.6 L1874.0 639.6 L1875.0 638.0 L1876.0 636.1 L1877.0 633.7 L1878.0 631.4 L1879.0 627.8 L1880.0 626.4 L1881.0 623.0 L1882.0 621.7 L1883.0 618.3 L1884.0 616.3 L1885.0 613.9 L1886.0 610.6 L1887.0 608.8 L1888.0 605.5 L1889.0 603.5 L1890.0 600.9 L1891.0 598.4 L1892.0 594.7 L1893.0 591.9 L1894.0 589.4 L1895.0 587.3 L1896.0 584.9 L1897.0 582.2 L1898.0 578.4 L1899.0 576.1 L1900.0 573.4 L1901.0 570.1 L1902.0 567.7 L1903.0 564.4 L1904.0 561.9 L1905.0 560.0 L1906.0 556.3 L1907.0 553.4 L1908.0 550.5 L1909.0 548.4 L1910.0 545.0 L1911.0 542.1 L1912.0 539.7 L1912.0 550.6 L1911.0 553.9 L1910.0 555.3 L1909.0 558.9 L1908.0 561.7 L1907.0 564.9 L1906.0 566.3 L1905.0 570.2 L1904.0 573.3 L1903.0 576.0 L1902.0 578.8 L1901.0 581.8 L1900.0 584.3 L1899.0 587.0 L1898.0 589.1 L1897.0 591.7 L1896.0 594.6 L1895.0 598.5 L1894.0 599.8 L1893.0 602.9 L1892.0 605.1 L1891.0 608.2 L1890.0 611.3 L1889.0 613.9 L1888.0 617.1 L1887.0 618.4 L1886.0 620.7 L1885.0 623.6 L1884.0 626.8 L1883.0 629.2 L1882.0 630.9 L1881.0 634.2 L1880.0 635.5 L1879.0 638.4 L1878.0 640.5 L1877.0 643.9 L1876.0 645.8 L1875.0 648.4 L1874.0 650.8 L1873.0 653.8 L1872.0 655.2 L1871.0 657.5 L1870.0 659.5 L1869.0 662.9 L1868.0 665.1 L1867.0 666.6 L1866.0 669.8 L1865.0 670.6 L1864.0 673.2 L1863.0 676.1 L1862.0 678.4 L1861.0 680.7 L1860.0 682.8 L1859.0 683.5 L1858.0 685.9 L1857.0 687.8 L1856.0 690.1 L1855.0 691.6 L1854.0 693.9 L1853.0 696.2 L1852.0 698.0 L1851.0 700.2 L1850.0 701.6 L1849.0 703.3 L1848.0 704.6 L1847.0 706.5 L1846.0 708.5 L1845.0 709.3 L1844.0 712.1 L1843.0 713.6 L1842.0 715.6 L1841.0 716.8 L1840.0 719.3 L1839.0 720.7 L1838.0 721.5 L1837.0 724.0 L1836.0 724.5 L1835.0 726.2 L1834.0 727.2 L1833.0 729.1 L1832.0 730.2 L1831.0 730.9 L1830.0 732.2 L1829.0 732.6 L1828.0 734.4 L1827.0 735.2 L1826.0 736.2 L1825.0 736.2 L1824.0 738.4 L1823.0 737.9 L1822.0 738.7 L1821.0 739.5 L1820.0 741.4 L1819.0 741.8 L1818.0 741.4 L1817.0 743.2 L1816.0 743.8 L1815.0 743.2 L1814.0 743.7 L1813.0 743.8 L1812.0 745.7 L1811.0 744.5 L1810.0 745.8 L1809.0 745.7 L1808.0 745.8 L1807.0 747.2 L1806.0 747.1 L1805.0 747.4 L1804.0 747.3 L1803.0 746.9 L1802.0 748.0 L1801.0 747.5 L1800.0 747.9 L1799.0 747.8 L1798.0 748.9 L1797.0 747.7 L1796.0 748.3 L1795.0 748.1 L1794.0 747.7 L1793.0 747.9 L1792.0 748.7 L1791.0 748.4 L1790.0 747.1 L1789.0 746.7 L1788.0 747.1 L1787.0 747.6 L1786.0 745.9 L1785.0 746.7 L1784.0 745.2 L1783.0 746.4 L1782.0 744.8 L1781.0 744.6 L1780.0 744.9 L1779.0 743.4 L1778.0 743.0 L1777.0 743.5 L1776.0 743.3 L1775.0 742.8 L1774.0 741.5 L1773.0 740.3 L1772.0 739.6 L1771.0 739.4 L1770.0 738.1 L1769.0 737.7 L1768.0 736.8 L1767.0 736.6 L1766.0 735.3 L1765.0 734.3 L1764.0 734.1 L1763.0 733.0 L1762.0 731.9 L1761.0 729.5 L1760.0 728.7 L1759.0 727.5 L1758.0 726.3 L1757.0 724.6 L1756.0 722.6 L1755.0 721.2 L1754.0 721.0 L1753.0 718.4 L1752.0 716.7 L1751.0 715.1 L1750.0 713.8 L1749.0 711.2 L1748.0 709.4 L1747.0 708.5 L1746.0 706.0 L1745.0 704.4 L1744.0 702.4 L1743.0 702.0 L1742.0 700.0 L1741.0 698.4 L1740.0 696.3 L1739.0 693.8 L1738.0 691.9 L1737.0 690.5 L1736.0 688.0 L1735.0 686.7 L1734.0 683.8 L1733.0 682.5 L1732.0 680.6 L1731.0 678.7 L1730.0 676.3 L1729.0 673.2 L1728.0 672.0 L1727.0 669.0 L1726.0 667.0 L1725.0 665.2 L1724.0 662.6 L1723.0 659.6 L1722.0 657.4 L1721.0 656.0 L1720.0 653.4 L1719.0 650.5 L1718.0 649.1 L1717.0 646.0 L1716.0 644.5 L1715.0 641.8 L1714.0 639.2 L1713.0 636.8 L1712.0 633.5 L1711.0 631.5 L1710.0 629.6 L1709.0 626.0 L1708.0 623.8 L1707.0 621.5 L1706.0 619.7 L1705.0 617.0 L1704.0 614.2 L1703.0 611.4 L1702.0 608.5 L1701.0 606.5 L1700.0 603.5 L1699.0 601.1 L1698.0 597.7 L1697.0 595.5 L1696.0 592.4 L1695.0 589.3 L1694.0 587.7 L1693.0 584.0 L1692.0 580.8 L1691.0 578.3 L1690.0 576.5 L1689.0 572.5 L1688.0 570.9 L1687.0 567.0 L1686.0 564.3 L1685.0 562.1 L1684.0 559.6 L1683.0 555.6 L1682.0 553.8 L1681.0 550.7 L1680.0 547.5 L1679.0 545.4 L1678.0 542.1 L1677.0 540.1 L1676.0 537.6 L1675.0 534.2 L1674.0 531.8 L1673.0 528.8 L1672.0 525.6 L1671.0 523.1 L1670.0 519.6 L1669.0 518.1 L1668.0 514.3 L1667.0 512.2 L1666.0 509.6 L1665.0 506.1 L1664.0 503.7 L1663.0 499.9 L1662.0 497.6 L1661.0 495.7 L1660.0 492.3 L1659.0 489.7 L1658.0 486.5 L1657.0 483.9 L1656.0 480.6 L1655.0 479.2 L1654.0 475.7 L1653.0 473.8 L1652.0 469.9 L1651.0 467.6 L1650.0 465.3 L1649.0 462.3 L1648.0 460.3 L1647.0 458.3 L1646.0 456.0 L1645.0 453.5 L1644.0 450.2 L1643.0 448.1 L1642.0 445.0 L1641.0 443.8 L1640.0 440.1 L1639.0 437.5 L1638.0 435.2 L1637.0 433.7 L1636.0 431.4 L1635.0 428.1 L1634.0 426.6 L1633.0 423.8 L1632.0 421.5 L1631.0 419.7 L1630.0 417.7 L1629.0 414.2 L1628.0 412.0 L1627.0 411.1 L1626.0 408.2 L1625.0 406.5 L1624.0 404.0 L1623.0 402.8 L1622.0 400.5 L1621.0 397.8 L1620.0 396.2 L1619.0 394.0 L1618.0 391.9 L1617.0 389.7 L1616.0 387.8 L1615.0 387.2 L1614.0 385.3 L1613.0 383.6 L1612.0 381.7 L1611.0 379.9 L1610.0 377.8 L1609.0 376.5 L1608.0 375.0 L1607.0 373.1 L1606.0 371.3 L1605.0 370.0 L1604.0 367.2 L1603.0 365.1 L1602.0 364.6 L1601.0 362.0 L1600.0 361.4 L1599.0 360.1 L1598.0 358.3 L1597.0 357.8 L1596.0 355.4 L1595.0 353.9 L1594.0 353.0 L1593.0 352.3 L1592.0 350.5 L1591.0 349.7 L1590.0 349.6 L1589.0 348.6 L1588.0 347.6 L1587.0 346.8 L1586.0 345.8 L1585.0 345.6 L1584.0 343.7 L1583.0 343.8 L1582.0 342.9 L1581.0 342.3 L1580.0 342.1 L1579.0 341.0 L1578.0 339.7 L1577.0 339.4 L1576.0 339.1 L1575.0 339.2 L1574.0 338.7 L1573.0 337.6 L1572.0 338.1 L1571.0 337.2 L1570.0 337.0 L1569.0 337.3 L1568.0 336.3 L1567.0 336.1 L1566.0 336.4 L1565.0 336.0 L1564.0 336.3 L1563.0 336.0 L1562.0 335.7 L1561.0 335.7 L1560.0 335.6 L1559.0 335.9 L1558.0 335.0 L1557.0 334.7 L1556.0 335.3 L1555.0 334.9 L1554.0 336.4 L1553.0 335.4 L1552.0 336.3 L1551.0 335.7 L1550.0 337.0 L1549.0 336.9 L1548.0 337.8 L1547.0 336.8 L1546.0 338.1 L1545.0 337.4 L1544.0 337.9 L1543.0 338.4 L1542.0 338.8 L1541.0 339.8 L1540.0 340.3 L1539.0 340.9 L1538.0 340.9 L1537.0 341.5 L1536.0 341.6 L1535.0 341.8 L1534.0 342.5 L1533.0 344.2 L1532.0 344.2 L1531.0 345.2 L1530.0 346.5 L1529.0 346.2 L1528.0 348.4 L1527.0 349.1 L1526.0 349.3 L1525.0 350.9 L1524.0 352.2 L1523.0 353.5 L1522.0 354.2 L1521.0 355.9 L1520.0 356.8 L1519.0 357.2 L1518.0 359.2 L1517.0 360.6 L1516.0 362.5 L1515.0 363.2 L1514.0 364.9 L1513.0 367.1 L1512.0 368.8 L1511.0 369.7 L1510.0 372.8 L1509.0 374.3 L1508.0 375.6 L1507.0 377.1 L1506.0 378.9 L1505.0 380.1 L1504.0 382.9 L1503.0 384.7 L1502.0 385.1 L1501.0 387.7 L1500.0 390.1 L1499.0 391.1 L1498.0 393.0 L1497.0 394.6 L1496.0 397.1 L1495.0 400.0 L1494.0 402.2 L1493.0 403.4 L1492.0 404.9 L1491.0 408.1 L1490.0 409.2 L1489.0 412.5 L1488.0 413.7 L1487.0 415.9 L1486.0 418.2 L1485.0 421.5 L1484.0 423.7 L1483.0 425.5 L1482.0 428.3 L1481.0 430.4 L1480.0 432.6 L1479.0 435.1 L1478.0 438.0 L1477.0 439.8 L1476.0 441.5 L1475.0 445.4 L1474.0 447.2 L1473.0 450.0 L1472.0 451.8 L1471.0 454.3 L1470.0 457.8 L1469.0 460.2 L1468.0 461.8 L1467.0 465.1 L1466.0 467.0 L1465.0 470.1 L1464.0 472.3 L1463.0 474.9 L1462.0 478.2 L1461.0 480.0 L1460.0 483.4 L1459.0 486.4 L1458.0 488.4 L1457.0 491.7 L1456.0 493.5 L1455.0 496.5 L1454.0 499.5 L1453.0 502.3 L1452.0 505.4 L1451.0 508.4 L1450.0 511.4 L1449.0 513.7 L1448.0 516.9 L1447.0 519.2 L1446.0 522.1 L1445.0 525.4 L1444.0 527.1 L1443.0 530.0 L1442.0 533.8 L1441.0 535.9 L1440.0 539.4 L1439.0 542.0 L1438.0 544.2 L1437.0 546.5 L1436.0 550.3 L1435.0 552.6 L1434.0 556.0 L1433.0 557.7 L1432.0 561.0 L1431.0 563.7 L1430.0 566.1 L1429.0 568.9 L1428.0 572.3 L1427.0 575.2 L1426.0 577.8 L1425.0 580.9 L1424.0 583.7 L1423.0 585.7 L1422.0 589.0 L1421.0 592.2 L1420.0 593.6 L1419.0 596.9 L1418.0 600.1 L1417.0 602.9 L1416.0 605.9 L1415.0 608.5 L1414.0 610.1 L1413.0 613.0 L1412.0 615.4 L1411.0 618.6 L1410.0 621.7 L1409.0 623.3 L1408.0 625.8 L1407.0 628.3 L1406.0 630.7 L1405.0 633.9 L1404.0 636.1 L1403.0 638.3 L1402.0 641.0 L1401.0 642.9 L1400.0 645.3 L1399.0 647.2 L1398.0 649.9 L1397.0 652.3 L1396.0 655.6 L1395.0 656.9 L1394.0 660.3 L1393.0 661.7 L1392.0 664.2 L1391.0 665.9 L1390.0 668.2 L1389.0 670.3 L1388.0 672.5 L1387.0 675.0 L1386.0 676.7 L1385.0 679.5 L1384.0 681.7 L1383.0 684.0 L1382.0 685.4 L1381.0 688.6 L1380.0 690.1 L1379.0 691.5 L1378.0 693.9 L1377.0 694.9 L1376.0 696.8 L1375.0 698.3 L1374.0 700.3 L1373.0 702.3 L1372.0 705.0 L1371.0 706.7 L1370.0 707.6 L1369.0 709.1 L1368.0 711.5 L1367.0 713.2 L1366.0 714.3 L1365.0 716.6 L1364.0 718.0 L1363.0 720.4 L1362.0 722.1 L1361.0 722.4 L1360.0 723.9 L1359.0 725.4 L1358.0 727.4 L1357.0 727.9 L1356.0 729.2 L1355.0 730.3 L1354.0 732.7 L1353.0 732.9 L1352.0 733.4 L1351.0 734.9 L1350.0 735.3 L1349.0 736.2 L1348.0 737.3 L1347.0 738.8 L1346.0 739.3 L1345.0 740.6 L1344.0 741.0 L1343.0 740.7 L1342.0 742.2 L1341.0 741.9 L1340.0 743.7 L1339.0 743.6 L1338.0 743.3 L1337.0 743.7 L1336.0 745.3 L1335.0 746.0 L1334.0 746.0 L1333.0 745.2 L1332.0 745.8 L1331.0 746.9 L1330.0 747.2 L1329.0 747.4 L1328.0 747.5 L1327.0 747.6 L1326.0 748.2 L1325.0 747.6 L1324.0 748.9 L1323.0 747.4 L1322.0 748.5 L1321.0 748.6 L1320.0 748.1 L1319.0 748.6 L1318.0 747.8 L1317.0 748.8 L1316.0 747.7 L1315.0 748.0 L1314.0 747.1 L1313.0 747.6 L1312.0 746.7 L1311.0 746.3 L1310.0 746.2 L1309.0 745.6 L1308.0 746.4 L1307.0 746.5 L1306.0 744.8 L1305.0 745.2 L1304.0 744.4 L1303.0 744.3 L1302.0 743.5 L1301.0 742.6 L1300.0 742.4 L1299.0 742.1 L1298.0 742.1 L1297.0 740.3 L1296.0 739.8 L1295.0 739.3 L1294.0 739.5 L1293.0 737.7 L1292.0 737.0 L1291.0 736.1 L1290.0 735.5 L1289.0 735.0 L1288.0 733.9 L1287.0 733.1 L1286.0 731.0 L1285.0 730.4 L1284.0 729.4 L1283.0 728.1 L1282.0 725.6 L1281.0 725.7 L1280.0 723.7 L1279.0 722.2 L1278.0 720.4 L1277.0 718.6 L1276.0 718.3 L1275.0 715.0 L1274.0 714.1 L1273.0 712.0 L1272.0 710.6 L1271.0 708.5 L1270.0 706.3 L1269.0 705.9 L1268.0 703.3 L1267.0 702.0 L1266.0 699.9 L1265.0 697.7 L1264.0 696.2 L1263.0 695.1 L1262.0 691.9 L1261.0 691.4 L1260.0 688.2 L1259.0 686.0 L1258.0 685.3 L1257.0 682.8 L1256.0 680.0 L1255.0 678.8 L1254.0 676.5 L1253.0 674.7 L1252.0 671.3 L1251.0 669.9 L1250.0 667.5 L1249.0 664.9 L1248.0 663.8 L1247.0 661.3 L1246.0 657.8 L1245.0 655.4 L1244.0 654.5 L1243.0 651.2 L1242.0 649.6 L1241.0 647.1 L1240.0 644.7 L1239.0 642.5 L1238.0 639.6 L1237.0 637.2 L1236.0 634.5 L1235.0 631.8 L1234.0 629.8 L1233.0 627.0 L1232.0 624.0 L1231.0 621.6 L1230.0 619.8 L1229.0 616.6 L1228.0 615.1 L1227.0 612.3 L1226.0 608.7 L1225.0 607.0 L1224.0 604.5 L1223.0 600.6 L1222.0 597.9 L1221.0 595.8 L1220.0 593.2 L1219.0 590.4 L1218.0 587.1 L1217.0 584.1 L1216.0 582.5 L1215.0 579.2 L1214.0 575.8 L1213.0 573.4 L1212.0 570.8 L1211.0 568.1 L1210.0 565.4 L1209.0 562.2 L1208.0 559.0 L1207.0 557.3 L1206.0 553.6 L1205.0 551.1 L1204.0 548.5 L1203.0 545.8 L1202.0 542.2 L1201.0 540.3 L1200.0 538.2 L1199.0 535.3 L1198.0 531.8 L1197.0 528.5 L1196.0 526.1 L1195.0 523.5 L1194.0 520.2 L1193.0 518.5 L1192.0 515.1 L1191.0 512.2 L1190.0 509.8 L1189.0 506.6 L1188.0 504.5 L1187.0 500.3 L1186.0 497.8 L1185.0 494.8 L1184.0 493.5 L1183.0 489.5 L1182.0 486.6 L1181.0 484.2 L1180.0 481.8 L1179.0 479.8 L1178.0 476.7 L1177.0 473.9 L1176.0 470.4 L1175.0 469.0 L1174.0 466.0 L1173.0 463.0 L1172.0 460.3 L1171.0 458.6 L1170.0 456.2 L1169.0 454.0 L1168.0 451.1 L1167.0 448.1 L1166.0 446.4 L1165.0 442.9 L1164.0 440.7 L1163.0 439.4 L1162.0 436.5 L1161.0 433.1 L1160.0 431.0 L1159.0 429.2 L1158.0 427.0 L1157.0 424.9 L1156.0 422.6 L1155.0 419.2 L1154.0 417.2 L1153.0 415.4 L1152.0 412.6 L1151.0 411.4 L1150.0 408.5 L1149.0 406.2 L1148.0 404.3 L1147.0 403.0 L1146.0 400.4 L1145.0 398.6 L1144.0 396.8 L1143.0 394.9 L1142.0 392.5 L1141.0 391.1 L1140.0 388.4 L1139.0 386.7 L1138.0 384.6 L1137.0 383.5 L1136.0 380.9 L1135.0 379.3 L1134.0 377.8 L1133.0 375.9 L1132.0 374.9 L1131.0 373.0 L1130.0 371.8 L1129.0 368.8 L1128.0 367.2 L1127.0 366.1 L1126.0 364.7 L1125.0 362.7 L1124.0 361.8 L1123.0 360.2 L1122.0 358.5 L1121.0 356.6 L1120.0 356.5 L1119.0 354.5 L1118.0 352.8 L1117.0 352.9 L1116.0 351.6 L1115.0 349.7 L1114.0 349.3 L1113.0 347.4 L1112.0 347.7 L1111.0 345.7 L1110.0 346.0 L1109.0 344.6 L1108.0 344.4 L1107.0 343.0 L1106.0 342.6 L1105.0 342.1 L1104.0 341.2 L1103.0 340.3 L1102.0 340.9 L1101.0 340.7 L1100.0 339.1 L1099.0 338.9 L1098.0 338.4 L1097.0 338.7 L1096.0 337.9 L1095.0 337.5 L1094.0 338.2 L1093.0 337.1 L1092.0 336.4 L1091.0 336.4 L1090.0 336.6 L1089.0 336.0 L1088.0 335.9 L1087.0 336.1 L1086.0 335.4 L1085.0 336.2 L1084.0 335.1 L1083.0 336.1 L1082.0 335.3 L1081.0 336.2 L1080.0 335.3 L1079.0 335.1 L1078.0 335.7 L1077.0 335.6 L1076.0 335.6 L1075.0 335.9 L1074.0 336.2 L1073.0 336.1 L1072.0 337.1 L1071.0 337.0 L1070.0 337.4 L1069.0 337.5 L1068.0 338.2 L1067.0 338.2 L1066.0 339.2 L1065.0 338.9 L1064.0 339.7 L1063.0 340.3 L1062.0 341.2 L1061.0 340.9 L1060.0 342.5 L1059.0 342.0 L1058.0 343.0 L1057.0 343.9 L1056.0 343.8 L1055.0 345.1 L1054.0 346.1 L1053.0 346.1 L1052.0 347.0 L1051.0 348.8 L1050.0 349.8 L1049.0 349.7 L1048.0 351.7 L1047.0 352.7 L1046.0 353.2 L1045.0 355.5 L1044.0 355.7 L1043.0 357.8 L1042.0 359.0 L1041.0 360.0 L1040.0 361.7 L1039.0 363.5 L1038.0 365.4 L1037.0 365.8 L1036.0 368.1 L1035.0 369.9 L1034.0 372.0 L1033.0 373.2 L1032.0 375.4 L1031.0 376.3 L1030.0 378.6 L1029.0 379.7 L1028.0 382.6 L1027.0 384.2 L1026.0 386.1 L1025.0 387.3 L1024.0 389.9 L1023.0 390.5 L1022.0 393.0 L1021.0 395.7 L1020.0 396.9 L1019.0 399.7 L1018.0 401.2 L1017.0 403.0 L1016.0 404.6 L1015.0 407.6 L1014.0 409.3 L1013.0 411.5 L1012.0 414.2 L1011.0 416.2 L1010.0 418.4 L1009.0 421.3 L1008.0 423.0 L1007.0 424.4 L1006.0 427.4 L1005.0 430.6 L1004.0 432.8 L1003.0 435.3 L1002.0 437.1 L1001.0 438.8 L1000.0 441.3 L999.0 444.2 L998.0 447.1 L997.0 448.9 L996.0 451.4 L995.0 454.4 L994.0 456.4 L993.0 459.2 L992.0 462.0 L991.0 464.2 L990.0 466.6 L989.0 469.7 L988.0 472.5 L987.0 475.2 L986.0 477.7 L985.0 480.3 L984.0 483.0 L983.0 485.9 L982.0 488.3 L981.0 490.6 L980.0 493.1 L979.0 497.1 L978.0 498.6 L977.0 501.9 L976.0 504.1 L975.0 508.2 L974.0 509.8 L973.0 512.9 L972.0 515.7 L971.0 518.9 L970.0 522.2 L969.0 523.6 L968.0 527.0 L967.0 529.5 L966.0 532.4 L965.0 535.7 L964.0 538.2 L963.0 540.5 L962.0 543.8 L961.0 547.0 L960.0 548.6 L959.0 551.6 L958.0 554.4 L957.0 557.0 L956.0 560.4 L955.0 562.8 L954.0 566.7 L953.0 568.2 L952.0 571.3 L951.0 575.1 L950.0 577.2 L949.0 580.2 L948.0 582.9 L947.0 585.9 L946.0 588.6 L945.0 591.7 L944.0 594.4 L943.0 597.3 L942.0 600.1 L941.0 601.3 L940.0 604.6 L939.0 607.5 L938.0 610.3 L937.0 612.3 L936.0 616.0 L935.0 617.2 L934.0 620.9 L933.0 623.4 L932.0 625.4 L931.0 627.5 L930.0 630.8 L929.0 632.7 L928.0 635.9 L927.0 637.6 L926.0 640.7 L925.0 643.0 L924.0 644.5 L923.0 647.6 L922.0 649.6 L921.0 651.8 L920.0 654.5 L919.0 656.1 L918.0 659.8 L917.0 661.8 L916.0 663.9 L915.0 665.2 L914.0 668.6 L913.0 669.7 L912.0 672.3 L911.0 674.3 L910.0 677.8 L909.0 679.2 L908.0 681.3 L907.0 684.0 L906.0 684.7 L905.0 687.2 L904.0 689.1 L903.0 691.9 L902.0 692.7 L901.0 695.0 L900.0 696.2 L899.0 698.6 L898.0 700.3 L897.0 701.8 L896.0 704.7 L895.0 706.5 L894.0 707.5 L893.0 709.8 L892.0 711.5 L891.0 713.1 L890.0 714.9 L889.0 715.8 L888.0 718.5 L887.0 719.9 L886.0 720.8 L885.0 722.8 L884.0 723.4 L883.0 725.7 L882.0 726.2 L881.0 728.2 L880.0 730.0 L879.0 730.0 L878.0 732.2 L877.0 732.3 L876.0 734.4 L875.0 735.6 L874.0 736.1 L873.0 737.3 L872.0 736.8 L871.0 739.0 L870.0 738.7 L869.0 739.3 L868.0 740.4 L867.0 741.3 L866.0 741.0 L865.0 741.7 L864.0 742.6 L863.0 742.9 L862.0 744.5 L861.0 743.8 L860.0 744.4 L859.0 744.6 L858.0 745.8 L857.0 745.2 L856.0 746.6 L855.0 746.6 L854.0 746.6 L853.0 747.6 L852.0 747.9 L851.0 747.8 L850.0 747.3 L849.0 747.3 L848.0 748.5 L847.0 748.5 L846.0 747.7 L845.0 748.6 L844.0 747.7 L843.0 749.0 L842.0 747.8 L841.0 747.6 L840.0 748.3 L839.0 748.0 L838.0 747.1 L837.0 746.7 L836.0 747.1 L835.0 746.2 L834.0 746.2 L833.0 747.1 L832.0 746.8 L831.0 745.4 L830.0 745.4 L829.0 745.9 L828.0 744.0 L827.0 744.1 L826.0 743.3 L825.0 743.6 L824.0 742.6 L823.0 741.5 L822.0 741.7 L821.0 741.1 L820.0 740.7 L819.0 739.1 L818.0 739.0 L817.0 738.2 L816.0 738.0 L815.0 736.1 L814.0 736.2 L813.0 734.7 L812.0 734.2 L811.0 732.2 L810.0 731.9 L809.0 730.0 L808.0 729.6 L807.0 728.4 L806.0 726.0 L805.0 725.9 L804.0 724.4 L803.0 722.1 L802.0 721.6 L801.0 720.1 L800.0 718.5 L799.0 716.2 L798.0 713.9 L797.0 712.2 L796.0 711.4 L795.0 709.4 L794.0 708.0 L793.0 705.3 L792.0 704.4 L791.0 702.3 L790.0 700.9 L789.0 699.4 L788.0 696.5 L787.0 695.4 L786.0 693.5 L785.0 691.0 L784.0 689.4 L783.0 687.7 L782.0 685.5 L781.0 683.2 L780.0 680.3 L779.0 679.5 L778.0 677.2 L777.0 674.0 L776.0 672.7 L775.0 669.5 L774.0 668.8 L773.0 666.5 L772.0 663.9 L771.0 660.6 L770.0 659.5 L769.0 657.1 L768.0 653.8 L767.0 651.5 L766.0 648.8 L765.0 647.8 L764.0 645.5 L763.0 642.7 L762.0 639.2 L761.0 637.0 L760.0 634.4 L759.0 632.6 L758.0 630.9 L757.0 627.5 L756.0 625.1 L755.0 622.8 L754.0 619.6 L753.0 617.7 L752.0 615.7 L751.0 612.3 L750.0 609.7 L749.0 606.8 L748.0 604.9 L747.0 601.6 L746.0 599.7 L745.0 595.6 L744.0 593.0 L743.0 590.8 L742.0 587.6 L741.0 585.4 L740.0 582.7 L739.0 579.9 L738.0 577.4 L737.0 574.3 L736.0 570.8 L735.0 568.2 L734.0 565.8 L733.0 563.2 L732.0 560.5 L731.0 557.4 L730.0 554.2 L729.0 552.2 L728.0 549.7 L727.0 545.8 L726.0 543.3 L725.0 540.4 L724.0 538.1 L723.0 535.1 L722.0 532.9 L721.0 529.6 L720.0 527.5 L719.0 524.3 L718.0 520.6 L717.0 518.5 L716.0 516.5 L715.0 513.6 L714.0 510.3 L713.0 507.5 L712.0 503.8 L711.0 501.6 L710.0 499.4 L709.0 496.2 L708.0 493.9 L707.0 491.1 L706.0 487.8 L705.0 484.5 L704.0 481.6 L703.0 479.1 L702.0 476.6 L701.0 474.9 L700.0 472.0 L699.0 469.3 L698.0 466.9 L697.0 464.4 L696.0 461.7 L695.0 459.4 L694.0 456.7 L693.0 453.2 L692.0 451.8 L691.0 448.3 L690.0 446.0 L689.0 444.7 L688.0 440.8 L687.0 439.7 L686.0 437.2 L685.0 434.9 L684.0 432.6 L683.0 429.4 L682.0 427.5 L681.0 425.0 L680.0 422.3 L679.0 420.8 L678.0 417.6 L677.0 415.5 L676.0 413.3 L675.0 411.2 L674.0 408.7 L673.0 406.8 L672.0 405.5 L671.0 403.1 L670.0 401.6 L669.0 398.9 L668.0 397.0 L667.0 395.2 L666.0 392.3 L665.0 391.3 L664.0 389.0 L663.0 387.5 L662.0 385.0 L661.0 383.9 L660.0 381.7 L659.0 379.9 L658.0 377.7 L657.0 377.4 L656.0 375.4 L655.0 373.6 L654.0 372.3 L653.0 369.9 L652.0 368.4 L651.0 366.8 L650.0 364.8 L649.0 363.1 L648.0 362.0 L647.0 360.3 L646.0 359.6 L645.0 357.3 L644.0 356.4 L643.0 355.6 L642.0 353.6 L641.0 352.4 L640.0 351.0 L639.0 350.6 L638.0 349.2 L637.0 348.5 L636.0 347.4 L635.0 346.9 L634.0 346.2 L633.0 345.7 L632.0 344.0 L631.0 344.1 L630.0 342.9 L629.0 342.8 L628.0 341.9 L627.0 341.1 L626.0 340.6 L625.0 340.6 L624.0 338.9 L623.0 338.8 L622.0 339.1 L621.0 338.4 L620.0 338.7 L619.0 338.7 L618.0 338.4 L617.0 337.4 L616.0 336.5 L615.0 337.1 L614.0 336.1 L613.0 336.4 L612.0 335.6 L611.0 336.5 L610.0 335.5 L609.0 336.0 L608.0 335.1 L607.0 335.4 L606.0 334.9 L605.0 334.8 L604.0 335.3 L603.0 336.1 L602.0 336.0 L601.0 336.2 L600.0 336.8 L599.0 336.0 L598.0 337.0 L597.0 337.5 L596.0 336.2 L595.0 337.9 L594.0 337.9 L593.0 337.8 L592.0 337.4 L591.0 339.1 L590.0 339.6 L589.0 339.0 L588.0 339.3 L587.0 339.3 L586.0 340.3 L585.0 341.5 L584.0 341.1 L583.0 342.5 L582.0 343.2 L581.0 344.2 L580.0 343.7 L579.0 344.4 L578.0 346.5 L577.0 345.9 L576.0 347.9 L575.0 348.0 L574.0 348.5 L573.0 350.5 L572.0 351.6 L571.0 351.6 L570.0 353.3 L569.0 354.2 L568.0 355.5 L567.0 356.7 L566.0 358.2 L565.0 360.2 L564.0 361.4 L563.0 363.3 L562.0 364.5 L561.0 366.5 L560.0 368.2 L559.0 369.3 L558.0 372.0 L557.0 373.5 L556.0 375.2 L555.0 376.1 L554.0 378.8 L553.0 380.7 L552.0 381.3 L551.0 383.8 L550.0 385.2 L549.0 387.3 L548.0 389.1 L547.0 390.4 L546.0 392.2 L545.0 394.1 L544.0 396.9 L543.0 399.0 L542.0 399.8 L541.0 403.2 L540.0 404.1 L539.0 406.6 L538.0 409.6 L537.0 411.3 L536.0 413.0 L535.0 416.4 L534.0 417.1 L533.0 419.5 L532.0 422.3 L531.0 424.0 L530.0 426.7 L529.0 430.1 L528.0 432.0 L527.0 434.2 L526.0 435.7 L525.0 438.8 L524.0 441.9 L523.0 443.1 L522.0 445.8 L521.0 448.0 L520.0 451.3 L519.0 453.7 L518.0 455.6 L517.0 457.9 L516.0 460.2 L515.0 463.8 L514.0 465.5 L513.0 468.8 L512.0 471.5 L511.0 473.3 L510.0 476.4 L509.0 479.5 L508.0 482.3 L507.0 485.3 L506.0 487.9 L505.0 490.2 L504.0 492.8 L503.0 496.6 L502.0 499.1 L501.0 501.6 L500.0 503.6 L499.0 507.1 L498.0 510.4 L497.0 512.8 L496.0 514.8 L495.0 517.7 L494.0 521.3 L493.0 523.3 L492.0 525.9 L491.0 529.4 L490.0 531.7 L489.0 534.9 L488.0 538.2 L487.0 541.1 L486.0 543.6 L485.0 545.2 L484.0 549.1 L483.0 552.1 L482.0 554.2 L481.0 556.5 L480.0 560.2 L479.0 563.2 L478.0 566.1 L477.0 568.2 L476.0 571.0 L475.0 574.2 L474.0 576.8 L473.0 579.4 L472.0 581.6 L471.0 584.4 L470.0 587.7 L469.0 590.5 L468.0 593.7 L467.0 596.0 L466.0 598.0 L465.0 601.4 L464.0 604.1 L463.0 606.8 L462.0 609.7 L461.0 612.3 L460.0 615.3 L459.0 617.8 L458.0 619.2 L457.0 622.8 L456.0 624.4 L455.0 627.5 L454.0 629.5 L453.0 632.9 L452.0 634.7 L451.0 637.7 L450.0 640.2 L449.0 642.8 L448.0 645.2 L447.0 646.9 L446.0 650.0 L445.0 651.2 L444.0 654.5 L443.0 655.8 L442.0 658.7 L441.0 660.4 L440.0 663.1 L439.0 664.9 L438.0 668.0 L437.0 669.3 L436.0 672.2 L435.0 674.3 L434.0 676.5 L433.0 677.9 L432.0 681.2 L431.0 682.7 L430.0 685.5 L429.0 686.8 L428.0 688.7 L427.0 690.7 L426.0 692.7 L425.0 694.2 L424.0 696.8 L423.0 698.2 L422.0 699.5 L421.0 702.4 L420.0 703.4 L419.0 705.7 L418.0 706.4 L417.0 709.1 L416.0 710.2 L415.0 711.8 L414.0 713.7 L413.0 716.1 L412.0 718.4 L411.0 719.0 L410.0 721.5 L409.0 723.0 L408.0 724.5 L407.0 724.5 L406.0 725.7 L405.0 728.3 L404.0 729.0 L403.0 731.1 L402.0 732.0 L401.0 732.6 L400.0 733.5 L399.0 734.8 L398.0 735.1 L397.0 736.1 L396.0 737.7 L395.0 738.2 L394.0 739.4 L393.0 739.8 L392.0 740.7 L391.0 741.1 L390.0 741.2 L389.0 742.5 L388.0 742.1 L387.0 743.0 L386.0 744.4 L385.0 744.0 L384.0 744.0 L383.0 744.7 L382.0 744.9 L381.0 746.2 L380.0 745.7 L379.0 746.8 L378.0 746.1 L377.0 746.8 L376.0 747.9 L375.0 747.0 L374.0 747.9 L373.0 747.1 L372.0 748.4 L371.0 748.9 L370.0 748.9 L369.0 749.0 L368.0 748.8 L367.0 749.0 L366.0 749.0 L365.0 748.1 L364.0 747.8 L363.0 748.6 L362.0 746.9 L361.0 747.3 L360.0 746.5 L359.0 746.5 L358.0 747.5 L357.0 747.1 L356.0 745.5 L355.0 745.6 L354.0 746.2 L353.0 745.0 L352.0 744.3 L351.0 745.1 L350.0 744.4 L349.0 743.1 L348.0 742.7 L347.0 741.9 L346.0 742.2 L345.0 740.7 L344.0 740.3 L343.0 739.0 L342.0 739.7 L341.0 737.9 L340.0 737.8 L339.0 735.9 L338.0 736.2 L337.0 734.6 L336.0 733.9 L335.0 733.2 L334.0 731.8 L333.0 729.9 L332.0 729.0 L331.0 728.3 L330.0 726.2 L329.0 725.9 L328.0 723.8 L327.0 722.5 L326.0 722.0 L325.0 720.3 L324.0 718.3 L323.0 716.9 L322.0 715.0 L321.0 713.2 L320.0 710.6 L319.0 709.0 L318.0 708.3 L317.0 706.7 L316.0 703.4 L315.0 702.5 L314.0 701.1 L313.0 698.2 L312.0 697.7 L311.0 695.2 L310.0 693.0 L309.0 691.1 L308.0 689.8 L307.0 687.0 L306.0 685.2 L305.0 683.3 L304.0 681.5 L303.0 679.2 L302.0 677.8 L301.0 674.7 L300.0 672.2 L299.0 670.0 L298.0 667.9 L297.0 667.0 L296.0 663.5 L295.0 662.3 L294.0 658.9 L293.0 656.9 L292.0 654.4 L291.0 652.0 L290.0 650.4 L289.0 647.4 L288.0 644.7 L287.0 642.1 L286.0 640.7 L285.0 637.9 L284.0 634.8 L283.0 633.2 L282.0 631.3 L281.0 628.7 L280.0 626.4 L279.0 622.7 L278.0 620.3 L277.0 618.8 L276.0 616.1 L275.0 612.2 L274.0 610.2 L273.0 607.8 L272.0 604.8 L271.0 602.0 L270.0 600.0 L269.0 596.3 L268.0 594.5 L267.0 591.9 L266.0 588.4 L265.0 585.5 L264.0 583.0 L263.0 579.5 L262.0 578.1 L261.0 575.0 L260.0 571.9 L259.0 568.5 L258.0 566.3 L257.0 563.6 L256.0 561.3 L255.0 557.5 L254.0 555.8 L253.0 552.2 L252.0 550.2 L251.0 546.2 L250.0 543.4 L249.0 541.2 L248.0 538.2 L247.0 536.1 L246.0 532.6 L245.0 529.5 L244.0 527.2 L243.0 524.3 L242.0 521.2 L241.0 519.3 L240.0 516.6 L239.0 513.3 L238.0 511.4 L237.0 507.4 L236.0 504.7 L235.0 501.9 L234.0 498.8 L233.0 496.7 L232.0 494.3 L231.0 490.3 L230.0 488.7 L229.0 485.8 L228.0 483.4 L227.0 480.0 L226.0 476.7 L225.0 475.1 L224.0 472.8 L223.0 470.0 L222.0 467.4 L221.0 464.4 L220.0 462.3 L219.0 459.4 L218.0 457.3 L217.0 454.5 L216.0 451.3 L215.0 449.1 L214.0 447.5 L213.0 444.7 L212.0 442.1 L211.0 439.2 L210.0 436.5 L209.0 434.7 L208.0 432.1 L207.0 430.1 L206.0 427.8 L205.0 425.3 L204.0 422.9 L203.0 421.6 L202.0 418.7 L201.0 417.1 L200.0 414.0 L199.0 411.9 L198.0 409.3 L197.0 407.8 L196.0 406.0 L195.0 402.8 L194.0 401.6 L193.0 398.6 L192.0 396.9 L191.0 395.4 L190.0 393.7 L189.0 392.0 L188.0 389.4 L187.0 388.0 L186.0 385.6 L185.0 383.3 L184.0 382.1 L183.0 380.5 L182.0 377.9 L181.0 376.2 L180.0 374.8 L179.0 373.3 L178.0 371.6 L177.0 369.8 L176.0 368.0 L175.0 366.4 L174.0 364.5 L173.0 364.1 L172.0 361.6 L171.0 361.1 L170.0 359.7 L169.0 358.3 L168.0 357.2 L167.0 355.1 L166.0 353.2 L165.0 353.1 L164.0 352.3 L163.0 350.1 L162.0 350.1 L161.0 347.9 L160.0 348.1 L159.0 346.4 L158.0 346.8 L157.0 346.0 L156.0 344.6 L155.0 343.6 L154.0 343.1 L153.0 341.7 L152.0 341.6 L151.0 341.0 L150.0 340.6 L149.0 340.8 L148.0 339.7 L147.0 340.0 L146.0 339.7 L145.0 338.0 L144.0 338.6 L143.0 338.6 L142.0 337.3 L141.0 336.8 L140.0 337.2 L139.0 337.5 L138.0 336.6 L137.0 336.7 L136.0 336.3 L135.0 336.4 L134.0 336.2 L133.0 335.7 L132.0 335.6 L131.0 335.5 L130.0 335.9 L129.0 335.3 L128.0 335.5 L127.0 335.5 L126.0 335.6 L125.0 335.3 L124.0 336.2 L123.0 335.9 L122.0 337.1 L121.0 336.8 L120.0 336.4 L119.0 337.5 L118.0 337.0 L117.0 337.3 L116.0 337.6 L115.0 339.1 L114.0 338.6 L113.0 339.6 L112.0 340.0 L111.0 339.9 L110.0 340.9 L109.0 341.3 L108.0 342.1 L107.0 342.2 L106.0 343.5 L105.0 343.0 L104.0 343.7 L103.0 344.7 L102.0 346.4 L101.0 346.3 L100.0 347.5 L99.0 347.7 L98.0 348.2 L97.0 350.0 L96.0 351.4 L95.0 352.7 L94.0 354.1 L93.0 354.1 L92.0 356.3 L91.0 357.5 L90.0 358.2 L89.0 360.1 L88.0 361.9 L87.0 361.9 L86.0 363.7 L85.0 366.6 L84.0 367.1 L83.0 369.0 L82.0 370.5 L81.0 372.8 L80.0 375.3 L79.0 375.6 L78.0 377.6 L77.0 379.0 L76.0 381.9 L75.0 382.8 L74.0 384.2 L73.0 385.9 L72.0 387.9 L71.0 389.6 L70.0 392.4 L69.0 394.0 L68.0 396.6 L67.0 398.6 L66.0 399.5 L65.0 402.5 L64.0 404.7 L63.0 406.6 L62.0 408.5 L61.0 410.4 L60.0 413.0 L59.0 414.8 L58.0 416.9 L57.0 420.3 L56.0 421.9 L55.0 424.9 L54.0 427.2 L53.0 428.9 L52.0 431.9 L51.0 433.3 L50.0 436.5 L49.0 437.8 L48.0 440.8 L47.0 443.5 L46.0 445.4 L45.0 448.9 L44.0 450.9 L43.0 453.3 L42.0 456.2 L41.0 457.9 L40.0 460.7 L39.0 462.7 L38.0 465.7 L37.0 468.5 L36.0 470.8 L35.0 473.9 L34.0 475.5 L33.0 478.5 L32.0 482.1 L31.0 484.4 L30.0 487.3 L29.0 489.4 L28.0 492.6 L27.0 495.2 L26.0 497.6 L25.0 500.2 L24.0 503.4 L23.0 506.6 L22.0 509.8 L21.0 511.5 L20.0 514.5 L19.0 517.0 L18.0 520.3 L17.0 524.0 L16.0 525.6 L15.0 529.4 L14.0 531.0 L13.0 534.3 L12.0 537.2 L11.0 539.7 L10.0 541.9 L9.0 544.8Z" fill="url(#tx)"/><path d="M120.0 324.3v-5.9M130.0 322.6v-4.4M141.0 324.7v-4.3M142.0 325.0v-5.0M356.0 746.1v3.2M363.0 747.9v5.9M365.0 748.2v4.4M367.0 748.4v4.2M368.0 748.4v3.1M595.0 324.6v-5.5M597.0 324.0v-4.5M602.0 323.0v-5.4M613.0 323.6v-4.4M617.0 324.6v-4.0M619.0 325.3v-4.2M842.0 748.3v3.8M848.0 748.0v4.0M850.0 747.7v5.0M854.0 746.7v5.8M1073.0 324.1v-5.5M1075.0 323.6v-5.0M1082.0 322.6v-5.1M1085.0 322.8v-4.5M1088.0 323.3v-3.5M1091.0 324.0v-3.9M1095.0 325.2v-5.0M1315.0 747.8v5.4M1316.0 748.0v3.6M1320.0 748.4v4.2M1324.0 748.1v4.8M1325.0 747.9v3.5M1326.0 747.7v5.4M1333.0 745.8v4.4M1560.0 322.7v-4.7M1562.0 322.9v-4.9M1564.0 323.3v-3.5M1566.0 323.7v-3.3M1784.0 745.9v4.1M1786.0 746.5v5.3M1794.0 748.2v3.6M1795.0 748.3v5.5M1796.0 748.4v5.7M1800.0 748.1v4.8" stroke="#c8c800" stroke-width="1.5"/><line x1="725" y1="402" x2="725" y2="520" stroke="#d8d800" stroke-width="1.6"/><line x1="963" y1="545" x2="963" y2="660" stroke="#d8d800" stroke-width="1.6"/><line x1="1201" y1="411" x2="1201" y2="545" stroke="#d8d800" stroke-width="1.6"/><line x1="1439.5" y1="509" x2="1439.5" y2="654" stroke="#d8d800" stroke-width="1.6"/><line x1="11" y1="512" x2="11" y2="659" stroke="#6a6a00" stroke-width="1.2"/></g><path d="M951.3 96.2 H969.7 L960.5 104.6 Z" fill="none" stroke="#f39200" stroke-width="1.7"/><path d="M7.5 529 H28 L41.5 538 L28 547.5 H7.5 Z" fill="#000" stroke="#f0f000" stroke-width="1.6"/><text transform="translate(18.70 543.50) scale(0.682 1)" font-family="'Liberation Sans', sans-serif" font-size="16.67" font-weight="normal" font-style="normal" fill="#f0f000"  stroke="#f0f000" stroke-width="0.35">1</text><path d="M7.5 946.5 H26.5 V966 L17 980 L7.5 966 Z" fill="#000" stroke="#0a3cff" stroke-width="1.6"/><text transform="translate(13.19 969.50) scale(0.955 1)" font-family="'Liberation Sans', sans-serif" font-size="16.43" font-weight="normal" font-style="normal" fill="#0a3cff"  stroke="#0a3cff" stroke-width="0.35">4</text></svg><div class="bar" style="left:4px;top:988px;width:76px;height:87px;border-radius:9px"></div><div class="a" style="left:7px;top:991px;width:70px;height:82px;border-radius:7px;background:linear-gradient(#0058a3,#03294f 55%,#000c16)"></div><div class="a" style="left:23px;top:1011px;width:17.5px;height:18.5px;border-radius:3px;border:1.5px solid #c8d0d6;background:linear-gradient(#1d5c8a,#8aa2b4)"></div><div class="a" style="left:44px;top:1011px;width:17.5px;height:18.5px;border-radius:3px;border:1.5px solid #c8d0d6;background:linear-gradient(#1d5c8a,#8aa2b4)"></div><div class="a" style="left:23px;top:1034px;width:17.5px;height:18.5px;border-radius:3px;border:1.5px solid #c8d0d6;background:linear-gradient(#1d5c8a,#8aa2b4)"></div><div class="a" style="left:44px;top:1034px;width:17.5px;height:18.5px;border-radius:3px;border:1.5px solid #c8d0d6;background:linear-gradient(#1d5c8a,#8aa2b4)"></div><div class="bar" style="left:83px;top:988px;width:651px;height:87px;border-radius:9px"></div><div class="bar" style="left:737.5px;top:988px;width:515px;height:87px;border-radius:9px"></div><div class="bar" style="left:1257.5px;top:988px;width:497px;height:87px;border-radius:9px"></div><div class="bar" style="left:1759.5px;top:988px;width:158px;height:87px;border-radius:9px"></div><div class="a" style="left:90.1px;top:1000.3px;width:154px;height:72.7px;border-radius:7px;background:#536066"></div><div class="a" style="left:92.1px;top:1011.2px;width:150px;height:60px;border-radius:0 6px 6px 6px;background:#2c363a"></div><div class="a" style="left:90.1px;top:991.2px;width:73.3px;height:19.8px;border-radius:7px 7px 0 0;background:#070203;border:2px solid #536066;border-bottom:none"></div><div class="a" style="left:200.1px;top:1023px;width:15px;height:2px;background:#f4f4f4"></div><div class="a" style="left:200.1px;top:1028.4px;width:15px;height:1.8px;background:repeating-linear-gradient(90deg,#f4f4f4 0 3px,transparent 3px 4px)"></div><div class="a" style="left:251.2px;top:1000.3px;width:154px;height:72.7px;border-radius:7px;background:#536066"></div><div class="a" style="left:253.2px;top:1011.2px;width:150px;height:60px;border-radius:0 6px 6px 6px;background:#2c363a"></div><div class="a" style="left:251.2px;top:991.2px;width:73.3px;height:19.8px;border-radius:7px 7px 0 0;background:#070203;border:2px solid #536066;border-bottom:none"></div><div class="a" style="left:361.2px;top:1023px;width:15px;height:2px;background:#8e979b"></div><div class="a" style="left:361.2px;top:1028.4px;width:15px;height:1.8px;background:repeating-linear-gradient(90deg,#8e979b 0 3px,transparent 3px 4px)"></div><div class="a" style="left:412.2px;top:1000.3px;width:154px;height:72.7px;border-radius:7px;background:#536066"></div><div class="a" style="left:414.2px;top:1011.2px;width:150px;height:60px;border-radius:0 6px 6px 6px;background:#2c363a"></div><div class="a" style="left:412.2px;top:991.2px;width:73.3px;height:19.8px;border-radius:7px 7px 0 0;background:#070203;border:2px solid #536066;border-bottom:none"></div><div class="a" style="left:522.2px;top:1023px;width:15px;height:2px;background:#f4f4f4"></div><div class="a" style="left:522.2px;top:1028.4px;width:15px;height:1.8px;background:repeating-linear-gradient(90deg,#f4f4f4 0 3px,transparent 3px 4px)"></div><div class="a" style="left:573.3px;top:1000.3px;width:154px;height:72.7px;border-radius:7px;background:#536066"></div><div class="a" style="left:575.3px;top:1011.2px;width:150px;height:60px;border-radius:0 6px 6px 6px;background:#2c363a"></div><div class="a" style="left:573.3px;top:991.2px;width:73.3px;height:19.8px;border-radius:7px 7px 0 0;background:#070203;border:2px solid #536066;border-bottom:none"></div><div class="a" style="left:683.3px;top:1023px;width:15px;height:2px;background:#f4f4f4"></div><div class="a" style="left:683.3px;top:1028.4px;width:15px;height:1.8px;background:repeating-linear-gradient(90deg,#f4f4f4 0 3px,transparent 3px 4px)"></div><div class="a" style="left:744.5px;top:1000.2px;width:119.8px;height:72.2px;border-radius:7px;background:#536066"></div><div class="a" style="left:746.5px;top:1011.2px;width:115.8px;height:59.2px;border-radius:6px 0 6px 6px;background:#2c363a"></div><div class="a" style="left:792.2px;top:991.1px;width:72.1px;height:19.9px;border-radius:7px 7px 0 0;background:#000;border:2px solid #536066;border-bottom:none"></div><div class="a" style="left:871.8px;top:1000.2px;width:119.8px;height:72.2px;border-radius:7px;background:#536066"></div><div class="a" style="left:873.8px;top:1011.2px;width:115.8px;height:59.2px;border-radius:6px 0 6px 6px;background:#2c363a"></div><div class="a" style="left:919.5px;top:991.1px;width:72.1px;height:19.9px;border-radius:7px 7px 0 0;background:#000;border:2px solid #536066;border-bottom:none"></div><div class="a" style="left:999.0px;top:1000.2px;width:119.8px;height:72.2px;border-radius:7px;background:#536066"></div><div class="a" style="left:1001.0px;top:1011.2px;width:115.8px;height:59.2px;border-radius:6px 0 6px 6px;background:#2c363a"></div><div class="a" style="left:1046.7px;top:991.1px;width:72.1px;height:19.9px;border-radius:7px 7px 0 0;background:#000;border:2px solid #536066;border-bottom:none"></div><div class="a" style="left:1126.2px;top:1000.2px;width:119.8px;height:72.2px;border-radius:7px;background:#536066"></div><div class="a" style="left:1128.2px;top:1011.2px;width:115.8px;height:59.2px;border-radius:6px 0 6px 6px;background:#2c363a"></div><div class="a" style="left:1174.0px;top:991.1px;width:72.1px;height:19.9px;border-radius:7px 7px 0 0;background:#000;border:2px solid #536066;border-bottom:none"></div><svg class="a" style="left:0;top:0" width="1921" height="1080"><text transform="translate(103.99 1008.00) scale(0.848 1)" font-family="'Liberation Sans', sans-serif" font-size="16.71" font-weight="normal" font-style="normal" fill="#f0f000"  stroke="#f0f000" stroke-width="0.35">CH1</text><text transform="translate(100.50 1034.25) scale(1.013 1)" font-family="'Liberation Sans', sans-serif" font-size="18.29" font-weight="normal" font-style="normal" fill="#f0f000"  stroke="#f0f000" stroke-width="0.35">100.00mV/</text><text transform="translate(101.29 1058.80) scale(0.933 1)" font-family="'Liberation Sans', sans-serif" font-size="16.57" font-weight="normal" font-style="normal" fill="#ffffff"  stroke="#ffffff" stroke-width="0.35">0.00V</text><text transform="translate(265.01 1008.00) scale(0.911 1)" font-family="'Liberation Sans', sans-serif" font-size="16.71" font-weight="normal" font-style="normal" fill="#c4c8ca"  stroke="#c4c8ca" stroke-width="0.35">CH2</text><text transform="translate(261.57 1034.25) scale(1.013 1)" font-family="'Liberation Sans', sans-serif" font-size="18.29" font-weight="normal" font-style="normal" fill="#9aa3a7"  stroke="#9aa3a7" stroke-width="0.35">100.00mV/</text><text transform="translate(262.36 1058.80) scale(0.933 1)" font-family="'Liberation Sans', sans-serif" font-size="16.57" font-weight="normal" font-style="normal" fill="#8e979b"  stroke="#8e979b" stroke-width="0.35">0.00V</text><text transform="translate(426.13 1008.00) scale(0.844 1)" font-family="'Liberation Sans', sans-serif" font-size="16.71" font-weight="normal" font-style="normal" fill="#f000f0"  stroke="#f000f0" stroke-width="0.35">CH3</text><text transform="translate(422.64 1034.25) scale(1.013 1)" font-family="'Liberation Sans', sans-serif" font-size="18.29" font-weight="normal" font-style="normal" fill="#f000f0"  stroke="#f000f0" stroke-width="0.35">100.00mV/</text><text transform="translate(423.43 1058.80) scale(0.933 1)" font-family="'Liberation Sans', sans-serif" font-size="16.57" font-weight="normal" font-style="normal" fill="#ffffff"  stroke="#ffffff" stroke-width="0.35">0.00V</text><text transform="translate(587.21 1008.00) scale(0.839 1)" font-family="'Liberation Sans', sans-serif" font-size="16.71" font-weight="normal" font-style="normal" fill="#0a3cff"  stroke="#0a3cff" stroke-width="0.35">CH4</text><text transform="translate(583.71 1034.25) scale(1.013 1)" font-family="'Liberation Sans', sans-serif" font-size="18.29" font-weight="normal" font-style="normal" fill="#0a3cff"  stroke="#0a3cff" stroke-width="0.35">100.00mV/</text><text transform="translate(583.58 1058.50) scale(0.984 1)" font-family="'Liberation Sans', sans-serif" font-size="15.71" font-weight="normal" font-style="normal" fill="#ffffff"  stroke="#ffffff" stroke-width="0.35">-2.55V</text><text transform="translate(812.91 1008.00) scale(1.033 1)" font-family="'Liberation Sans', sans-serif" font-size="15.62" font-weight="normal" font-style="normal" fill="#b0b8bb"  stroke="#b0b8bb" stroke-width="0.35">Math1</text><text transform="translate(752.40 1027.10) scale(0.999 1)" font-family="'Liberation Sans', sans-serif" font-size="15.07" font-weight="normal" font-style="normal" fill="#a9b1b5"  stroke="#a9b1b5" stroke-width="0.35">500.00mV/</text><text transform="translate(752.58 1047.90) scale(0.927 1)" font-family="'Liberation Sans', sans-serif" font-size="15.14" font-weight="normal" font-style="normal" fill="#a9b1b5"  stroke="#a9b1b5" stroke-width="0.35">0.00V</text><text transform="translate(752.34 1067.90) scale(0.940 1)" font-family="'Liberation Sans', sans-serif" font-size="14.00" font-weight="normal" font-style="normal" fill="#a9b1b5"  stroke="#a9b1b5" stroke-width="0.35">CH1+CH1</text><text transform="translate(940.16 1008.00) scale(1.033 1)" font-family="'Liberation Sans', sans-serif" font-size="15.62" font-weight="normal" font-style="normal" fill="#b0b8bb"  stroke="#b0b8bb" stroke-width="0.35">Math2</text><text transform="translate(879.65 1027.10) scale(0.999 1)" font-family="'Liberation Sans', sans-serif" font-size="15.07" font-weight="normal" font-style="normal" fill="#a9b1b5"  stroke="#a9b1b5" stroke-width="0.35">500.00mV/</text><text transform="translate(879.83 1047.90) scale(0.927 1)" font-family="'Liberation Sans', sans-serif" font-size="15.14" font-weight="normal" font-style="normal" fill="#a9b1b5"  stroke="#a9b1b5" stroke-width="0.35">0.00V</text><text transform="translate(879.59 1067.90) scale(0.940 1)" font-family="'Liberation Sans', sans-serif" font-size="14.00" font-weight="normal" font-style="normal" fill="#a9b1b5"  stroke="#a9b1b5" stroke-width="0.35">CH1+CH1</text><text transform="translate(1067.41 1008.00) scale(1.029 1)" font-family="'Liberation Sans', sans-serif" font-size="15.62" font-weight="normal" font-style="normal" fill="#b0b8bb"  stroke="#b0b8bb" stroke-width="0.35">Math3</text><text transform="translate(1006.90 1027.10) scale(0.999 1)" font-family="'Liberation Sans', sans-serif" font-size="15.07" font-weight="normal" font-style="normal" fill="#a9b1b5"  stroke="#a9b1b5" stroke-width="0.35">500.00mV/</text><text transform="translate(1007.08 1047.90) scale(0.927 1)" font-family="'Liberation Sans', sans-serif" font-size="15.14" font-weight="normal" font-style="normal" fill="#a9b1b5"  stroke="#a9b1b5" stroke-width="0.35">0.00V</text><text transform="translate(1006.84 1067.90) scale(0.940 1)" font-family="'Liberation Sans', sans-serif" font-size="14.00" font-weight="normal" font-style="normal" fill="#a9b1b5"  stroke="#a9b1b5" stroke-width="0.35">CH1+CH1</text><text transform="translate(1194.67 1008.00) scale(1.025 1)" font-family="'Liberation Sans', sans-serif" font-size="15.62" font-weight="normal" font-style="normal" fill="#b0b8bb"  stroke="#b0b8bb" stroke-width="0.35">Math4</text><text transform="translate(1134.15 1027.10) scale(0.999 1)" font-family="'Liberation Sans', sans-serif" font-size="15.07" font-weight="normal" font-style="normal" fill="#a9b1b5"  stroke="#a9b1b5" stroke-width="0.35">500.00mV/</text><text transform="translate(1134.33 1047.90) scale(0.927 1)" font-family="'Liberation Sans', sans-serif" font-size="15.14" font-weight="normal" font-style="normal" fill="#a9b1b5"  stroke="#a9b1b5" stroke-width="0.35">0.00V</text><text transform="translate(1134.09 1067.90) scale(0.940 1)" font-family="'Liberation Sans', sans-serif" font-size="14.00" font-weight="normal" font-style="normal" fill="#a9b1b5"  stroke="#a9b1b5" stroke-width="0.35">CH1+CH1</text><text transform="translate(1806.82 1042.00) scale(0.930 1)" font-family="'Liberation Sans', sans-serif" font-size="17.14" font-weight="normal" font-style="normal" fill="#f0f0f0"  stroke="#f0f0f0" stroke-width="0.35">09:38:13</text><text transform="translate(1802.26 1064.00) scale(1.012 1)" font-family="'Liberation Sans', sans-serif" font-size="14.66" font-weight="normal" font-style="normal" fill="#f0f0f0"  stroke="#f0f0f0" stroke-width="0.35">2020/10/01</text></svg><svg class="a" style="left:1790px;top:990px" width="100" height="30">
<g fill="none" stroke="#e8e8e8" stroke-width="1">
<path d="M21.5 7 V24.5 M21.5 21 L17.8 17 V13.5 M21.5 19 L25.3 15.5 V12"/>
<path d="M21.5 6 l-1.5 2.2 h3z" fill="#e8e8e8"/>
<circle cx="17.8" cy="12.8" r="1" fill="#e8e8e8"/>
<rect x="24.3" y="10.8" width="2" height="2" fill="#e8e8e8"/>
</g>
<circle cx="21.5" cy="24.8" r="1.8" fill="#e8e8e8"/>
<text x="37" y="23.6" font-family="Liberation Sans" font-weight="bold" font-style="italic" font-size="16" fill="#f0f0f0" letter-spacing="-1.5">LXI</text>
<path d="M43 25.5 L50 12" stroke="#9a9a9a" stroke-width="2.2"/>
<g fill="none" stroke="#e8e8e8" stroke-width="1.1">
<path d="M67.5 15 H70.5 L75 8.5 V23 L70.5 17.5 H67.5 Z"/>
<path d="M75 8.5 L77.5 10 V22 L75 23"/>
<path d="M79 12 L86 19 M86 12 L79 19"/>
</g>
</svg>
</body></html>
